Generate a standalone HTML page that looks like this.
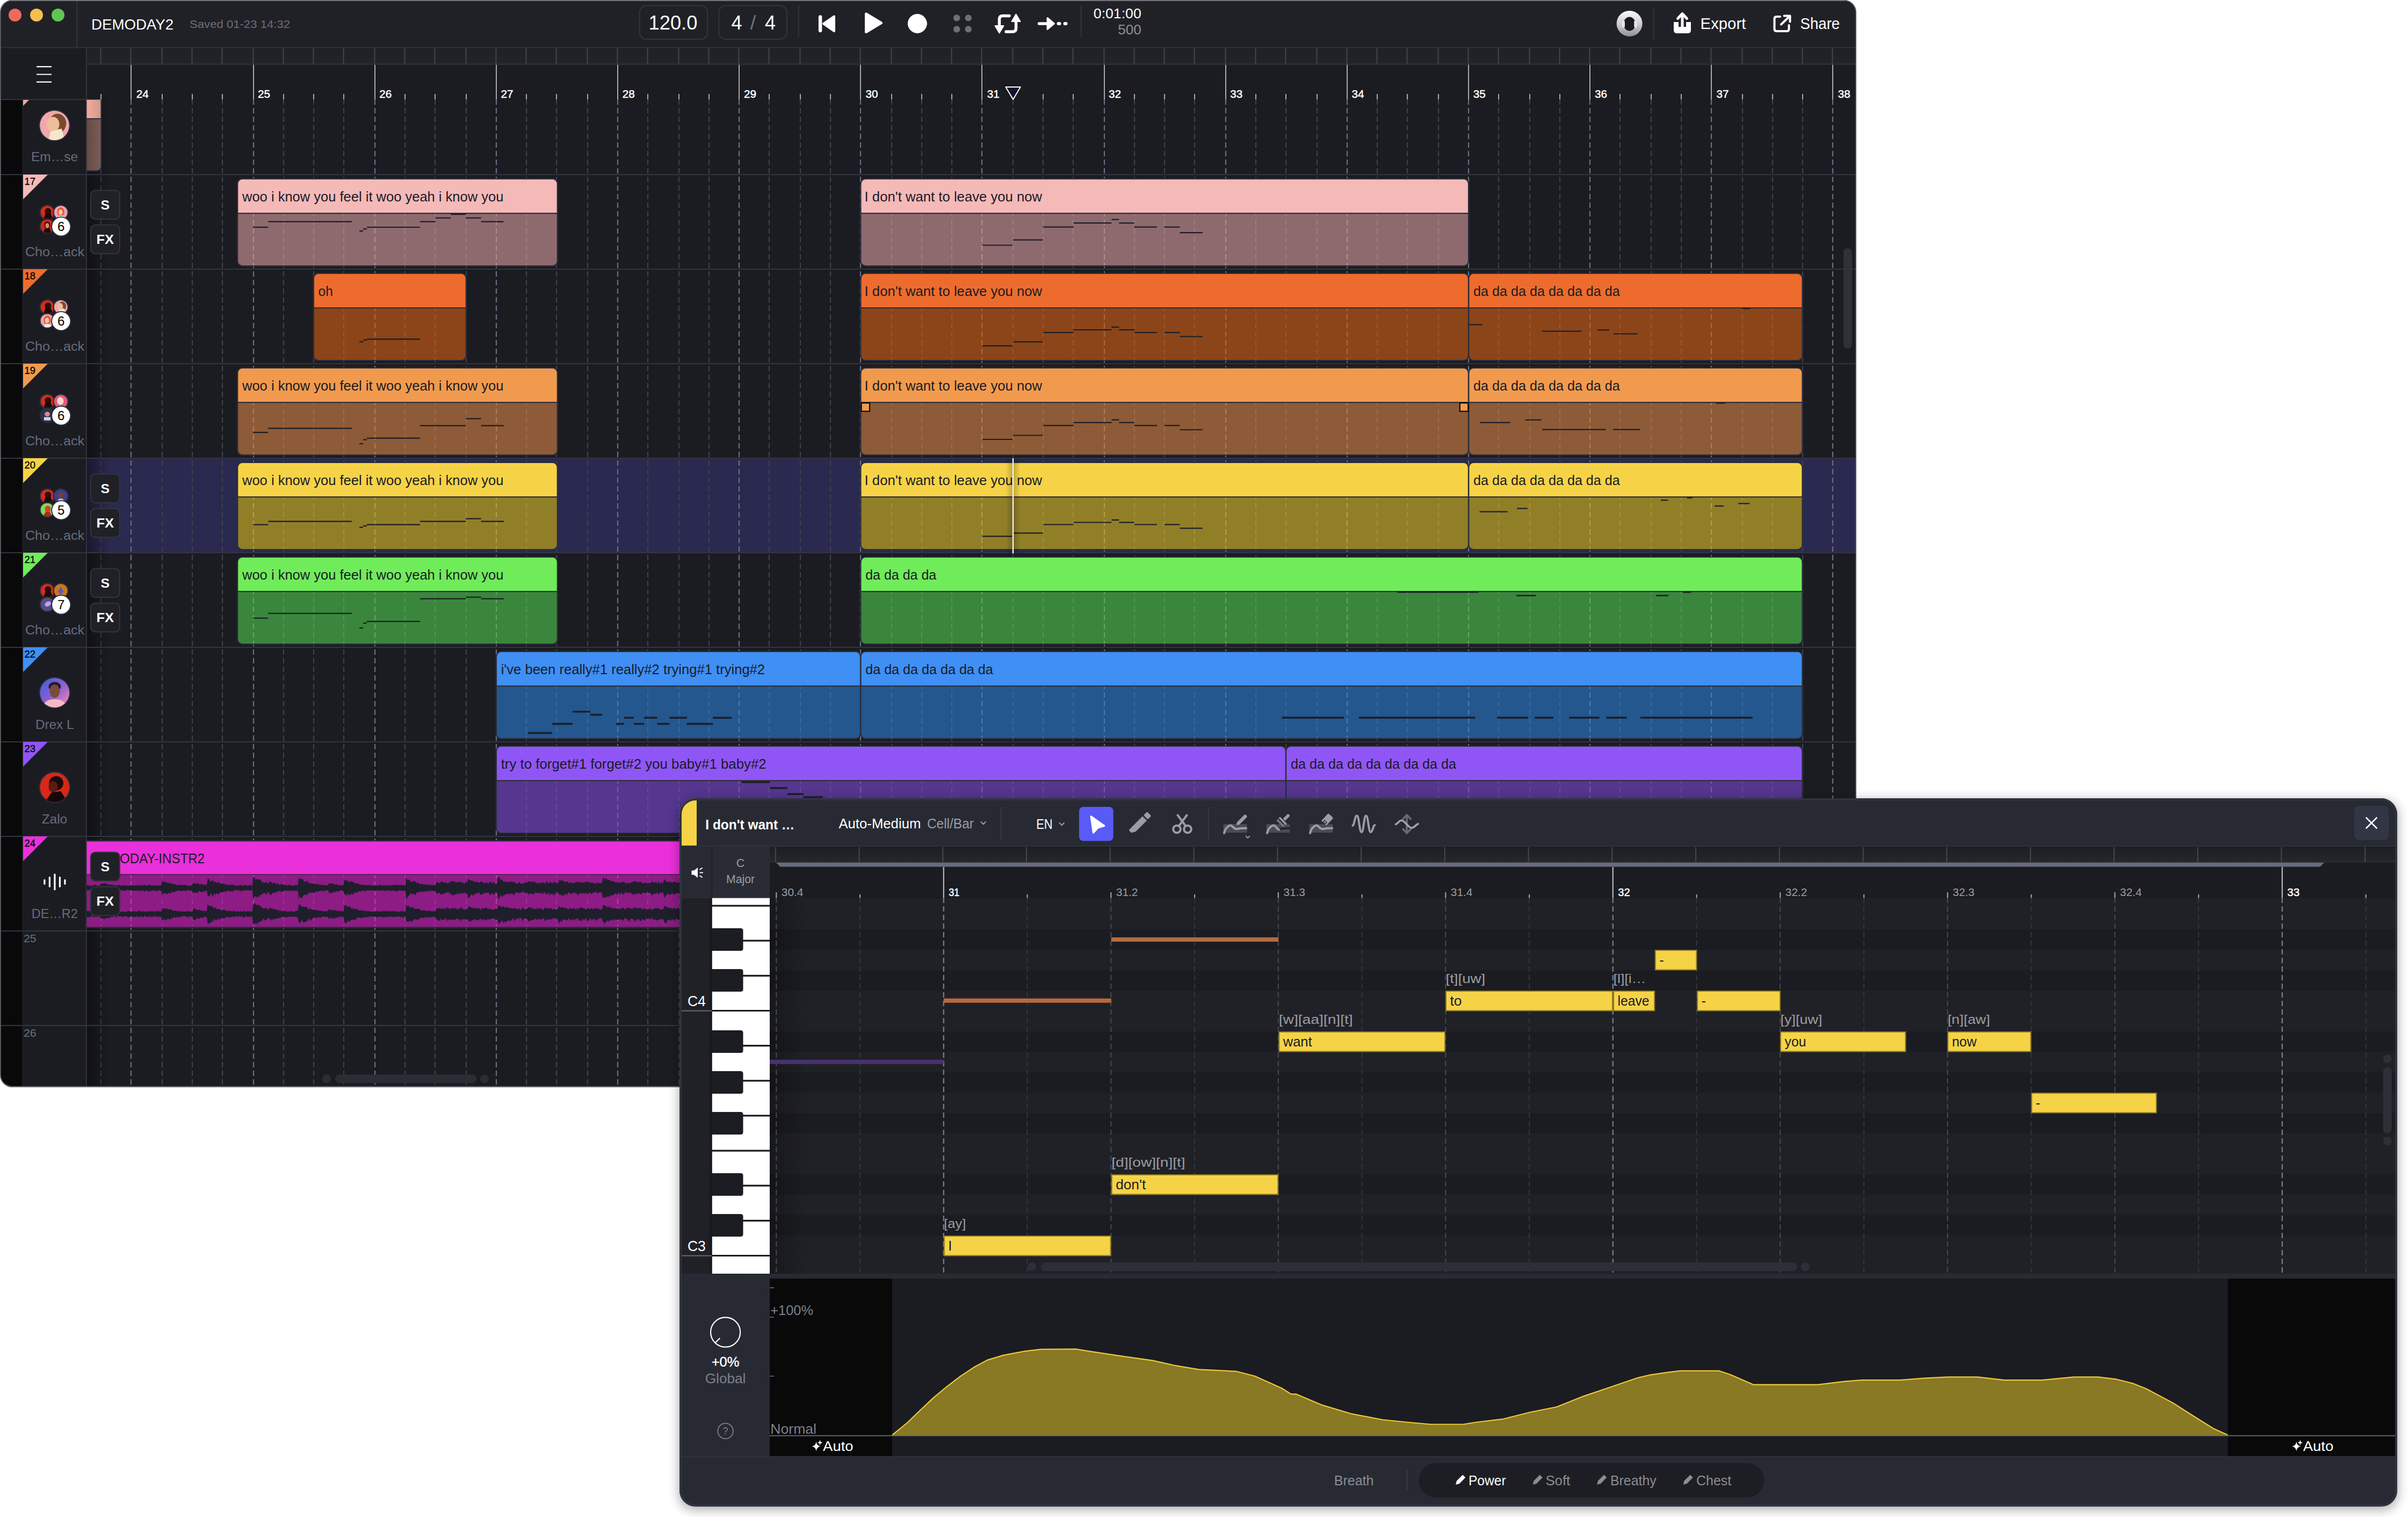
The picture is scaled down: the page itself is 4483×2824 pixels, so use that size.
<!DOCTYPE html>
<html lang="en"><head><meta charset="utf-8"><title>DEMODAY2</title>
<style>
html,body{margin:0;padding:0;background:#fff;}
body{width:4483px;height:2824px;overflow:hidden;font-family:'Liberation Sans', sans-serif;}
svg{display:block;font-family:"Liberation Sans",sans-serif;}
text{white-space:pre;}
</style></head><body>
<svg width="4483" height="2824" viewBox="0 0 4483 2824">
<defs>
<clipPath id="mwclip"><rect x="1" y="0.5" width="3454" height="2021.5" rx="22"/></clipPath>
<linearGradient id="lshade" x1="0" x2="1" y1="0" y2="0"><stop offset="0" stop-color="#000" stop-opacity="0.42"/><stop offset="1" stop-color="#000" stop-opacity="0"/></linearGradient>
<linearGradient id="c0a" x1="0" x2="1" y1="0" y2="0"><stop offset="0" stop-color="#f2ab9b"/><stop offset="1" stop-color="#cf998b"/></linearGradient>
<linearGradient id="c0b" x1="0" x2="1" y1="0" y2="0"><stop offset="0" stop-color="#664a46"/><stop offset="1" stop-color="#7b5d59"/></linearGradient>
<linearGradient id="phsh" x1="0" x2="1" y1="0" y2="0"><stop offset="0" stop-color="#000" stop-opacity="0"/><stop offset="0.5" stop-color="#000" stop-opacity="0.22"/><stop offset="1" stop-color="#000" stop-opacity="0"/></linearGradient>
<linearGradient id="strip" x1="0" x2="0" y1="0" y2="1"><stop offset="0" stop-color="#1f2026"/><stop offset="1" stop-color="#23242a"/></linearGradient>
<filter id="pshadow" x="-5%" y="-5%" width="110%" height="115%"><feGaussianBlur stdDeviation="10"/></filter>
<radialGradient id="avPink" cx="0.45" cy="0.4" r="0.7"><stop offset="0" stop-color="#f4c9b0"/><stop offset="0.45" stop-color="#e8a79a"/><stop offset="1" stop-color="#f0a9b4"/></radialGradient>
<radialGradient id="avRed" cx="0.5" cy="0.45" r="0.7"><stop offset="0" stop-color="#e23a22"/><stop offset="1" stop-color="#c11f14"/></radialGradient>
<linearGradient id="avBlue" x1="0" x2="1" y1="0" y2="1"><stop offset="0" stop-color="#3b5fe0"/><stop offset="0.5" stop-color="#8a5fd0"/><stop offset="1" stop-color="#ff8fb0"/></linearGradient>
</defs>
<g clip-path="url(#mwclip)">
<rect x="0.0" y="0.0" width="3457.0" height="2024.0" fill="#1b1c21" />
<rect x="0.0" y="0.0" width="3457.0" height="88.0" fill="#202127" />
<line x1="0.0" y1="88.7" x2="3455.0" y2="88.7" stroke="#32353f" stroke-width="2" />
<line x1="143.5" y1="0.0" x2="143.5" y2="88.0" stroke="#32353f" stroke-width="2" />
<circle cx="28" cy="28" r="12" fill="#ed6a5e"/>
<circle cx="68" cy="28" r="12" fill="#f5bf4f"/>
<circle cx="108" cy="28" r="12" fill="#61c554"/>
<text x="170.0" y="55.2" font-size="28.5" fill="#fff" textLength="153.0" lengthAdjust="spacingAndGlyphs" >DEMODAY2</text>
<text x="353.0" y="52.2" font-size="20.5" fill="#6c6e77" textLength="187.0" lengthAdjust="spacingAndGlyphs" >Saved 01-23 14:32</text>
<rect x="1190.7" y="10.5" width="126.6" height="62.5" rx="13" fill="#202127" stroke="#32353f" stroke-width="2"/>
<rect x="1338.2" y="10.5" width="126.6" height="62.5" rx="13" fill="#202127" stroke="#32353f" stroke-width="2"/>
<text x="1207.6" y="54.6" font-size="36" fill="#fff" textLength="90.7" lengthAdjust="spacingAndGlyphs" >120.0</text>
<text x="1361.6" y="54.6" font-size="36" fill="#fff" textLength="20.0" lengthAdjust="spacingAndGlyphs" >4</text>
<text x="1396.5" y="54.6" font-size="36" fill="#6c6e77" textLength="11.0" lengthAdjust="spacingAndGlyphs" >/</text>
<text x="1423.9" y="54.6" font-size="36" fill="#fff" textLength="20.0" lengthAdjust="spacingAndGlyphs" >4</text>
<line x1="1486.7" y1="10.0" x2="1486.7" y2="69.0" stroke="#32353f" stroke-width="2" />
<line x1="2012.8" y1="10.0" x2="2012.8" y2="69.0" stroke="#32353f" stroke-width="2" />
<line x1="3078.9" y1="14.0" x2="3078.9" y2="74.0" stroke="#32353f" stroke-width="2" />
<g fill="#fff" stroke="#fff" stroke-linejoin="round" stroke-linecap="round">
<rect x="1524.6" y="29" width="5" height="30.5" rx="2.5" stroke-width="1.5"/>
<path d="M1533 44.2 L1553 30.5 L1553 58 Z" stroke-width="4"/>
<path d="M1612.5 26 L1612.5 59.5 L1640.5 42.7 Z" stroke-width="5"/>
<circle cx="1707.9" cy="43.9" r="17.5" stroke-width="1"/>
</g>
<circle cx="1781.2" cy="33.4" r="6.2" fill="#6e6e73"/>
<circle cx="1781.2" cy="54.4" r="6.2" fill="#6e6e73"/>
<circle cx="1802.7" cy="33.4" r="6.2" fill="#6e6e73"/>
<circle cx="1802.7" cy="54.4" r="6.2" fill="#6e6e73"/>
<g fill="none" stroke="#fff" stroke-width="5.5" stroke-linecap="round" stroke-linejoin="round">
<path d="M1860.5 52 L1860.5 36 Q1860.5 29.5 1867 29.5 L1879 29.5"/>
<path d="M1891.5 36 L1891.5 52.5 Q1891.5 59 1885 59 L1873 59"/>
</g>
<path d="M1852.5 48 L1868.5 48 L1860.5 61.5 Z" fill="#fff" stroke="#fff" stroke-width="2" stroke-linejoin="round"/>
<path d="M1883.5 40 L1899.5 40 L1891.5 26.5 Z" fill="#fff" stroke="#fff" stroke-width="2" stroke-linejoin="round"/>
<g fill="#fff" stroke="#fff" stroke-linecap="round" stroke-linejoin="round">
<line x1="1934.5" y1="43.9" x2="1952" y2="43.9" stroke-width="5.5"/>
<path d="M1950 33.5 L1962.5 43.9 L1950 54.3 Z" stroke-width="3"/>
<rect x="1967.5" y="41" width="8" height="6" rx="3" stroke-width="0"/>
<rect x="1979.5" y="41" width="8" height="6" rx="3" stroke-width="0"/>
</g>
<text x="2035.8" y="34.4" font-size="25" fill="#fff" textLength="89.0" lengthAdjust="spacingAndGlyphs" >0:01:00</text>
<text x="2081.2" y="63.6" font-size="25" fill="#8e8e93" textLength="43.6" lengthAdjust="spacingAndGlyphs" >500</text>
<linearGradient id="ringg" x1="0" x2="0" y1="0" y2="1"><stop offset="0" stop-color="#fbfbfc"/><stop offset="0.55" stop-color="#c9cace"/><stop offset="1" stop-color="#8f9096"/></linearGradient>
<circle cx="3033.6" cy="43.9" r="24" fill="url(#ringg)"/>
<ellipse cx="3033.6" cy="44.5" rx="11" ry="13" fill="#1b1b1f"/>
<rect x="3019.5" y="38.5" width="5.5" height="13" rx="2.7" fill="#e4e4e7"/><rect x="3042.2" y="38.5" width="5.5" height="13" rx="2.7" fill="#e4e4e7"/>
<path d="M3116 41 L3116 56 Q3116 62 3122 62 L3142 62 Q3148 62 3148 56 L3148 41 L3139 41 L3139 50 L3125 50 L3125 41 Z" fill="#fff"/>
<path d="M3132 52 L3132 28 M3123.5 34.5 L3132 25.5 L3140.5 34.5" fill="none" stroke="#fff" stroke-width="5" stroke-linecap="round" stroke-linejoin="round"/>
<text x="3165.6" y="54.0" font-size="30" fill="#fff" textLength="84.7" lengthAdjust="spacingAndGlyphs" >Export</text>
<g fill="none" stroke="#fff" stroke-width="4" stroke-linecap="round" stroke-linejoin="round">
<path d="M3314 31 L3307.5 31 Q3303.5 31 3303.5 35 L3303.5 54 Q3303.5 58 3307.5 58 L3326.500 58 Q3330.500 58 3330.500 54 L3330.500 47"/>
<path d="M3316 45.500 L3332.500 29.500 M3321.500 29.500 L3332.500 29.500 L3332.500 40.500"/>
</g>
<text x="3351.5" y="54.0" font-size="30" fill="#fff" textLength="73.7" lengthAdjust="spacingAndGlyphs" >Share</text>
<rect x="0.0" y="89.7" width="160.0" height="96.0" fill="#1b1c21" />
<rect x="0.0" y="185.5" width="42.0" height="1837.0" fill="#090909" />
<rect x="42.0" y="185.5" width="118.0" height="1837.0" fill="#1b1c21" />
<line x1="68.0" y1="124.2" x2="96.0" y2="124.2" stroke="#fff" stroke-width="2.2" />
<line x1="68.0" y1="138.5" x2="96.0" y2="138.5" stroke="#fff" stroke-width="2.2" />
<line x1="68.0" y1="152.6" x2="96.0" y2="152.6" stroke="#fff" stroke-width="2.2" />
<rect x="161.0" y="89.7" width="3294.0" height="29.6" fill="url(#strip)" />
<line x1="161.0" y1="119.6" x2="3455.0" y2="119.6" stroke="#32353f" stroke-width="2" />
<line x1="187.5" y1="90.0" x2="187.5" y2="118.6" stroke="#42454e" stroke-width="2" />
<line x1="243.5" y1="90.0" x2="243.5" y2="118.6" stroke="#42454e" stroke-width="2" />
<line x1="301.5" y1="90.0" x2="301.5" y2="118.6" stroke="#42454e" stroke-width="2" />
<line x1="357.5" y1="90.0" x2="357.5" y2="118.6" stroke="#42454e" stroke-width="2" />
<line x1="413.5" y1="90.0" x2="413.5" y2="118.6" stroke="#42454e" stroke-width="2" />
<line x1="471.5" y1="90.0" x2="471.5" y2="118.6" stroke="#42454e" stroke-width="2" />
<line x1="527.5" y1="90.0" x2="527.5" y2="118.6" stroke="#42454e" stroke-width="2" />
<line x1="583.5" y1="90.0" x2="583.5" y2="118.6" stroke="#42454e" stroke-width="2" />
<line x1="639.5" y1="90.0" x2="639.5" y2="118.6" stroke="#42454e" stroke-width="2" />
<line x1="697.5" y1="90.0" x2="697.5" y2="118.6" stroke="#42454e" stroke-width="2" />
<line x1="753.5" y1="90.0" x2="753.5" y2="118.6" stroke="#42454e" stroke-width="2" />
<line x1="809.5" y1="90.0" x2="809.5" y2="118.6" stroke="#42454e" stroke-width="2" />
<line x1="867.5" y1="90.0" x2="867.5" y2="118.6" stroke="#42454e" stroke-width="2" />
<line x1="923.5" y1="90.0" x2="923.5" y2="118.6" stroke="#42454e" stroke-width="2" />
<line x1="979.5" y1="90.0" x2="979.5" y2="118.6" stroke="#42454e" stroke-width="2" />
<line x1="1035.5" y1="90.0" x2="1035.5" y2="118.6" stroke="#42454e" stroke-width="2" />
<line x1="1093.5" y1="90.0" x2="1093.5" y2="118.6" stroke="#42454e" stroke-width="2" />
<line x1="1149.5" y1="90.0" x2="1149.5" y2="118.6" stroke="#42454e" stroke-width="2" />
<line x1="1205.5" y1="90.0" x2="1205.5" y2="118.6" stroke="#42454e" stroke-width="2" />
<line x1="1263.5" y1="90.0" x2="1263.5" y2="118.6" stroke="#42454e" stroke-width="2" />
<line x1="1319.5" y1="90.0" x2="1319.5" y2="118.6" stroke="#42454e" stroke-width="2" />
<line x1="1375.5" y1="90.0" x2="1375.5" y2="118.6" stroke="#42454e" stroke-width="2" />
<line x1="1431.5" y1="90.0" x2="1431.5" y2="118.6" stroke="#42454e" stroke-width="2" />
<line x1="1489.5" y1="90.0" x2="1489.5" y2="118.6" stroke="#42454e" stroke-width="2" />
<line x1="1545.5" y1="90.0" x2="1545.5" y2="118.6" stroke="#42454e" stroke-width="2" />
<line x1="1601.5" y1="90.0" x2="1601.5" y2="118.6" stroke="#42454e" stroke-width="2" />
<line x1="1659.5" y1="90.0" x2="1659.5" y2="118.6" stroke="#42454e" stroke-width="2" />
<line x1="1715.5" y1="90.0" x2="1715.5" y2="118.6" stroke="#42454e" stroke-width="2" />
<line x1="1771.5" y1="90.0" x2="1771.5" y2="118.6" stroke="#42454e" stroke-width="2" />
<line x1="1827.5" y1="90.0" x2="1827.5" y2="118.6" stroke="#42454e" stroke-width="2" />
<line x1="1885.5" y1="90.0" x2="1885.5" y2="118.6" stroke="#42454e" stroke-width="2" />
<line x1="1941.5" y1="90.0" x2="1941.5" y2="118.6" stroke="#42454e" stroke-width="2" />
<line x1="1997.5" y1="90.0" x2="1997.5" y2="118.6" stroke="#42454e" stroke-width="2" />
<line x1="2055.5" y1="90.0" x2="2055.5" y2="118.6" stroke="#42454e" stroke-width="2" />
<line x1="2111.5" y1="90.0" x2="2111.5" y2="118.6" stroke="#42454e" stroke-width="2" />
<line x1="2167.5" y1="90.0" x2="2167.5" y2="118.6" stroke="#42454e" stroke-width="2" />
<line x1="2223.5" y1="90.0" x2="2223.5" y2="118.6" stroke="#42454e" stroke-width="2" />
<line x1="2281.5" y1="90.0" x2="2281.5" y2="118.6" stroke="#42454e" stroke-width="2" />
<line x1="2337.5" y1="90.0" x2="2337.5" y2="118.6" stroke="#42454e" stroke-width="2" />
<line x1="2393.5" y1="90.0" x2="2393.5" y2="118.6" stroke="#42454e" stroke-width="2" />
<line x1="2451.5" y1="90.0" x2="2451.5" y2="118.6" stroke="#42454e" stroke-width="2" />
<line x1="2507.5" y1="90.0" x2="2507.5" y2="118.6" stroke="#42454e" stroke-width="2" />
<line x1="2563.5" y1="90.0" x2="2563.5" y2="118.6" stroke="#42454e" stroke-width="2" />
<line x1="2619.5" y1="90.0" x2="2619.5" y2="118.6" stroke="#42454e" stroke-width="2" />
<line x1="2677.5" y1="90.0" x2="2677.5" y2="118.6" stroke="#42454e" stroke-width="2" />
<line x1="2733.5" y1="90.0" x2="2733.5" y2="118.6" stroke="#42454e" stroke-width="2" />
<line x1="2789.5" y1="90.0" x2="2789.5" y2="118.6" stroke="#42454e" stroke-width="2" />
<line x1="2847.5" y1="90.0" x2="2847.5" y2="118.6" stroke="#42454e" stroke-width="2" />
<line x1="2903.5" y1="90.0" x2="2903.5" y2="118.6" stroke="#42454e" stroke-width="2" />
<line x1="2959.5" y1="90.0" x2="2959.5" y2="118.6" stroke="#42454e" stroke-width="2" />
<line x1="3015.5" y1="90.0" x2="3015.5" y2="118.6" stroke="#42454e" stroke-width="2" />
<line x1="3073.5" y1="90.0" x2="3073.5" y2="118.6" stroke="#42454e" stroke-width="2" />
<line x1="3129.5" y1="90.0" x2="3129.5" y2="118.6" stroke="#42454e" stroke-width="2" />
<line x1="3185.5" y1="90.0" x2="3185.5" y2="118.6" stroke="#42454e" stroke-width="2" />
<line x1="3243.5" y1="90.0" x2="3243.5" y2="118.6" stroke="#42454e" stroke-width="2" />
<line x1="3299.5" y1="90.0" x2="3299.5" y2="118.6" stroke="#42454e" stroke-width="2" />
<line x1="3355.5" y1="90.0" x2="3355.5" y2="118.6" stroke="#42454e" stroke-width="2" />
<line x1="3411.5" y1="90.0" x2="3411.5" y2="118.6" stroke="#42454e" stroke-width="2" />
<line x1="188.0" y1="175.0" x2="188.0" y2="185.0" stroke="#aaaaac" stroke-width="2" />
<line x1="244.0" y1="120.5" x2="244.0" y2="185.0" stroke="#aaaaac" stroke-width="2" />
<text x="253.7" y="181.6" font-size="20.5" fill="#fff" textLength="23.0" lengthAdjust="spacingAndGlyphs" stroke="#fff" stroke-width="0.5">24</text>
<line x1="302.0" y1="175.0" x2="302.0" y2="185.0" stroke="#aaaaac" stroke-width="2" />
<line x1="358.0" y1="175.0" x2="358.0" y2="185.0" stroke="#aaaaac" stroke-width="2" />
<line x1="414.0" y1="175.0" x2="414.0" y2="185.0" stroke="#aaaaac" stroke-width="2" />
<line x1="472.0" y1="120.5" x2="472.0" y2="185.0" stroke="#aaaaac" stroke-width="2" />
<text x="480.0" y="181.6" font-size="20.5" fill="#fff" textLength="23.0" lengthAdjust="spacingAndGlyphs" stroke="#fff" stroke-width="0.5">25</text>
<line x1="528.0" y1="175.0" x2="528.0" y2="185.0" stroke="#aaaaac" stroke-width="2" />
<line x1="584.0" y1="175.0" x2="584.0" y2="185.0" stroke="#aaaaac" stroke-width="2" />
<line x1="640.0" y1="175.0" x2="640.0" y2="185.0" stroke="#aaaaac" stroke-width="2" />
<line x1="698.0" y1="120.5" x2="698.0" y2="185.0" stroke="#aaaaac" stroke-width="2" />
<text x="706.3" y="181.6" font-size="20.5" fill="#fff" textLength="23.0" lengthAdjust="spacingAndGlyphs" stroke="#fff" stroke-width="0.5">26</text>
<line x1="754.0" y1="175.0" x2="754.0" y2="185.0" stroke="#aaaaac" stroke-width="2" />
<line x1="810.0" y1="175.0" x2="810.0" y2="185.0" stroke="#aaaaac" stroke-width="2" />
<line x1="868.0" y1="175.0" x2="868.0" y2="185.0" stroke="#aaaaac" stroke-width="2" />
<line x1="924.0" y1="120.5" x2="924.0" y2="185.0" stroke="#aaaaac" stroke-width="2" />
<text x="932.6" y="181.6" font-size="20.5" fill="#fff" textLength="23.0" lengthAdjust="spacingAndGlyphs" stroke="#fff" stroke-width="0.5">27</text>
<line x1="980.0" y1="175.0" x2="980.0" y2="185.0" stroke="#aaaaac" stroke-width="2" />
<line x1="1036.0" y1="175.0" x2="1036.0" y2="185.0" stroke="#aaaaac" stroke-width="2" />
<line x1="1094.0" y1="175.0" x2="1094.0" y2="185.0" stroke="#aaaaac" stroke-width="2" />
<line x1="1150.0" y1="120.5" x2="1150.0" y2="185.0" stroke="#aaaaac" stroke-width="2" />
<text x="1158.8" y="181.6" font-size="20.5" fill="#fff" textLength="23.0" lengthAdjust="spacingAndGlyphs" stroke="#fff" stroke-width="0.5">28</text>
<line x1="1206.0" y1="175.0" x2="1206.0" y2="185.0" stroke="#aaaaac" stroke-width="2" />
<line x1="1264.0" y1="175.0" x2="1264.0" y2="185.0" stroke="#aaaaac" stroke-width="2" />
<line x1="1320.0" y1="175.0" x2="1320.0" y2="185.0" stroke="#aaaaac" stroke-width="2" />
<line x1="1376.0" y1="120.5" x2="1376.0" y2="185.0" stroke="#aaaaac" stroke-width="2" />
<text x="1385.1" y="181.6" font-size="20.5" fill="#fff" textLength="23.0" lengthAdjust="spacingAndGlyphs" stroke="#fff" stroke-width="0.5">29</text>
<line x1="1432.0" y1="175.0" x2="1432.0" y2="185.0" stroke="#aaaaac" stroke-width="2" />
<line x1="1490.0" y1="175.0" x2="1490.0" y2="185.0" stroke="#aaaaac" stroke-width="2" />
<line x1="1546.0" y1="175.0" x2="1546.0" y2="185.0" stroke="#aaaaac" stroke-width="2" />
<line x1="1602.0" y1="120.5" x2="1602.0" y2="185.0" stroke="#aaaaac" stroke-width="2" />
<text x="1611.4" y="181.6" font-size="20.5" fill="#fff" textLength="23.0" lengthAdjust="spacingAndGlyphs" stroke="#fff" stroke-width="0.5">30</text>
<line x1="1660.0" y1="175.0" x2="1660.0" y2="185.0" stroke="#aaaaac" stroke-width="2" />
<line x1="1716.0" y1="175.0" x2="1716.0" y2="185.0" stroke="#aaaaac" stroke-width="2" />
<line x1="1772.0" y1="175.0" x2="1772.0" y2="185.0" stroke="#aaaaac" stroke-width="2" />
<line x1="1828.0" y1="120.5" x2="1828.0" y2="185.0" stroke="#aaaaac" stroke-width="2" />
<text x="1837.7" y="181.6" font-size="20.5" fill="#fff" textLength="23.0" lengthAdjust="spacingAndGlyphs" stroke="#fff" stroke-width="0.5">31</text>
<line x1="1886.0" y1="175.0" x2="1886.0" y2="185.0" stroke="#aaaaac" stroke-width="2" />
<line x1="1942.0" y1="175.0" x2="1942.0" y2="185.0" stroke="#aaaaac" stroke-width="2" />
<line x1="1998.0" y1="175.0" x2="1998.0" y2="185.0" stroke="#aaaaac" stroke-width="2" />
<line x1="2056.0" y1="120.5" x2="2056.0" y2="185.0" stroke="#aaaaac" stroke-width="2" />
<text x="2064.0" y="181.6" font-size="20.5" fill="#fff" textLength="23.0" lengthAdjust="spacingAndGlyphs" stroke="#fff" stroke-width="0.5">32</text>
<line x1="2112.0" y1="175.0" x2="2112.0" y2="185.0" stroke="#aaaaac" stroke-width="2" />
<line x1="2168.0" y1="175.0" x2="2168.0" y2="185.0" stroke="#aaaaac" stroke-width="2" />
<line x1="2224.0" y1="175.0" x2="2224.0" y2="185.0" stroke="#aaaaac" stroke-width="2" />
<line x1="2282.0" y1="120.5" x2="2282.0" y2="185.0" stroke="#aaaaac" stroke-width="2" />
<text x="2290.3" y="181.6" font-size="20.5" fill="#fff" textLength="23.0" lengthAdjust="spacingAndGlyphs" stroke="#fff" stroke-width="0.5">33</text>
<line x1="2338.0" y1="175.0" x2="2338.0" y2="185.0" stroke="#aaaaac" stroke-width="2" />
<line x1="2394.0" y1="175.0" x2="2394.0" y2="185.0" stroke="#aaaaac" stroke-width="2" />
<line x1="2452.0" y1="175.0" x2="2452.0" y2="185.0" stroke="#aaaaac" stroke-width="2" />
<line x1="2508.0" y1="120.5" x2="2508.0" y2="185.0" stroke="#aaaaac" stroke-width="2" />
<text x="2516.6" y="181.6" font-size="20.5" fill="#fff" textLength="23.0" lengthAdjust="spacingAndGlyphs" stroke="#fff" stroke-width="0.5">34</text>
<line x1="2564.0" y1="175.0" x2="2564.0" y2="185.0" stroke="#aaaaac" stroke-width="2" />
<line x1="2620.0" y1="175.0" x2="2620.0" y2="185.0" stroke="#aaaaac" stroke-width="2" />
<line x1="2678.0" y1="175.0" x2="2678.0" y2="185.0" stroke="#aaaaac" stroke-width="2" />
<line x1="2734.0" y1="120.5" x2="2734.0" y2="185.0" stroke="#aaaaac" stroke-width="2" />
<text x="2742.8" y="181.6" font-size="20.5" fill="#fff" textLength="23.0" lengthAdjust="spacingAndGlyphs" stroke="#fff" stroke-width="0.5">35</text>
<line x1="2790.0" y1="175.0" x2="2790.0" y2="185.0" stroke="#aaaaac" stroke-width="2" />
<line x1="2848.0" y1="175.0" x2="2848.0" y2="185.0" stroke="#aaaaac" stroke-width="2" />
<line x1="2904.0" y1="175.0" x2="2904.0" y2="185.0" stroke="#aaaaac" stroke-width="2" />
<line x1="2960.0" y1="120.5" x2="2960.0" y2="185.0" stroke="#aaaaac" stroke-width="2" />
<text x="2969.1" y="181.6" font-size="20.5" fill="#fff" textLength="23.0" lengthAdjust="spacingAndGlyphs" stroke="#fff" stroke-width="0.5">36</text>
<line x1="3016.0" y1="175.0" x2="3016.0" y2="185.0" stroke="#aaaaac" stroke-width="2" />
<line x1="3074.0" y1="175.0" x2="3074.0" y2="185.0" stroke="#aaaaac" stroke-width="2" />
<line x1="3130.0" y1="175.0" x2="3130.0" y2="185.0" stroke="#aaaaac" stroke-width="2" />
<line x1="3186.0" y1="120.5" x2="3186.0" y2="185.0" stroke="#aaaaac" stroke-width="2" />
<text x="3195.4" y="181.6" font-size="20.5" fill="#fff" textLength="23.0" lengthAdjust="spacingAndGlyphs" stroke="#fff" stroke-width="0.5">37</text>
<line x1="3244.0" y1="175.0" x2="3244.0" y2="185.0" stroke="#aaaaac" stroke-width="2" />
<line x1="3300.0" y1="175.0" x2="3300.0" y2="185.0" stroke="#aaaaac" stroke-width="2" />
<line x1="3356.0" y1="175.0" x2="3356.0" y2="185.0" stroke="#aaaaac" stroke-width="2" />
<line x1="3412.0" y1="120.5" x2="3412.0" y2="185.0" stroke="#aaaaac" stroke-width="2" />
<text x="3421.7" y="181.6" font-size="20.5" fill="#fff" textLength="23.0" lengthAdjust="spacingAndGlyphs" stroke="#fff" stroke-width="0.5">38</text>
<rect x="161.0" y="852.0" width="3294.0" height="176.0" fill="#2a2950" />
<line x1="188.0" y1="185.0" x2="188.0" y2="2022.0" stroke="#3d3f4a" stroke-width="2.2" stroke-dasharray="10 6"/>
<line x1="244.0" y1="185.0" x2="244.0" y2="2022.0" stroke="#696d80" stroke-width="2.2" stroke-dasharray="10 6"/>
<line x1="302.0" y1="185.0" x2="302.0" y2="2022.0" stroke="#3d3f4a" stroke-width="2.2" stroke-dasharray="10 6"/>
<line x1="358.0" y1="185.0" x2="358.0" y2="2022.0" stroke="#3d3f4a" stroke-width="2.2" stroke-dasharray="10 6"/>
<line x1="414.0" y1="185.0" x2="414.0" y2="2022.0" stroke="#3d3f4a" stroke-width="2.2" stroke-dasharray="10 6"/>
<line x1="472.0" y1="185.0" x2="472.0" y2="2022.0" stroke="#696d80" stroke-width="2.2" stroke-dasharray="10 6"/>
<line x1="528.0" y1="185.0" x2="528.0" y2="2022.0" stroke="#3d3f4a" stroke-width="2.2" stroke-dasharray="10 6"/>
<line x1="584.0" y1="185.0" x2="584.0" y2="2022.0" stroke="#3d3f4a" stroke-width="2.2" stroke-dasharray="10 6"/>
<line x1="640.0" y1="185.0" x2="640.0" y2="2022.0" stroke="#3d3f4a" stroke-width="2.2" stroke-dasharray="10 6"/>
<line x1="698.0" y1="185.0" x2="698.0" y2="2022.0" stroke="#696d80" stroke-width="2.2" stroke-dasharray="10 6"/>
<line x1="754.0" y1="185.0" x2="754.0" y2="2022.0" stroke="#3d3f4a" stroke-width="2.2" stroke-dasharray="10 6"/>
<line x1="810.0" y1="185.0" x2="810.0" y2="2022.0" stroke="#3d3f4a" stroke-width="2.2" stroke-dasharray="10 6"/>
<line x1="868.0" y1="185.0" x2="868.0" y2="2022.0" stroke="#3d3f4a" stroke-width="2.2" stroke-dasharray="10 6"/>
<line x1="924.0" y1="185.0" x2="924.0" y2="2022.0" stroke="#696d80" stroke-width="2.2" stroke-dasharray="10 6"/>
<line x1="980.0" y1="185.0" x2="980.0" y2="2022.0" stroke="#3d3f4a" stroke-width="2.2" stroke-dasharray="10 6"/>
<line x1="1036.0" y1="185.0" x2="1036.0" y2="2022.0" stroke="#3d3f4a" stroke-width="2.2" stroke-dasharray="10 6"/>
<line x1="1094.0" y1="185.0" x2="1094.0" y2="2022.0" stroke="#3d3f4a" stroke-width="2.2" stroke-dasharray="10 6"/>
<line x1="1150.0" y1="185.0" x2="1150.0" y2="2022.0" stroke="#696d80" stroke-width="2.2" stroke-dasharray="10 6"/>
<line x1="1206.0" y1="185.0" x2="1206.0" y2="2022.0" stroke="#3d3f4a" stroke-width="2.2" stroke-dasharray="10 6"/>
<line x1="1264.0" y1="185.0" x2="1264.0" y2="2022.0" stroke="#3d3f4a" stroke-width="2.2" stroke-dasharray="10 6"/>
<line x1="1320.0" y1="185.0" x2="1320.0" y2="2022.0" stroke="#3d3f4a" stroke-width="2.2" stroke-dasharray="10 6"/>
<line x1="1376.0" y1="185.0" x2="1376.0" y2="2022.0" stroke="#696d80" stroke-width="2.2" stroke-dasharray="10 6"/>
<line x1="1432.0" y1="185.0" x2="1432.0" y2="2022.0" stroke="#3d3f4a" stroke-width="2.2" stroke-dasharray="10 6"/>
<line x1="1490.0" y1="185.0" x2="1490.0" y2="2022.0" stroke="#3d3f4a" stroke-width="2.2" stroke-dasharray="10 6"/>
<line x1="1546.0" y1="185.0" x2="1546.0" y2="2022.0" stroke="#3d3f4a" stroke-width="2.2" stroke-dasharray="10 6"/>
<line x1="1602.0" y1="185.0" x2="1602.0" y2="2022.0" stroke="#696d80" stroke-width="2.2" stroke-dasharray="10 6"/>
<line x1="1660.0" y1="185.0" x2="1660.0" y2="2022.0" stroke="#3d3f4a" stroke-width="2.2" stroke-dasharray="10 6"/>
<line x1="1716.0" y1="185.0" x2="1716.0" y2="2022.0" stroke="#3d3f4a" stroke-width="2.2" stroke-dasharray="10 6"/>
<line x1="1772.0" y1="185.0" x2="1772.0" y2="2022.0" stroke="#3d3f4a" stroke-width="2.2" stroke-dasharray="10 6"/>
<line x1="1828.0" y1="185.0" x2="1828.0" y2="2022.0" stroke="#696d80" stroke-width="2.2" stroke-dasharray="10 6"/>
<line x1="1886.0" y1="185.0" x2="1886.0" y2="2022.0" stroke="#3d3f4a" stroke-width="2.2" stroke-dasharray="10 6"/>
<line x1="1942.0" y1="185.0" x2="1942.0" y2="2022.0" stroke="#3d3f4a" stroke-width="2.2" stroke-dasharray="10 6"/>
<line x1="1998.0" y1="185.0" x2="1998.0" y2="2022.0" stroke="#3d3f4a" stroke-width="2.2" stroke-dasharray="10 6"/>
<line x1="2056.0" y1="185.0" x2="2056.0" y2="2022.0" stroke="#696d80" stroke-width="2.2" stroke-dasharray="10 6"/>
<line x1="2112.0" y1="185.0" x2="2112.0" y2="2022.0" stroke="#3d3f4a" stroke-width="2.2" stroke-dasharray="10 6"/>
<line x1="2168.0" y1="185.0" x2="2168.0" y2="2022.0" stroke="#3d3f4a" stroke-width="2.2" stroke-dasharray="10 6"/>
<line x1="2224.0" y1="185.0" x2="2224.0" y2="2022.0" stroke="#3d3f4a" stroke-width="2.2" stroke-dasharray="10 6"/>
<line x1="2282.0" y1="185.0" x2="2282.0" y2="2022.0" stroke="#696d80" stroke-width="2.2" stroke-dasharray="10 6"/>
<line x1="2338.0" y1="185.0" x2="2338.0" y2="2022.0" stroke="#3d3f4a" stroke-width="2.2" stroke-dasharray="10 6"/>
<line x1="2394.0" y1="185.0" x2="2394.0" y2="2022.0" stroke="#3d3f4a" stroke-width="2.2" stroke-dasharray="10 6"/>
<line x1="2452.0" y1="185.0" x2="2452.0" y2="2022.0" stroke="#3d3f4a" stroke-width="2.2" stroke-dasharray="10 6"/>
<line x1="2508.0" y1="185.0" x2="2508.0" y2="2022.0" stroke="#696d80" stroke-width="2.2" stroke-dasharray="10 6"/>
<line x1="2564.0" y1="185.0" x2="2564.0" y2="2022.0" stroke="#3d3f4a" stroke-width="2.2" stroke-dasharray="10 6"/>
<line x1="2620.0" y1="185.0" x2="2620.0" y2="2022.0" stroke="#3d3f4a" stroke-width="2.2" stroke-dasharray="10 6"/>
<line x1="2678.0" y1="185.0" x2="2678.0" y2="2022.0" stroke="#3d3f4a" stroke-width="2.2" stroke-dasharray="10 6"/>
<line x1="2734.0" y1="185.0" x2="2734.0" y2="2022.0" stroke="#696d80" stroke-width="2.2" stroke-dasharray="10 6"/>
<line x1="2790.0" y1="185.0" x2="2790.0" y2="2022.0" stroke="#3d3f4a" stroke-width="2.2" stroke-dasharray="10 6"/>
<line x1="2848.0" y1="185.0" x2="2848.0" y2="2022.0" stroke="#3d3f4a" stroke-width="2.2" stroke-dasharray="10 6"/>
<line x1="2904.0" y1="185.0" x2="2904.0" y2="2022.0" stroke="#3d3f4a" stroke-width="2.2" stroke-dasharray="10 6"/>
<line x1="2960.0" y1="185.0" x2="2960.0" y2="2022.0" stroke="#696d80" stroke-width="2.2" stroke-dasharray="10 6"/>
<line x1="3016.0" y1="185.0" x2="3016.0" y2="2022.0" stroke="#3d3f4a" stroke-width="2.2" stroke-dasharray="10 6"/>
<line x1="3074.0" y1="185.0" x2="3074.0" y2="2022.0" stroke="#3d3f4a" stroke-width="2.2" stroke-dasharray="10 6"/>
<line x1="3130.0" y1="185.0" x2="3130.0" y2="2022.0" stroke="#3d3f4a" stroke-width="2.2" stroke-dasharray="10 6"/>
<line x1="3186.0" y1="185.0" x2="3186.0" y2="2022.0" stroke="#696d80" stroke-width="2.2" stroke-dasharray="10 6"/>
<line x1="3244.0" y1="185.0" x2="3244.0" y2="2022.0" stroke="#3d3f4a" stroke-width="2.2" stroke-dasharray="10 6"/>
<line x1="3300.0" y1="185.0" x2="3300.0" y2="2022.0" stroke="#3d3f4a" stroke-width="2.2" stroke-dasharray="10 6"/>
<line x1="3356.0" y1="185.0" x2="3356.0" y2="2022.0" stroke="#3d3f4a" stroke-width="2.2" stroke-dasharray="10 6"/>
<line x1="3412.0" y1="185.0" x2="3412.0" y2="2022.0" stroke="#696d80" stroke-width="2.2" stroke-dasharray="10 6"/>
<rect x="161.0" y="185.5" width="44.0" height="1837.0" fill="url(#lshade)" />
<line x1="0.0" y1="325.0" x2="3455.0" y2="325.0" stroke="#32353f" stroke-width="2.1" />
<line x1="0.0" y1="501.0" x2="3455.0" y2="501.0" stroke="#32353f" stroke-width="2.1" />
<line x1="0.0" y1="677.0" x2="3455.0" y2="677.0" stroke="#32353f" stroke-width="2.1" />
<line x1="0.0" y1="853.0" x2="3455.0" y2="853.0" stroke="#32353f" stroke-width="2.1" />
<line x1="0.0" y1="1029.0" x2="3455.0" y2="1029.0" stroke="#32353f" stroke-width="2.1" />
<line x1="0.0" y1="1205.0" x2="3455.0" y2="1205.0" stroke="#32353f" stroke-width="2.1" />
<line x1="0.0" y1="1381.0" x2="3455.0" y2="1381.0" stroke="#32353f" stroke-width="2.1" />
<line x1="0.0" y1="1557.0" x2="3455.0" y2="1557.0" stroke="#32353f" stroke-width="2.1" />
<line x1="0.0" y1="1733.0" x2="3455.0" y2="1733.0" stroke="#32353f" stroke-width="2.1" />
<line x1="0.0" y1="1909.0" x2="3455.0" y2="1909.0" stroke="#32353f" stroke-width="2.1" />
<line x1="0.0" y1="185.3" x2="161.0" y2="185.3" stroke="#32353f" stroke-width="2" />
<line x1="160.8" y1="89.0" x2="160.8" y2="2022.0" stroke="#32353f" stroke-width="2" />
<line x1="42.3" y1="185.0" x2="42.3" y2="2022.0" stroke="#23252c" stroke-width="1.5" />
<g>
<rect x="161.5" y="185.5" width="27.0" height="34.5" fill="url(#c0a)" />
<path d="M161.5 222 L188.5 222 L188.5 309 Q188.500 318 179.500 318 L161.500 318 Z" fill="url(#c0b)"/>
<path d="M188.5 185.5 L188.5 309 Q188.5 318 179.5 318 L161.5 318" fill="none" stroke="#2a2e3b" stroke-width="2.2"/>
<line x1="161.5" y1="221.0" x2="188.5" y2="221.0" stroke="#2a2e3b" stroke-width="2.2" />
</g>
<clipPath id="cc1"><rect x="442.2" y="333" width="595.6" height="162" rx="9"/></clipPath>
<g clip-path="url(#cc1)">
<rect x="442.2" y="397.0" width="595.6" height="98.0" fill="#8e6a6e" />
<line x1="472.0" y1="185.0" x2="472.0" y2="495.0" stroke="#fadcdc" stroke-width="2.2" stroke-dasharray="10 6" stroke-opacity="0.3"/>
<line x1="528.0" y1="185.0" x2="528.0" y2="495.0" stroke="#fadcdc" stroke-width="2.2" stroke-dasharray="10 6" stroke-opacity="0.15"/>
<line x1="584.0" y1="185.0" x2="584.0" y2="495.0" stroke="#fadcdc" stroke-width="2.2" stroke-dasharray="10 6" stroke-opacity="0.15"/>
<line x1="640.0" y1="185.0" x2="640.0" y2="495.0" stroke="#fadcdc" stroke-width="2.2" stroke-dasharray="10 6" stroke-opacity="0.15"/>
<line x1="698.0" y1="185.0" x2="698.0" y2="495.0" stroke="#fadcdc" stroke-width="2.2" stroke-dasharray="10 6" stroke-opacity="0.3"/>
<line x1="754.0" y1="185.0" x2="754.0" y2="495.0" stroke="#fadcdc" stroke-width="2.2" stroke-dasharray="10 6" stroke-opacity="0.15"/>
<line x1="810.0" y1="185.0" x2="810.0" y2="495.0" stroke="#fadcdc" stroke-width="2.2" stroke-dasharray="10 6" stroke-opacity="0.15"/>
<line x1="868.0" y1="185.0" x2="868.0" y2="495.0" stroke="#fadcdc" stroke-width="2.2" stroke-dasharray="10 6" stroke-opacity="0.15"/>
<line x1="924.0" y1="185.0" x2="924.0" y2="495.0" stroke="#fadcdc" stroke-width="2.2" stroke-dasharray="10 6" stroke-opacity="0.3"/>
<line x1="980.0" y1="185.0" x2="980.0" y2="495.0" stroke="#fadcdc" stroke-width="2.2" stroke-dasharray="10 6" stroke-opacity="0.15"/>
<rect x="442.2" y="333.0" width="595.6" height="64.0" fill="#f5b9b8" />
<line x1="442.2" y1="397.2" x2="1037.8" y2="397.2" stroke="#33303a" stroke-width="2.2" />
</g>
<rect x="442.2" y="333" width="595.6" height="162" rx="9" fill="none" stroke="#2a2e3b" stroke-width="2.2"/>
<text x="451.0" y="375.0" font-size="25" fill="#1a1b26" textLength="486.4" lengthAdjust="spacingAndGlyphs" >woo i know you feel it woo yeah i know you</text>
<line x1="471.2" y1="423.0" x2="499.3" y2="423.0" stroke="#1c1d27" stroke-width="2.2" />
<line x1="499.3" y1="412.7" x2="654.9" y2="412.7" stroke="#1c1d27" stroke-width="2.2" />
<line x1="669.1" y1="430.0" x2="676.0" y2="430.0" stroke="#1c1d27" stroke-width="2.2" />
<line x1="676.0" y1="426.3" x2="683.0" y2="426.3" stroke="#1c1d27" stroke-width="2.2" />
<line x1="683.0" y1="423.0" x2="782.0" y2="423.0" stroke="#1c1d27" stroke-width="2.2" />
<line x1="782.0" y1="412.7" x2="811.0" y2="412.7" stroke="#1c1d27" stroke-width="2.2" />
<line x1="811.0" y1="405.7" x2="839.2" y2="405.7" stroke="#1c1d27" stroke-width="2.2" />
<line x1="839.2" y1="399.0" x2="867.4" y2="399.0" stroke="#1c1d27" stroke-width="2.2" />
<line x1="867.4" y1="405.7" x2="895.7" y2="405.7" stroke="#1c1d27" stroke-width="2.2" />
<line x1="895.7" y1="412.7" x2="937.5" y2="412.7" stroke="#1c1d27" stroke-width="2.2" />
<clipPath id="cc2"><rect x="1602.4" y="333" width="1131.6" height="162" rx="9"/></clipPath>
<g clip-path="url(#cc2)">
<rect x="1602.4" y="397.0" width="1131.6" height="98.0" fill="#8e6a6e" />
<line x1="1660.0" y1="185.0" x2="1660.0" y2="495.0" stroke="#fadcdc" stroke-width="2.2" stroke-dasharray="10 6" stroke-opacity="0.15"/>
<line x1="1716.0" y1="185.0" x2="1716.0" y2="495.0" stroke="#fadcdc" stroke-width="2.2" stroke-dasharray="10 6" stroke-opacity="0.15"/>
<line x1="1772.0" y1="185.0" x2="1772.0" y2="495.0" stroke="#fadcdc" stroke-width="2.2" stroke-dasharray="10 6" stroke-opacity="0.15"/>
<line x1="1828.0" y1="185.0" x2="1828.0" y2="495.0" stroke="#fadcdc" stroke-width="2.2" stroke-dasharray="10 6" stroke-opacity="0.3"/>
<line x1="1886.0" y1="185.0" x2="1886.0" y2="495.0" stroke="#fadcdc" stroke-width="2.2" stroke-dasharray="10 6" stroke-opacity="0.15"/>
<line x1="1942.0" y1="185.0" x2="1942.0" y2="495.0" stroke="#fadcdc" stroke-width="2.2" stroke-dasharray="10 6" stroke-opacity="0.15"/>
<line x1="1998.0" y1="185.0" x2="1998.0" y2="495.0" stroke="#fadcdc" stroke-width="2.2" stroke-dasharray="10 6" stroke-opacity="0.15"/>
<line x1="2056.0" y1="185.0" x2="2056.0" y2="495.0" stroke="#fadcdc" stroke-width="2.2" stroke-dasharray="10 6" stroke-opacity="0.3"/>
<line x1="2112.0" y1="185.0" x2="2112.0" y2="495.0" stroke="#fadcdc" stroke-width="2.2" stroke-dasharray="10 6" stroke-opacity="0.15"/>
<line x1="2168.0" y1="185.0" x2="2168.0" y2="495.0" stroke="#fadcdc" stroke-width="2.2" stroke-dasharray="10 6" stroke-opacity="0.15"/>
<line x1="2224.0" y1="185.0" x2="2224.0" y2="495.0" stroke="#fadcdc" stroke-width="2.2" stroke-dasharray="10 6" stroke-opacity="0.15"/>
<line x1="2282.0" y1="185.0" x2="2282.0" y2="495.0" stroke="#fadcdc" stroke-width="2.2" stroke-dasharray="10 6" stroke-opacity="0.3"/>
<line x1="2338.0" y1="185.0" x2="2338.0" y2="495.0" stroke="#fadcdc" stroke-width="2.2" stroke-dasharray="10 6" stroke-opacity="0.15"/>
<line x1="2394.0" y1="185.0" x2="2394.0" y2="495.0" stroke="#fadcdc" stroke-width="2.2" stroke-dasharray="10 6" stroke-opacity="0.15"/>
<line x1="2452.0" y1="185.0" x2="2452.0" y2="495.0" stroke="#fadcdc" stroke-width="2.2" stroke-dasharray="10 6" stroke-opacity="0.15"/>
<line x1="2508.0" y1="185.0" x2="2508.0" y2="495.0" stroke="#fadcdc" stroke-width="2.2" stroke-dasharray="10 6" stroke-opacity="0.3"/>
<line x1="2564.0" y1="185.0" x2="2564.0" y2="495.0" stroke="#fadcdc" stroke-width="2.2" stroke-dasharray="10 6" stroke-opacity="0.15"/>
<line x1="2620.0" y1="185.0" x2="2620.0" y2="495.0" stroke="#fadcdc" stroke-width="2.2" stroke-dasharray="10 6" stroke-opacity="0.15"/>
<line x1="2678.0" y1="185.0" x2="2678.0" y2="495.0" stroke="#fadcdc" stroke-width="2.2" stroke-dasharray="10 6" stroke-opacity="0.15"/>
<rect x="1602.4" y="333.0" width="1131.6" height="64.0" fill="#f5b9b8" />
<line x1="1602.4" y1="397.2" x2="2734.0" y2="397.2" stroke="#33303a" stroke-width="2.2" />
</g>
<rect x="1602.4" y="333" width="1131.6" height="162" rx="9" fill="none" stroke="#2a2e3b" stroke-width="2.2"/>
<text x="1609.6" y="375.0" font-size="25" fill="#1a1b26" textLength="330.6" lengthAdjust="spacingAndGlyphs" >I don't want to leave you now</text>
<line x1="1829.2" y1="456.5" x2="1885.0" y2="456.5" stroke="#1c1d27" stroke-width="2.2" />
<line x1="1886.0" y1="446.6" x2="1941.8" y2="446.6" stroke="#1c1d27" stroke-width="2.2" />
<line x1="1942.3" y1="422.7" x2="1998.6" y2="422.7" stroke="#1c1d27" stroke-width="2.2" />
<line x1="1998.6" y1="415.2" x2="2069.4" y2="415.2" stroke="#1c1d27" stroke-width="2.2" />
<line x1="2069.4" y1="408.7" x2="2083.3" y2="408.7" stroke="#1c1d27" stroke-width="2.2" />
<line x1="2083.3" y1="415.2" x2="2111.7" y2="415.2" stroke="#1c1d27" stroke-width="2.2" />
<line x1="2111.7" y1="422.7" x2="2154.0" y2="422.7" stroke="#1c1d27" stroke-width="2.2" />
<line x1="2168.0" y1="422.7" x2="2196.4" y2="422.7" stroke="#1c1d27" stroke-width="2.2" />
<line x1="2196.4" y1="433.1" x2="2238.8" y2="433.1" stroke="#1c1d27" stroke-width="2.2" />
<clipPath id="cc3"><rect x="583.8" y="509" width="284.0" height="162" rx="9"/></clipPath>
<g clip-path="url(#cc3)">
<rect x="583.8" y="573.0" width="284.0" height="98.0" fill="#8b4518" />
<line x1="640.0" y1="185.0" x2="640.0" y2="671.0" stroke="#f6b696" stroke-width="2.2" stroke-dasharray="10 6" stroke-opacity="0.15"/>
<line x1="698.0" y1="185.0" x2="698.0" y2="671.0" stroke="#f6b696" stroke-width="2.2" stroke-dasharray="10 6" stroke-opacity="0.3"/>
<line x1="754.0" y1="185.0" x2="754.0" y2="671.0" stroke="#f6b696" stroke-width="2.2" stroke-dasharray="10 6" stroke-opacity="0.15"/>
<line x1="810.0" y1="185.0" x2="810.0" y2="671.0" stroke="#f6b696" stroke-width="2.2" stroke-dasharray="10 6" stroke-opacity="0.15"/>
<rect x="583.8" y="509.0" width="284.0" height="64.0" fill="#ed6c2d" />
<line x1="583.8" y1="573.2" x2="867.8" y2="573.2" stroke="#33303a" stroke-width="2.2" />
</g>
<rect x="583.8" y="509" width="284.0" height="162" rx="9" fill="none" stroke="#2a2e3b" stroke-width="2.2"/>
<text x="592.6" y="551.0" font-size="25" fill="#1a1b26" textLength="27.2" lengthAdjust="spacingAndGlyphs" >oh</text>
<line x1="669.1" y1="636.3" x2="676.0" y2="636.3" stroke="#1c1d27" stroke-width="2.2" />
<line x1="676.0" y1="633.0" x2="683.0" y2="633.0" stroke="#1c1d27" stroke-width="2.2" />
<line x1="683.0" y1="631.3" x2="782.0" y2="631.3" stroke="#1c1d27" stroke-width="2.2" />
<clipPath id="cc4"><rect x="1602.4" y="509" width="1131.5" height="162" rx="9"/></clipPath>
<g clip-path="url(#cc4)">
<rect x="1602.4" y="573.0" width="1131.5" height="98.0" fill="#8b4518" />
<line x1="1660.0" y1="185.0" x2="1660.0" y2="671.0" stroke="#f6b696" stroke-width="2.2" stroke-dasharray="10 6" stroke-opacity="0.15"/>
<line x1="1716.0" y1="185.0" x2="1716.0" y2="671.0" stroke="#f6b696" stroke-width="2.2" stroke-dasharray="10 6" stroke-opacity="0.15"/>
<line x1="1772.0" y1="185.0" x2="1772.0" y2="671.0" stroke="#f6b696" stroke-width="2.2" stroke-dasharray="10 6" stroke-opacity="0.15"/>
<line x1="1828.0" y1="185.0" x2="1828.0" y2="671.0" stroke="#f6b696" stroke-width="2.2" stroke-dasharray="10 6" stroke-opacity="0.3"/>
<line x1="1886.0" y1="185.0" x2="1886.0" y2="671.0" stroke="#f6b696" stroke-width="2.2" stroke-dasharray="10 6" stroke-opacity="0.15"/>
<line x1="1942.0" y1="185.0" x2="1942.0" y2="671.0" stroke="#f6b696" stroke-width="2.2" stroke-dasharray="10 6" stroke-opacity="0.15"/>
<line x1="1998.0" y1="185.0" x2="1998.0" y2="671.0" stroke="#f6b696" stroke-width="2.2" stroke-dasharray="10 6" stroke-opacity="0.15"/>
<line x1="2056.0" y1="185.0" x2="2056.0" y2="671.0" stroke="#f6b696" stroke-width="2.2" stroke-dasharray="10 6" stroke-opacity="0.3"/>
<line x1="2112.0" y1="185.0" x2="2112.0" y2="671.0" stroke="#f6b696" stroke-width="2.2" stroke-dasharray="10 6" stroke-opacity="0.15"/>
<line x1="2168.0" y1="185.0" x2="2168.0" y2="671.0" stroke="#f6b696" stroke-width="2.2" stroke-dasharray="10 6" stroke-opacity="0.15"/>
<line x1="2224.0" y1="185.0" x2="2224.0" y2="671.0" stroke="#f6b696" stroke-width="2.2" stroke-dasharray="10 6" stroke-opacity="0.15"/>
<line x1="2282.0" y1="185.0" x2="2282.0" y2="671.0" stroke="#f6b696" stroke-width="2.2" stroke-dasharray="10 6" stroke-opacity="0.3"/>
<line x1="2338.0" y1="185.0" x2="2338.0" y2="671.0" stroke="#f6b696" stroke-width="2.2" stroke-dasharray="10 6" stroke-opacity="0.15"/>
<line x1="2394.0" y1="185.0" x2="2394.0" y2="671.0" stroke="#f6b696" stroke-width="2.2" stroke-dasharray="10 6" stroke-opacity="0.15"/>
<line x1="2452.0" y1="185.0" x2="2452.0" y2="671.0" stroke="#f6b696" stroke-width="2.2" stroke-dasharray="10 6" stroke-opacity="0.15"/>
<line x1="2508.0" y1="185.0" x2="2508.0" y2="671.0" stroke="#f6b696" stroke-width="2.2" stroke-dasharray="10 6" stroke-opacity="0.3"/>
<line x1="2564.0" y1="185.0" x2="2564.0" y2="671.0" stroke="#f6b696" stroke-width="2.2" stroke-dasharray="10 6" stroke-opacity="0.15"/>
<line x1="2620.0" y1="185.0" x2="2620.0" y2="671.0" stroke="#f6b696" stroke-width="2.2" stroke-dasharray="10 6" stroke-opacity="0.15"/>
<line x1="2678.0" y1="185.0" x2="2678.0" y2="671.0" stroke="#f6b696" stroke-width="2.2" stroke-dasharray="10 6" stroke-opacity="0.15"/>
<rect x="1602.4" y="509.0" width="1131.5" height="64.0" fill="#ed6c2d" />
<line x1="1602.4" y1="573.2" x2="2733.9" y2="573.2" stroke="#33303a" stroke-width="2.2" />
</g>
<rect x="1602.4" y="509" width="1131.5" height="162" rx="9" fill="none" stroke="#2a2e3b" stroke-width="2.2"/>
<text x="1609.6" y="551.0" font-size="25" fill="#1a1b26" textLength="330.6" lengthAdjust="spacingAndGlyphs" >I don't want to leave you now</text>
<line x1="1829.2" y1="643.9" x2="1885.0" y2="643.9" stroke="#1c1d27" stroke-width="2.2" />
<line x1="1886.0" y1="636.4" x2="1941.8" y2="636.4" stroke="#1c1d27" stroke-width="2.2" />
<line x1="1942.3" y1="619.0" x2="1998.6" y2="619.0" stroke="#1c1d27" stroke-width="2.2" />
<line x1="1998.6" y1="614.0" x2="2069.4" y2="614.0" stroke="#1c1d27" stroke-width="2.2" />
<line x1="2069.4" y1="609.0" x2="2083.3" y2="609.0" stroke="#1c1d27" stroke-width="2.2" />
<line x1="2083.3" y1="614.0" x2="2111.7" y2="614.0" stroke="#1c1d27" stroke-width="2.2" />
<line x1="2111.7" y1="619.0" x2="2154.0" y2="619.0" stroke="#1c1d27" stroke-width="2.2" />
<line x1="2168.0" y1="619.0" x2="2196.4" y2="619.0" stroke="#1c1d27" stroke-width="2.2" />
<line x1="2196.4" y1="626.5" x2="2238.8" y2="626.5" stroke="#1c1d27" stroke-width="2.2" />
<clipPath id="cc5"><rect x="2734.3" y="509" width="621.2" height="162" rx="9"/></clipPath>
<g clip-path="url(#cc5)">
<rect x="2734.3" y="573.0" width="621.2" height="98.0" fill="#8b4518" />
<line x1="2790.0" y1="185.0" x2="2790.0" y2="671.0" stroke="#f6b696" stroke-width="2.2" stroke-dasharray="10 6" stroke-opacity="0.15"/>
<line x1="2848.0" y1="185.0" x2="2848.0" y2="671.0" stroke="#f6b696" stroke-width="2.2" stroke-dasharray="10 6" stroke-opacity="0.15"/>
<line x1="2904.0" y1="185.0" x2="2904.0" y2="671.0" stroke="#f6b696" stroke-width="2.2" stroke-dasharray="10 6" stroke-opacity="0.15"/>
<line x1="2960.0" y1="185.0" x2="2960.0" y2="671.0" stroke="#f6b696" stroke-width="2.2" stroke-dasharray="10 6" stroke-opacity="0.3"/>
<line x1="3016.0" y1="185.0" x2="3016.0" y2="671.0" stroke="#f6b696" stroke-width="2.2" stroke-dasharray="10 6" stroke-opacity="0.15"/>
<line x1="3074.0" y1="185.0" x2="3074.0" y2="671.0" stroke="#f6b696" stroke-width="2.2" stroke-dasharray="10 6" stroke-opacity="0.15"/>
<line x1="3130.0" y1="185.0" x2="3130.0" y2="671.0" stroke="#f6b696" stroke-width="2.2" stroke-dasharray="10 6" stroke-opacity="0.15"/>
<line x1="3186.0" y1="185.0" x2="3186.0" y2="671.0" stroke="#f6b696" stroke-width="2.2" stroke-dasharray="10 6" stroke-opacity="0.3"/>
<line x1="3244.0" y1="185.0" x2="3244.0" y2="671.0" stroke="#f6b696" stroke-width="2.2" stroke-dasharray="10 6" stroke-opacity="0.15"/>
<line x1="3300.0" y1="185.0" x2="3300.0" y2="671.0" stroke="#f6b696" stroke-width="2.2" stroke-dasharray="10 6" stroke-opacity="0.15"/>
<rect x="2734.3" y="509.0" width="621.2" height="64.0" fill="#ed6c2d" />
<line x1="2734.3" y1="573.2" x2="3355.5" y2="573.2" stroke="#33303a" stroke-width="2.2" />
</g>
<rect x="2734.3" y="509" width="621.2" height="162" rx="9" fill="none" stroke="#2a2e3b" stroke-width="2.2"/>
<text x="2743.1" y="551.0" font-size="25" fill="#1a1b26" textLength="272.7" lengthAdjust="spacingAndGlyphs" >da da da da da da da da</text>
<line x1="2735.0" y1="604.3" x2="2759.5" y2="604.3" stroke="#1c1d27" stroke-width="2.2" />
<line x1="2871.0" y1="616.5" x2="2944.6" y2="616.5" stroke="#1c1d27" stroke-width="2.2" />
<line x1="2974.0" y1="614.2" x2="2995.9" y2="614.2" stroke="#1c1d27" stroke-width="2.2" />
<line x1="3004.3" y1="621.5" x2="3048.6" y2="621.5" stroke="#1c1d27" stroke-width="2.2" />
<line x1="3243.3" y1="574.3" x2="3258.6" y2="574.3" stroke="#1c1d27" stroke-width="2.2" />
<clipPath id="cc6"><rect x="442.2" y="685" width="595.6" height="162" rx="9"/></clipPath>
<g clip-path="url(#cc6)">
<rect x="442.2" y="749.0" width="595.6" height="98.0" fill="#8d5b37" />
<line x1="472.0" y1="185.0" x2="472.0" y2="847.0" stroke="#f8cca6" stroke-width="2.2" stroke-dasharray="10 6" stroke-opacity="0.3"/>
<line x1="528.0" y1="185.0" x2="528.0" y2="847.0" stroke="#f8cca6" stroke-width="2.2" stroke-dasharray="10 6" stroke-opacity="0.15"/>
<line x1="584.0" y1="185.0" x2="584.0" y2="847.0" stroke="#f8cca6" stroke-width="2.2" stroke-dasharray="10 6" stroke-opacity="0.15"/>
<line x1="640.0" y1="185.0" x2="640.0" y2="847.0" stroke="#f8cca6" stroke-width="2.2" stroke-dasharray="10 6" stroke-opacity="0.15"/>
<line x1="698.0" y1="185.0" x2="698.0" y2="847.0" stroke="#f8cca6" stroke-width="2.2" stroke-dasharray="10 6" stroke-opacity="0.3"/>
<line x1="754.0" y1="185.0" x2="754.0" y2="847.0" stroke="#f8cca6" stroke-width="2.2" stroke-dasharray="10 6" stroke-opacity="0.15"/>
<line x1="810.0" y1="185.0" x2="810.0" y2="847.0" stroke="#f8cca6" stroke-width="2.2" stroke-dasharray="10 6" stroke-opacity="0.15"/>
<line x1="868.0" y1="185.0" x2="868.0" y2="847.0" stroke="#f8cca6" stroke-width="2.2" stroke-dasharray="10 6" stroke-opacity="0.15"/>
<line x1="924.0" y1="185.0" x2="924.0" y2="847.0" stroke="#f8cca6" stroke-width="2.2" stroke-dasharray="10 6" stroke-opacity="0.3"/>
<line x1="980.0" y1="185.0" x2="980.0" y2="847.0" stroke="#f8cca6" stroke-width="2.2" stroke-dasharray="10 6" stroke-opacity="0.15"/>
<rect x="442.2" y="685.0" width="595.6" height="64.0" fill="#f19a4e" />
<line x1="442.2" y1="749.2" x2="1037.8" y2="749.2" stroke="#33303a" stroke-width="2.2" />
</g>
<rect x="442.2" y="685" width="595.6" height="162" rx="9" fill="none" stroke="#2a2e3b" stroke-width="2.2"/>
<text x="451.0" y="727.0" font-size="25" fill="#1a1b26" textLength="486.4" lengthAdjust="spacingAndGlyphs" >woo i know you feel it woo yeah i know you</text>
<line x1="471.2" y1="805.0" x2="499.3" y2="805.0" stroke="#1c1d27" stroke-width="2.2" />
<line x1="499.3" y1="797.3" x2="654.9" y2="797.3" stroke="#1c1d27" stroke-width="2.2" />
<line x1="669.1" y1="826.0" x2="676.0" y2="826.0" stroke="#1c1d27" stroke-width="2.2" />
<line x1="676.0" y1="818.4" x2="683.0" y2="818.4" stroke="#1c1d27" stroke-width="2.2" />
<line x1="683.0" y1="815.7" x2="782.0" y2="815.7" stroke="#1c1d27" stroke-width="2.2" />
<line x1="782.0" y1="792.4" x2="867.3" y2="792.4" stroke="#1c1d27" stroke-width="2.2" />
<line x1="867.3" y1="779.4" x2="895.6" y2="779.4" stroke="#1c1d27" stroke-width="2.2" />
<line x1="895.6" y1="792.4" x2="938.0" y2="792.4" stroke="#1c1d27" stroke-width="2.2" />
<clipPath id="cc7"><rect x="1602.4" y="685" width="1131.5" height="162" rx="9"/></clipPath>
<g clip-path="url(#cc7)">
<rect x="1602.4" y="749.0" width="1131.5" height="98.0" fill="#8d5b37" />
<line x1="1660.0" y1="185.0" x2="1660.0" y2="847.0" stroke="#f8cca6" stroke-width="2.2" stroke-dasharray="10 6" stroke-opacity="0.15"/>
<line x1="1716.0" y1="185.0" x2="1716.0" y2="847.0" stroke="#f8cca6" stroke-width="2.2" stroke-dasharray="10 6" stroke-opacity="0.15"/>
<line x1="1772.0" y1="185.0" x2="1772.0" y2="847.0" stroke="#f8cca6" stroke-width="2.2" stroke-dasharray="10 6" stroke-opacity="0.15"/>
<line x1="1828.0" y1="185.0" x2="1828.0" y2="847.0" stroke="#f8cca6" stroke-width="2.2" stroke-dasharray="10 6" stroke-opacity="0.3"/>
<line x1="1886.0" y1="185.0" x2="1886.0" y2="847.0" stroke="#f8cca6" stroke-width="2.2" stroke-dasharray="10 6" stroke-opacity="0.15"/>
<line x1="1942.0" y1="185.0" x2="1942.0" y2="847.0" stroke="#f8cca6" stroke-width="2.2" stroke-dasharray="10 6" stroke-opacity="0.15"/>
<line x1="1998.0" y1="185.0" x2="1998.0" y2="847.0" stroke="#f8cca6" stroke-width="2.2" stroke-dasharray="10 6" stroke-opacity="0.15"/>
<line x1="2056.0" y1="185.0" x2="2056.0" y2="847.0" stroke="#f8cca6" stroke-width="2.2" stroke-dasharray="10 6" stroke-opacity="0.3"/>
<line x1="2112.0" y1="185.0" x2="2112.0" y2="847.0" stroke="#f8cca6" stroke-width="2.2" stroke-dasharray="10 6" stroke-opacity="0.15"/>
<line x1="2168.0" y1="185.0" x2="2168.0" y2="847.0" stroke="#f8cca6" stroke-width="2.2" stroke-dasharray="10 6" stroke-opacity="0.15"/>
<line x1="2224.0" y1="185.0" x2="2224.0" y2="847.0" stroke="#f8cca6" stroke-width="2.2" stroke-dasharray="10 6" stroke-opacity="0.15"/>
<line x1="2282.0" y1="185.0" x2="2282.0" y2="847.0" stroke="#f8cca6" stroke-width="2.2" stroke-dasharray="10 6" stroke-opacity="0.3"/>
<line x1="2338.0" y1="185.0" x2="2338.0" y2="847.0" stroke="#f8cca6" stroke-width="2.2" stroke-dasharray="10 6" stroke-opacity="0.15"/>
<line x1="2394.0" y1="185.0" x2="2394.0" y2="847.0" stroke="#f8cca6" stroke-width="2.2" stroke-dasharray="10 6" stroke-opacity="0.15"/>
<line x1="2452.0" y1="185.0" x2="2452.0" y2="847.0" stroke="#f8cca6" stroke-width="2.2" stroke-dasharray="10 6" stroke-opacity="0.15"/>
<line x1="2508.0" y1="185.0" x2="2508.0" y2="847.0" stroke="#f8cca6" stroke-width="2.2" stroke-dasharray="10 6" stroke-opacity="0.3"/>
<line x1="2564.0" y1="185.0" x2="2564.0" y2="847.0" stroke="#f8cca6" stroke-width="2.2" stroke-dasharray="10 6" stroke-opacity="0.15"/>
<line x1="2620.0" y1="185.0" x2="2620.0" y2="847.0" stroke="#f8cca6" stroke-width="2.2" stroke-dasharray="10 6" stroke-opacity="0.15"/>
<line x1="2678.0" y1="185.0" x2="2678.0" y2="847.0" stroke="#f8cca6" stroke-width="2.2" stroke-dasharray="10 6" stroke-opacity="0.15"/>
<rect x="1602.4" y="685.0" width="1131.5" height="64.0" fill="#f19a4e" />
<line x1="1602.4" y1="749.2" x2="2733.9" y2="749.2" stroke="#33303a" stroke-width="2.2" />
</g>
<rect x="1602.4" y="685" width="1131.5" height="162" rx="9" fill="none" stroke="#2a2e3b" stroke-width="2.2"/>
<text x="1609.6" y="727.0" font-size="25" fill="#1a1b26" textLength="330.6" lengthAdjust="spacingAndGlyphs" >I don't want to leave you now</text>
<line x1="1829.2" y1="818.0" x2="1885.0" y2="818.0" stroke="#1c1d27" stroke-width="2.2" />
<line x1="1886.0" y1="810.5" x2="1941.8" y2="810.5" stroke="#1c1d27" stroke-width="2.2" />
<line x1="1942.3" y1="792.1" x2="1998.6" y2="792.1" stroke="#1c1d27" stroke-width="2.2" />
<line x1="1998.6" y1="786.6" x2="2069.4" y2="786.6" stroke="#1c1d27" stroke-width="2.2" />
<line x1="2069.4" y1="781.6" x2="2083.3" y2="781.6" stroke="#1c1d27" stroke-width="2.2" />
<line x1="2083.3" y1="786.6" x2="2111.7" y2="786.6" stroke="#1c1d27" stroke-width="2.2" />
<line x1="2111.7" y1="792.1" x2="2154.0" y2="792.1" stroke="#1c1d27" stroke-width="2.2" />
<line x1="2168.0" y1="792.1" x2="2196.4" y2="792.1" stroke="#1c1d27" stroke-width="2.2" />
<line x1="2196.4" y1="800.0" x2="2238.8" y2="800.0" stroke="#1c1d27" stroke-width="2.2" />
<clipPath id="cc8"><rect x="2734.3" y="685" width="621.2" height="162" rx="9"/></clipPath>
<g clip-path="url(#cc8)">
<rect x="2734.3" y="749.0" width="621.2" height="98.0" fill="#8d5b37" />
<line x1="2790.0" y1="185.0" x2="2790.0" y2="847.0" stroke="#f8cca6" stroke-width="2.2" stroke-dasharray="10 6" stroke-opacity="0.15"/>
<line x1="2848.0" y1="185.0" x2="2848.0" y2="847.0" stroke="#f8cca6" stroke-width="2.2" stroke-dasharray="10 6" stroke-opacity="0.15"/>
<line x1="2904.0" y1="185.0" x2="2904.0" y2="847.0" stroke="#f8cca6" stroke-width="2.2" stroke-dasharray="10 6" stroke-opacity="0.15"/>
<line x1="2960.0" y1="185.0" x2="2960.0" y2="847.0" stroke="#f8cca6" stroke-width="2.2" stroke-dasharray="10 6" stroke-opacity="0.3"/>
<line x1="3016.0" y1="185.0" x2="3016.0" y2="847.0" stroke="#f8cca6" stroke-width="2.2" stroke-dasharray="10 6" stroke-opacity="0.15"/>
<line x1="3074.0" y1="185.0" x2="3074.0" y2="847.0" stroke="#f8cca6" stroke-width="2.2" stroke-dasharray="10 6" stroke-opacity="0.15"/>
<line x1="3130.0" y1="185.0" x2="3130.0" y2="847.0" stroke="#f8cca6" stroke-width="2.2" stroke-dasharray="10 6" stroke-opacity="0.15"/>
<line x1="3186.0" y1="185.0" x2="3186.0" y2="847.0" stroke="#f8cca6" stroke-width="2.2" stroke-dasharray="10 6" stroke-opacity="0.3"/>
<line x1="3244.0" y1="185.0" x2="3244.0" y2="847.0" stroke="#f8cca6" stroke-width="2.2" stroke-dasharray="10 6" stroke-opacity="0.15"/>
<line x1="3300.0" y1="185.0" x2="3300.0" y2="847.0" stroke="#f8cca6" stroke-width="2.2" stroke-dasharray="10 6" stroke-opacity="0.15"/>
<rect x="2734.3" y="685.0" width="621.2" height="64.0" fill="#f19a4e" />
<line x1="2734.3" y1="749.2" x2="3355.5" y2="749.2" stroke="#33303a" stroke-width="2.2" />
</g>
<rect x="2734.3" y="685" width="621.2" height="162" rx="9" fill="none" stroke="#2a2e3b" stroke-width="2.2"/>
<text x="2743.1" y="727.0" font-size="25" fill="#1a1b26" textLength="272.7" lengthAdjust="spacingAndGlyphs" >da da da da da da da da</text>
<line x1="2755.7" y1="786.7" x2="2811.9" y2="786.7" stroke="#1c1d27" stroke-width="2.2" />
<line x1="2839.8" y1="781.7" x2="2869.7" y2="781.7" stroke="#1c1d27" stroke-width="2.2" />
<line x1="2871.2" y1="799.7" x2="2989.4" y2="799.7" stroke="#1c1d27" stroke-width="2.2" />
<line x1="3003.1" y1="799.7" x2="3053.6" y2="799.7" stroke="#1c1d27" stroke-width="2.2" />
<line x1="3195.1" y1="750.5" x2="3211.5" y2="750.5" stroke="#1c1d27" stroke-width="2.2" />
<rect x="1603.5" y="750.2" width="15.5" height="15.5" fill="#f19a4e" stroke="#0c0c0e" stroke-width="2.2"/>
<rect x="2717.8" y="750.2" width="15.5" height="15.5" fill="#f19a4e" stroke="#0c0c0e" stroke-width="2.2"/>
<clipPath id="cc9"><rect x="442.2" y="861" width="595.6" height="162" rx="9"/></clipPath>
<g clip-path="url(#cc9)">
<rect x="442.2" y="925.0" width="595.6" height="98.0" fill="#917f28" />
<line x1="472.0" y1="185.0" x2="472.0" y2="1023.0" stroke="#fae9a2" stroke-width="2.2" stroke-dasharray="10 6" stroke-opacity="0.3"/>
<line x1="528.0" y1="185.0" x2="528.0" y2="1023.0" stroke="#fae9a2" stroke-width="2.2" stroke-dasharray="10 6" stroke-opacity="0.15"/>
<line x1="584.0" y1="185.0" x2="584.0" y2="1023.0" stroke="#fae9a2" stroke-width="2.2" stroke-dasharray="10 6" stroke-opacity="0.15"/>
<line x1="640.0" y1="185.0" x2="640.0" y2="1023.0" stroke="#fae9a2" stroke-width="2.2" stroke-dasharray="10 6" stroke-opacity="0.15"/>
<line x1="698.0" y1="185.0" x2="698.0" y2="1023.0" stroke="#fae9a2" stroke-width="2.2" stroke-dasharray="10 6" stroke-opacity="0.3"/>
<line x1="754.0" y1="185.0" x2="754.0" y2="1023.0" stroke="#fae9a2" stroke-width="2.2" stroke-dasharray="10 6" stroke-opacity="0.15"/>
<line x1="810.0" y1="185.0" x2="810.0" y2="1023.0" stroke="#fae9a2" stroke-width="2.2" stroke-dasharray="10 6" stroke-opacity="0.15"/>
<line x1="868.0" y1="185.0" x2="868.0" y2="1023.0" stroke="#fae9a2" stroke-width="2.2" stroke-dasharray="10 6" stroke-opacity="0.15"/>
<line x1="924.0" y1="185.0" x2="924.0" y2="1023.0" stroke="#fae9a2" stroke-width="2.2" stroke-dasharray="10 6" stroke-opacity="0.3"/>
<line x1="980.0" y1="185.0" x2="980.0" y2="1023.0" stroke="#fae9a2" stroke-width="2.2" stroke-dasharray="10 6" stroke-opacity="0.15"/>
<rect x="442.2" y="861.0" width="595.6" height="64.0" fill="#f6d346" />
<line x1="442.2" y1="925.2" x2="1037.8" y2="925.2" stroke="#33303a" stroke-width="2.2" />
</g>
<rect x="442.2" y="861" width="595.6" height="162" rx="9" fill="none" stroke="#2a2e3b" stroke-width="2.2"/>
<text x="451.0" y="903.0" font-size="25" fill="#1a1b26" textLength="486.4" lengthAdjust="spacingAndGlyphs" >woo i know you feel it woo yeah i know you</text>
<line x1="471.2" y1="976.7" x2="499.3" y2="976.7" stroke="#1c1d27" stroke-width="2.2" />
<line x1="499.3" y1="970.6" x2="654.9" y2="970.6" stroke="#1c1d27" stroke-width="2.2" />
<line x1="669.1" y1="981.7" x2="676.0" y2="981.7" stroke="#1c1d27" stroke-width="2.2" />
<line x1="676.0" y1="979.0" x2="683.0" y2="979.0" stroke="#1c1d27" stroke-width="2.2" />
<line x1="683.0" y1="976.7" x2="782.0" y2="976.7" stroke="#1c1d27" stroke-width="2.2" />
<line x1="782.0" y1="970.6" x2="867.3" y2="970.6" stroke="#1c1d27" stroke-width="2.2" />
<line x1="867.3" y1="965.6" x2="895.6" y2="965.6" stroke="#1c1d27" stroke-width="2.2" />
<line x1="895.6" y1="970.6" x2="938.0" y2="970.6" stroke="#1c1d27" stroke-width="2.2" />
<clipPath id="cc10"><rect x="1602.4" y="861" width="1131.5" height="162" rx="9"/></clipPath>
<g clip-path="url(#cc10)">
<rect x="1602.4" y="925.0" width="1131.5" height="98.0" fill="#917f28" />
<line x1="1660.0" y1="185.0" x2="1660.0" y2="1023.0" stroke="#fae9a2" stroke-width="2.2" stroke-dasharray="10 6" stroke-opacity="0.15"/>
<line x1="1716.0" y1="185.0" x2="1716.0" y2="1023.0" stroke="#fae9a2" stroke-width="2.2" stroke-dasharray="10 6" stroke-opacity="0.15"/>
<line x1="1772.0" y1="185.0" x2="1772.0" y2="1023.0" stroke="#fae9a2" stroke-width="2.2" stroke-dasharray="10 6" stroke-opacity="0.15"/>
<line x1="1828.0" y1="185.0" x2="1828.0" y2="1023.0" stroke="#fae9a2" stroke-width="2.2" stroke-dasharray="10 6" stroke-opacity="0.3"/>
<line x1="1886.0" y1="185.0" x2="1886.0" y2="1023.0" stroke="#fae9a2" stroke-width="2.2" stroke-dasharray="10 6" stroke-opacity="0.15"/>
<line x1="1942.0" y1="185.0" x2="1942.0" y2="1023.0" stroke="#fae9a2" stroke-width="2.2" stroke-dasharray="10 6" stroke-opacity="0.15"/>
<line x1="1998.0" y1="185.0" x2="1998.0" y2="1023.0" stroke="#fae9a2" stroke-width="2.2" stroke-dasharray="10 6" stroke-opacity="0.15"/>
<line x1="2056.0" y1="185.0" x2="2056.0" y2="1023.0" stroke="#fae9a2" stroke-width="2.2" stroke-dasharray="10 6" stroke-opacity="0.3"/>
<line x1="2112.0" y1="185.0" x2="2112.0" y2="1023.0" stroke="#fae9a2" stroke-width="2.2" stroke-dasharray="10 6" stroke-opacity="0.15"/>
<line x1="2168.0" y1="185.0" x2="2168.0" y2="1023.0" stroke="#fae9a2" stroke-width="2.2" stroke-dasharray="10 6" stroke-opacity="0.15"/>
<line x1="2224.0" y1="185.0" x2="2224.0" y2="1023.0" stroke="#fae9a2" stroke-width="2.2" stroke-dasharray="10 6" stroke-opacity="0.15"/>
<line x1="2282.0" y1="185.0" x2="2282.0" y2="1023.0" stroke="#fae9a2" stroke-width="2.2" stroke-dasharray="10 6" stroke-opacity="0.3"/>
<line x1="2338.0" y1="185.0" x2="2338.0" y2="1023.0" stroke="#fae9a2" stroke-width="2.2" stroke-dasharray="10 6" stroke-opacity="0.15"/>
<line x1="2394.0" y1="185.0" x2="2394.0" y2="1023.0" stroke="#fae9a2" stroke-width="2.2" stroke-dasharray="10 6" stroke-opacity="0.15"/>
<line x1="2452.0" y1="185.0" x2="2452.0" y2="1023.0" stroke="#fae9a2" stroke-width="2.2" stroke-dasharray="10 6" stroke-opacity="0.15"/>
<line x1="2508.0" y1="185.0" x2="2508.0" y2="1023.0" stroke="#fae9a2" stroke-width="2.2" stroke-dasharray="10 6" stroke-opacity="0.3"/>
<line x1="2564.0" y1="185.0" x2="2564.0" y2="1023.0" stroke="#fae9a2" stroke-width="2.2" stroke-dasharray="10 6" stroke-opacity="0.15"/>
<line x1="2620.0" y1="185.0" x2="2620.0" y2="1023.0" stroke="#fae9a2" stroke-width="2.2" stroke-dasharray="10 6" stroke-opacity="0.15"/>
<line x1="2678.0" y1="185.0" x2="2678.0" y2="1023.0" stroke="#fae9a2" stroke-width="2.2" stroke-dasharray="10 6" stroke-opacity="0.15"/>
<rect x="1602.4" y="861.0" width="1131.5" height="64.0" fill="#f6d346" />
<line x1="1602.4" y1="925.2" x2="2733.9" y2="925.2" stroke="#33303a" stroke-width="2.2" />
</g>
<rect x="1602.4" y="861" width="1131.5" height="162" rx="9" fill="none" stroke="#2a2e3b" stroke-width="2.2"/>
<text x="1609.6" y="903.0" font-size="25" fill="#1a1b26" textLength="330.6" lengthAdjust="spacingAndGlyphs" >I don't want to leave you now</text>
<line x1="1829.2" y1="998.4" x2="1885.0" y2="998.4" stroke="#1c1d27" stroke-width="2.2" />
<line x1="1886.0" y1="992.4" x2="1941.8" y2="992.4" stroke="#1c1d27" stroke-width="2.2" />
<line x1="1942.3" y1="976.5" x2="1998.6" y2="976.5" stroke="#1c1d27" stroke-width="2.2" />
<line x1="1998.6" y1="972.5" x2="2069.4" y2="972.5" stroke="#1c1d27" stroke-width="2.2" />
<line x1="2069.4" y1="968.0" x2="2083.3" y2="968.0" stroke="#1c1d27" stroke-width="2.2" />
<line x1="2083.3" y1="972.5" x2="2111.7" y2="972.5" stroke="#1c1d27" stroke-width="2.2" />
<line x1="2111.7" y1="976.5" x2="2154.0" y2="976.5" stroke="#1c1d27" stroke-width="2.2" />
<line x1="2168.0" y1="976.5" x2="2196.4" y2="976.5" stroke="#1c1d27" stroke-width="2.2" />
<line x1="2196.4" y1="983.4" x2="2238.8" y2="983.4" stroke="#1c1d27" stroke-width="2.2" />
<clipPath id="cc11"><rect x="2734.3" y="861" width="621.2" height="162" rx="9"/></clipPath>
<g clip-path="url(#cc11)">
<rect x="2734.3" y="925.0" width="621.2" height="98.0" fill="#917f28" />
<line x1="2790.0" y1="185.0" x2="2790.0" y2="1023.0" stroke="#fae9a2" stroke-width="2.2" stroke-dasharray="10 6" stroke-opacity="0.15"/>
<line x1="2848.0" y1="185.0" x2="2848.0" y2="1023.0" stroke="#fae9a2" stroke-width="2.2" stroke-dasharray="10 6" stroke-opacity="0.15"/>
<line x1="2904.0" y1="185.0" x2="2904.0" y2="1023.0" stroke="#fae9a2" stroke-width="2.2" stroke-dasharray="10 6" stroke-opacity="0.15"/>
<line x1="2960.0" y1="185.0" x2="2960.0" y2="1023.0" stroke="#fae9a2" stroke-width="2.2" stroke-dasharray="10 6" stroke-opacity="0.3"/>
<line x1="3016.0" y1="185.0" x2="3016.0" y2="1023.0" stroke="#fae9a2" stroke-width="2.2" stroke-dasharray="10 6" stroke-opacity="0.15"/>
<line x1="3074.0" y1="185.0" x2="3074.0" y2="1023.0" stroke="#fae9a2" stroke-width="2.2" stroke-dasharray="10 6" stroke-opacity="0.15"/>
<line x1="3130.0" y1="185.0" x2="3130.0" y2="1023.0" stroke="#fae9a2" stroke-width="2.2" stroke-dasharray="10 6" stroke-opacity="0.15"/>
<line x1="3186.0" y1="185.0" x2="3186.0" y2="1023.0" stroke="#fae9a2" stroke-width="2.2" stroke-dasharray="10 6" stroke-opacity="0.3"/>
<line x1="3244.0" y1="185.0" x2="3244.0" y2="1023.0" stroke="#fae9a2" stroke-width="2.2" stroke-dasharray="10 6" stroke-opacity="0.15"/>
<line x1="3300.0" y1="185.0" x2="3300.0" y2="1023.0" stroke="#fae9a2" stroke-width="2.2" stroke-dasharray="10 6" stroke-opacity="0.15"/>
<rect x="2734.3" y="861.0" width="621.2" height="64.0" fill="#f6d346" />
<line x1="2734.3" y1="925.2" x2="3355.5" y2="925.2" stroke="#33303a" stroke-width="2.2" />
</g>
<rect x="2734.3" y="861" width="621.2" height="162" rx="9" fill="none" stroke="#2a2e3b" stroke-width="2.2"/>
<text x="2743.1" y="903.0" font-size="25" fill="#1a1b26" textLength="272.7" lengthAdjust="spacingAndGlyphs" >da da da da da da da da</text>
<line x1="2754.6" y1="952.7" x2="2806.6" y2="952.7" stroke="#1c1d27" stroke-width="2.2" />
<line x1="2824.2" y1="946.5" x2="2843.7" y2="946.5" stroke="#1c1d27" stroke-width="2.2" />
<line x1="3092.2" y1="931.2" x2="3105.2" y2="931.2" stroke="#1c1d27" stroke-width="2.2" />
<line x1="3140.8" y1="926.7" x2="3151.1" y2="926.7" stroke="#1c1d27" stroke-width="2.2" />
<line x1="3192.0" y1="942.0" x2="3208.9" y2="942.0" stroke="#1c1d27" stroke-width="2.2" />
<line x1="3236.4" y1="937.4" x2="3257.4" y2="937.4" stroke="#1c1d27" stroke-width="2.2" />
<clipPath id="cc12"><rect x="442.2" y="1037" width="595.6" height="162" rx="9"/></clipPath>
<g clip-path="url(#cc12)">
<rect x="442.2" y="1101.0" width="595.6" height="98.0" fill="#3a863c" />
<line x1="472.0" y1="185.0" x2="472.0" y2="1199.0" stroke="#b8f6ac" stroke-width="2.2" stroke-dasharray="10 6" stroke-opacity="0.3"/>
<line x1="528.0" y1="185.0" x2="528.0" y2="1199.0" stroke="#b8f6ac" stroke-width="2.2" stroke-dasharray="10 6" stroke-opacity="0.15"/>
<line x1="584.0" y1="185.0" x2="584.0" y2="1199.0" stroke="#b8f6ac" stroke-width="2.2" stroke-dasharray="10 6" stroke-opacity="0.15"/>
<line x1="640.0" y1="185.0" x2="640.0" y2="1199.0" stroke="#b8f6ac" stroke-width="2.2" stroke-dasharray="10 6" stroke-opacity="0.15"/>
<line x1="698.0" y1="185.0" x2="698.0" y2="1199.0" stroke="#b8f6ac" stroke-width="2.2" stroke-dasharray="10 6" stroke-opacity="0.3"/>
<line x1="754.0" y1="185.0" x2="754.0" y2="1199.0" stroke="#b8f6ac" stroke-width="2.2" stroke-dasharray="10 6" stroke-opacity="0.15"/>
<line x1="810.0" y1="185.0" x2="810.0" y2="1199.0" stroke="#b8f6ac" stroke-width="2.2" stroke-dasharray="10 6" stroke-opacity="0.15"/>
<line x1="868.0" y1="185.0" x2="868.0" y2="1199.0" stroke="#b8f6ac" stroke-width="2.2" stroke-dasharray="10 6" stroke-opacity="0.15"/>
<line x1="924.0" y1="185.0" x2="924.0" y2="1199.0" stroke="#b8f6ac" stroke-width="2.2" stroke-dasharray="10 6" stroke-opacity="0.3"/>
<line x1="980.0" y1="185.0" x2="980.0" y2="1199.0" stroke="#b8f6ac" stroke-width="2.2" stroke-dasharray="10 6" stroke-opacity="0.15"/>
<rect x="442.2" y="1037.0" width="595.6" height="64.0" fill="#70ec5a" />
<line x1="442.2" y1="1101.2" x2="1037.8" y2="1101.2" stroke="#33303a" stroke-width="2.2" />
</g>
<rect x="442.2" y="1037" width="595.6" height="162" rx="9" fill="none" stroke="#2a2e3b" stroke-width="2.2"/>
<text x="451.0" y="1079.0" font-size="25" fill="#1a1b26" textLength="486.4" lengthAdjust="spacingAndGlyphs" >woo i know you feel it woo yeah i know you</text>
<line x1="471.2" y1="1150.7" x2="499.3" y2="1150.7" stroke="#1c1d27" stroke-width="2.2" />
<line x1="499.3" y1="1141.9" x2="654.9" y2="1141.9" stroke="#1c1d27" stroke-width="2.2" />
<line x1="669.1" y1="1169.0" x2="676.0" y2="1169.0" stroke="#1c1d27" stroke-width="2.2" />
<line x1="676.0" y1="1159.9" x2="683.0" y2="1159.9" stroke="#1c1d27" stroke-width="2.2" />
<line x1="683.0" y1="1156.8" x2="782.0" y2="1156.8" stroke="#1c1d27" stroke-width="2.2" />
<line x1="782.0" y1="1114.7" x2="867.3" y2="1114.7" stroke="#1c1d27" stroke-width="2.2" />
<line x1="867.3" y1="1111.7" x2="895.6" y2="1111.7" stroke="#1c1d27" stroke-width="2.2" />
<line x1="895.6" y1="1114.7" x2="938.0" y2="1114.7" stroke="#1c1d27" stroke-width="2.2" />
<clipPath id="cc13"><rect x="1602.4" y="1037" width="1753.1" height="162" rx="9"/></clipPath>
<g clip-path="url(#cc13)">
<rect x="1602.4" y="1101.0" width="1753.1" height="98.0" fill="#3a863c" />
<line x1="1660.0" y1="185.0" x2="1660.0" y2="1199.0" stroke="#b8f6ac" stroke-width="2.2" stroke-dasharray="10 6" stroke-opacity="0.15"/>
<line x1="1716.0" y1="185.0" x2="1716.0" y2="1199.0" stroke="#b8f6ac" stroke-width="2.2" stroke-dasharray="10 6" stroke-opacity="0.15"/>
<line x1="1772.0" y1="185.0" x2="1772.0" y2="1199.0" stroke="#b8f6ac" stroke-width="2.2" stroke-dasharray="10 6" stroke-opacity="0.15"/>
<line x1="1828.0" y1="185.0" x2="1828.0" y2="1199.0" stroke="#b8f6ac" stroke-width="2.2" stroke-dasharray="10 6" stroke-opacity="0.3"/>
<line x1="1886.0" y1="185.0" x2="1886.0" y2="1199.0" stroke="#b8f6ac" stroke-width="2.2" stroke-dasharray="10 6" stroke-opacity="0.15"/>
<line x1="1942.0" y1="185.0" x2="1942.0" y2="1199.0" stroke="#b8f6ac" stroke-width="2.2" stroke-dasharray="10 6" stroke-opacity="0.15"/>
<line x1="1998.0" y1="185.0" x2="1998.0" y2="1199.0" stroke="#b8f6ac" stroke-width="2.2" stroke-dasharray="10 6" stroke-opacity="0.15"/>
<line x1="2056.0" y1="185.0" x2="2056.0" y2="1199.0" stroke="#b8f6ac" stroke-width="2.2" stroke-dasharray="10 6" stroke-opacity="0.3"/>
<line x1="2112.0" y1="185.0" x2="2112.0" y2="1199.0" stroke="#b8f6ac" stroke-width="2.2" stroke-dasharray="10 6" stroke-opacity="0.15"/>
<line x1="2168.0" y1="185.0" x2="2168.0" y2="1199.0" stroke="#b8f6ac" stroke-width="2.2" stroke-dasharray="10 6" stroke-opacity="0.15"/>
<line x1="2224.0" y1="185.0" x2="2224.0" y2="1199.0" stroke="#b8f6ac" stroke-width="2.2" stroke-dasharray="10 6" stroke-opacity="0.15"/>
<line x1="2282.0" y1="185.0" x2="2282.0" y2="1199.0" stroke="#b8f6ac" stroke-width="2.2" stroke-dasharray="10 6" stroke-opacity="0.3"/>
<line x1="2338.0" y1="185.0" x2="2338.0" y2="1199.0" stroke="#b8f6ac" stroke-width="2.2" stroke-dasharray="10 6" stroke-opacity="0.15"/>
<line x1="2394.0" y1="185.0" x2="2394.0" y2="1199.0" stroke="#b8f6ac" stroke-width="2.2" stroke-dasharray="10 6" stroke-opacity="0.15"/>
<line x1="2452.0" y1="185.0" x2="2452.0" y2="1199.0" stroke="#b8f6ac" stroke-width="2.2" stroke-dasharray="10 6" stroke-opacity="0.15"/>
<line x1="2508.0" y1="185.0" x2="2508.0" y2="1199.0" stroke="#b8f6ac" stroke-width="2.2" stroke-dasharray="10 6" stroke-opacity="0.3"/>
<line x1="2564.0" y1="185.0" x2="2564.0" y2="1199.0" stroke="#b8f6ac" stroke-width="2.2" stroke-dasharray="10 6" stroke-opacity="0.15"/>
<line x1="2620.0" y1="185.0" x2="2620.0" y2="1199.0" stroke="#b8f6ac" stroke-width="2.2" stroke-dasharray="10 6" stroke-opacity="0.15"/>
<line x1="2678.0" y1="185.0" x2="2678.0" y2="1199.0" stroke="#b8f6ac" stroke-width="2.2" stroke-dasharray="10 6" stroke-opacity="0.15"/>
<line x1="2734.0" y1="185.0" x2="2734.0" y2="1199.0" stroke="#b8f6ac" stroke-width="2.2" stroke-dasharray="10 6" stroke-opacity="0.3"/>
<line x1="2790.0" y1="185.0" x2="2790.0" y2="1199.0" stroke="#b8f6ac" stroke-width="2.2" stroke-dasharray="10 6" stroke-opacity="0.15"/>
<line x1="2848.0" y1="185.0" x2="2848.0" y2="1199.0" stroke="#b8f6ac" stroke-width="2.2" stroke-dasharray="10 6" stroke-opacity="0.15"/>
<line x1="2904.0" y1="185.0" x2="2904.0" y2="1199.0" stroke="#b8f6ac" stroke-width="2.2" stroke-dasharray="10 6" stroke-opacity="0.15"/>
<line x1="2960.0" y1="185.0" x2="2960.0" y2="1199.0" stroke="#b8f6ac" stroke-width="2.2" stroke-dasharray="10 6" stroke-opacity="0.3"/>
<line x1="3016.0" y1="185.0" x2="3016.0" y2="1199.0" stroke="#b8f6ac" stroke-width="2.2" stroke-dasharray="10 6" stroke-opacity="0.15"/>
<line x1="3074.0" y1="185.0" x2="3074.0" y2="1199.0" stroke="#b8f6ac" stroke-width="2.2" stroke-dasharray="10 6" stroke-opacity="0.15"/>
<line x1="3130.0" y1="185.0" x2="3130.0" y2="1199.0" stroke="#b8f6ac" stroke-width="2.2" stroke-dasharray="10 6" stroke-opacity="0.15"/>
<line x1="3186.0" y1="185.0" x2="3186.0" y2="1199.0" stroke="#b8f6ac" stroke-width="2.2" stroke-dasharray="10 6" stroke-opacity="0.3"/>
<line x1="3244.0" y1="185.0" x2="3244.0" y2="1199.0" stroke="#b8f6ac" stroke-width="2.2" stroke-dasharray="10 6" stroke-opacity="0.15"/>
<line x1="3300.0" y1="185.0" x2="3300.0" y2="1199.0" stroke="#b8f6ac" stroke-width="2.2" stroke-dasharray="10 6" stroke-opacity="0.15"/>
<rect x="1602.4" y="1037.0" width="1753.1" height="64.0" fill="#70ec5a" />
<line x1="1602.4" y1="1101.2" x2="3355.5" y2="1101.2" stroke="#33303a" stroke-width="2.2" />
</g>
<rect x="1602.4" y="1037" width="1753.1" height="162" rx="9" fill="none" stroke="#2a2e3b" stroke-width="2.2"/>
<text x="1611.2" y="1079.0" font-size="25" fill="#1a1b26" textLength="132.0" lengthAdjust="spacingAndGlyphs" >da da da da</text>
<line x1="2601.3" y1="1102.3" x2="2752.3" y2="1102.3" stroke="#1c1d27" stroke-width="2.6" />
<line x1="2823.2" y1="1108.7" x2="2859.6" y2="1108.7" stroke="#1c1d27" stroke-width="2.6" />
<line x1="3083.4" y1="1108.7" x2="3105.8" y2="1108.7" stroke="#1c1d27" stroke-width="2.6" />
<line x1="3133.2" y1="1102.3" x2="3148.2" y2="1102.3" stroke="#1c1d27" stroke-width="2.6" />
<clipPath id="cc14"><rect x="923.9" y="1213" width="678.1" height="162" rx="9"/></clipPath>
<g clip-path="url(#cc14)">
<rect x="923.9" y="1277.0" width="678.1" height="98.0" fill="#23578e" />
<line x1="980.0" y1="185.0" x2="980.0" y2="1375.0" stroke="#9fc7fa" stroke-width="2.2" stroke-dasharray="10 6" stroke-opacity="0.15"/>
<line x1="1036.0" y1="185.0" x2="1036.0" y2="1375.0" stroke="#9fc7fa" stroke-width="2.2" stroke-dasharray="10 6" stroke-opacity="0.15"/>
<line x1="1094.0" y1="185.0" x2="1094.0" y2="1375.0" stroke="#9fc7fa" stroke-width="2.2" stroke-dasharray="10 6" stroke-opacity="0.15"/>
<line x1="1150.0" y1="185.0" x2="1150.0" y2="1375.0" stroke="#9fc7fa" stroke-width="2.2" stroke-dasharray="10 6" stroke-opacity="0.3"/>
<line x1="1206.0" y1="185.0" x2="1206.0" y2="1375.0" stroke="#9fc7fa" stroke-width="2.2" stroke-dasharray="10 6" stroke-opacity="0.15"/>
<line x1="1264.0" y1="185.0" x2="1264.0" y2="1375.0" stroke="#9fc7fa" stroke-width="2.2" stroke-dasharray="10 6" stroke-opacity="0.15"/>
<line x1="1320.0" y1="185.0" x2="1320.0" y2="1375.0" stroke="#9fc7fa" stroke-width="2.2" stroke-dasharray="10 6" stroke-opacity="0.15"/>
<line x1="1376.0" y1="185.0" x2="1376.0" y2="1375.0" stroke="#9fc7fa" stroke-width="2.2" stroke-dasharray="10 6" stroke-opacity="0.3"/>
<line x1="1432.0" y1="185.0" x2="1432.0" y2="1375.0" stroke="#9fc7fa" stroke-width="2.2" stroke-dasharray="10 6" stroke-opacity="0.15"/>
<line x1="1490.0" y1="185.0" x2="1490.0" y2="1375.0" stroke="#9fc7fa" stroke-width="2.2" stroke-dasharray="10 6" stroke-opacity="0.15"/>
<line x1="1546.0" y1="185.0" x2="1546.0" y2="1375.0" stroke="#9fc7fa" stroke-width="2.2" stroke-dasharray="10 6" stroke-opacity="0.15"/>
<rect x="923.9" y="1213.0" width="678.1" height="64.0" fill="#3f8ff5" />
<line x1="923.9" y1="1277.2" x2="1602.0" y2="1277.2" stroke="#33303a" stroke-width="2.2" />
</g>
<rect x="923.9" y="1213" width="678.1" height="162" rx="9" fill="none" stroke="#2a2e3b" stroke-width="2.2"/>
<text x="932.7" y="1255.0" font-size="25" fill="#1a1b26" textLength="491.4" lengthAdjust="spacingAndGlyphs" >i've been really#1 really#2 trying#1 trying#2</text>
<line x1="983.0" y1="1364.5" x2="1027.9" y2="1364.5" stroke="#1c1d27" stroke-width="3.4" />
<line x1="1027.9" y1="1347.5" x2="1066.1" y2="1347.5" stroke="#1c1d27" stroke-width="3.4" />
<line x1="1066.1" y1="1324.9" x2="1098.7" y2="1324.9" stroke="#1c1d27" stroke-width="3.4" />
<line x1="1098.7" y1="1330.6" x2="1120.9" y2="1330.6" stroke="#1c1d27" stroke-width="3.4" />
<line x1="1146.8" y1="1347.5" x2="1161.8" y2="1347.5" stroke="#1c1d27" stroke-width="3.4" />
<line x1="1161.8" y1="1336.2" x2="1180.0" y2="1336.2" stroke="#1c1d27" stroke-width="3.4" />
<line x1="1180.0" y1="1347.5" x2="1199.0" y2="1347.5" stroke="#1c1d27" stroke-width="3.4" />
<line x1="1199.0" y1="1336.2" x2="1223.6" y2="1336.2" stroke="#1c1d27" stroke-width="3.4" />
<line x1="1223.6" y1="1347.5" x2="1246.2" y2="1347.5" stroke="#1c1d27" stroke-width="3.4" />
<line x1="1246.2" y1="1336.2" x2="1278.7" y2="1336.2" stroke="#1c1d27" stroke-width="3.4" />
<line x1="1278.7" y1="1347.5" x2="1327.2" y2="1347.5" stroke="#1c1d27" stroke-width="3.4" />
<line x1="1327.2" y1="1336.2" x2="1362.1" y2="1336.2" stroke="#1c1d27" stroke-width="3.4" />
<clipPath id="cc15"><rect x="1602.4" y="1213" width="1753.1" height="162" rx="9"/></clipPath>
<g clip-path="url(#cc15)">
<rect x="1602.4" y="1277.0" width="1753.1" height="98.0" fill="#23578e" />
<line x1="1660.0" y1="185.0" x2="1660.0" y2="1375.0" stroke="#9fc7fa" stroke-width="2.2" stroke-dasharray="10 6" stroke-opacity="0.15"/>
<line x1="1716.0" y1="185.0" x2="1716.0" y2="1375.0" stroke="#9fc7fa" stroke-width="2.2" stroke-dasharray="10 6" stroke-opacity="0.15"/>
<line x1="1772.0" y1="185.0" x2="1772.0" y2="1375.0" stroke="#9fc7fa" stroke-width="2.2" stroke-dasharray="10 6" stroke-opacity="0.15"/>
<line x1="1828.0" y1="185.0" x2="1828.0" y2="1375.0" stroke="#9fc7fa" stroke-width="2.2" stroke-dasharray="10 6" stroke-opacity="0.3"/>
<line x1="1886.0" y1="185.0" x2="1886.0" y2="1375.0" stroke="#9fc7fa" stroke-width="2.2" stroke-dasharray="10 6" stroke-opacity="0.15"/>
<line x1="1942.0" y1="185.0" x2="1942.0" y2="1375.0" stroke="#9fc7fa" stroke-width="2.2" stroke-dasharray="10 6" stroke-opacity="0.15"/>
<line x1="1998.0" y1="185.0" x2="1998.0" y2="1375.0" stroke="#9fc7fa" stroke-width="2.2" stroke-dasharray="10 6" stroke-opacity="0.15"/>
<line x1="2056.0" y1="185.0" x2="2056.0" y2="1375.0" stroke="#9fc7fa" stroke-width="2.2" stroke-dasharray="10 6" stroke-opacity="0.3"/>
<line x1="2112.0" y1="185.0" x2="2112.0" y2="1375.0" stroke="#9fc7fa" stroke-width="2.2" stroke-dasharray="10 6" stroke-opacity="0.15"/>
<line x1="2168.0" y1="185.0" x2="2168.0" y2="1375.0" stroke="#9fc7fa" stroke-width="2.2" stroke-dasharray="10 6" stroke-opacity="0.15"/>
<line x1="2224.0" y1="185.0" x2="2224.0" y2="1375.0" stroke="#9fc7fa" stroke-width="2.2" stroke-dasharray="10 6" stroke-opacity="0.15"/>
<line x1="2282.0" y1="185.0" x2="2282.0" y2="1375.0" stroke="#9fc7fa" stroke-width="2.2" stroke-dasharray="10 6" stroke-opacity="0.3"/>
<line x1="2338.0" y1="185.0" x2="2338.0" y2="1375.0" stroke="#9fc7fa" stroke-width="2.2" stroke-dasharray="10 6" stroke-opacity="0.15"/>
<line x1="2394.0" y1="185.0" x2="2394.0" y2="1375.0" stroke="#9fc7fa" stroke-width="2.2" stroke-dasharray="10 6" stroke-opacity="0.15"/>
<line x1="2452.0" y1="185.0" x2="2452.0" y2="1375.0" stroke="#9fc7fa" stroke-width="2.2" stroke-dasharray="10 6" stroke-opacity="0.15"/>
<line x1="2508.0" y1="185.0" x2="2508.0" y2="1375.0" stroke="#9fc7fa" stroke-width="2.2" stroke-dasharray="10 6" stroke-opacity="0.3"/>
<line x1="2564.0" y1="185.0" x2="2564.0" y2="1375.0" stroke="#9fc7fa" stroke-width="2.2" stroke-dasharray="10 6" stroke-opacity="0.15"/>
<line x1="2620.0" y1="185.0" x2="2620.0" y2="1375.0" stroke="#9fc7fa" stroke-width="2.2" stroke-dasharray="10 6" stroke-opacity="0.15"/>
<line x1="2678.0" y1="185.0" x2="2678.0" y2="1375.0" stroke="#9fc7fa" stroke-width="2.2" stroke-dasharray="10 6" stroke-opacity="0.15"/>
<line x1="2734.0" y1="185.0" x2="2734.0" y2="1375.0" stroke="#9fc7fa" stroke-width="2.2" stroke-dasharray="10 6" stroke-opacity="0.3"/>
<line x1="2790.0" y1="185.0" x2="2790.0" y2="1375.0" stroke="#9fc7fa" stroke-width="2.2" stroke-dasharray="10 6" stroke-opacity="0.15"/>
<line x1="2848.0" y1="185.0" x2="2848.0" y2="1375.0" stroke="#9fc7fa" stroke-width="2.2" stroke-dasharray="10 6" stroke-opacity="0.15"/>
<line x1="2904.0" y1="185.0" x2="2904.0" y2="1375.0" stroke="#9fc7fa" stroke-width="2.2" stroke-dasharray="10 6" stroke-opacity="0.15"/>
<line x1="2960.0" y1="185.0" x2="2960.0" y2="1375.0" stroke="#9fc7fa" stroke-width="2.2" stroke-dasharray="10 6" stroke-opacity="0.3"/>
<line x1="3016.0" y1="185.0" x2="3016.0" y2="1375.0" stroke="#9fc7fa" stroke-width="2.2" stroke-dasharray="10 6" stroke-opacity="0.15"/>
<line x1="3074.0" y1="185.0" x2="3074.0" y2="1375.0" stroke="#9fc7fa" stroke-width="2.2" stroke-dasharray="10 6" stroke-opacity="0.15"/>
<line x1="3130.0" y1="185.0" x2="3130.0" y2="1375.0" stroke="#9fc7fa" stroke-width="2.2" stroke-dasharray="10 6" stroke-opacity="0.15"/>
<line x1="3186.0" y1="185.0" x2="3186.0" y2="1375.0" stroke="#9fc7fa" stroke-width="2.2" stroke-dasharray="10 6" stroke-opacity="0.3"/>
<line x1="3244.0" y1="185.0" x2="3244.0" y2="1375.0" stroke="#9fc7fa" stroke-width="2.2" stroke-dasharray="10 6" stroke-opacity="0.15"/>
<line x1="3300.0" y1="185.0" x2="3300.0" y2="1375.0" stroke="#9fc7fa" stroke-width="2.2" stroke-dasharray="10 6" stroke-opacity="0.15"/>
<rect x="1602.4" y="1213.0" width="1753.1" height="64.0" fill="#3f8ff5" />
<line x1="1602.4" y1="1277.2" x2="3355.5" y2="1277.2" stroke="#33303a" stroke-width="2.2" />
</g>
<rect x="1602.4" y="1213" width="1753.1" height="162" rx="9" fill="none" stroke="#2a2e3b" stroke-width="2.2"/>
<text x="1611.2" y="1255.0" font-size="25" fill="#1a1b26" textLength="237.6" lengthAdjust="spacingAndGlyphs" >da da da da da da da</text>
<line x1="2386.7" y1="1336.0" x2="2501.8" y2="1336.0" stroke="#1c1d27" stroke-width="3.4" />
<line x1="2529.7" y1="1336.0" x2="2746.5" y2="1336.0" stroke="#1c1d27" stroke-width="3.4" />
<line x1="2787.4" y1="1336.0" x2="2844.7" y2="1336.0" stroke="#1c1d27" stroke-width="3.4" />
<line x1="2857.1" y1="1336.0" x2="2892.0" y2="1336.0" stroke="#1c1d27" stroke-width="3.4" />
<line x1="2921.4" y1="1336.0" x2="2977.7" y2="1336.0" stroke="#1c1d27" stroke-width="3.4" />
<line x1="2990.2" y1="1336.0" x2="3028.6" y2="1336.0" stroke="#1c1d27" stroke-width="3.4" />
<line x1="3054.0" y1="1336.0" x2="3262.8" y2="1336.0" stroke="#1c1d27" stroke-width="3.4" />
<clipPath id="cc16"><rect x="923.9" y="1389" width="1469.9" height="162" rx="9"/></clipPath>
<g clip-path="url(#cc16)">
<rect x="923.9" y="1453.0" width="1469.9" height="98.0" fill="#56368f" />
<line x1="980.0" y1="185.0" x2="980.0" y2="1551.0" stroke="#c8aafa" stroke-width="2.2" stroke-dasharray="10 6" stroke-opacity="0.15"/>
<line x1="1036.0" y1="185.0" x2="1036.0" y2="1551.0" stroke="#c8aafa" stroke-width="2.2" stroke-dasharray="10 6" stroke-opacity="0.15"/>
<line x1="1094.0" y1="185.0" x2="1094.0" y2="1551.0" stroke="#c8aafa" stroke-width="2.2" stroke-dasharray="10 6" stroke-opacity="0.15"/>
<line x1="1150.0" y1="185.0" x2="1150.0" y2="1551.0" stroke="#c8aafa" stroke-width="2.2" stroke-dasharray="10 6" stroke-opacity="0.3"/>
<line x1="1206.0" y1="185.0" x2="1206.0" y2="1551.0" stroke="#c8aafa" stroke-width="2.2" stroke-dasharray="10 6" stroke-opacity="0.15"/>
<line x1="1264.0" y1="185.0" x2="1264.0" y2="1551.0" stroke="#c8aafa" stroke-width="2.2" stroke-dasharray="10 6" stroke-opacity="0.15"/>
<line x1="1320.0" y1="185.0" x2="1320.0" y2="1551.0" stroke="#c8aafa" stroke-width="2.2" stroke-dasharray="10 6" stroke-opacity="0.15"/>
<line x1="1376.0" y1="185.0" x2="1376.0" y2="1551.0" stroke="#c8aafa" stroke-width="2.2" stroke-dasharray="10 6" stroke-opacity="0.3"/>
<line x1="1432.0" y1="185.0" x2="1432.0" y2="1551.0" stroke="#c8aafa" stroke-width="2.2" stroke-dasharray="10 6" stroke-opacity="0.15"/>
<line x1="1490.0" y1="185.0" x2="1490.0" y2="1551.0" stroke="#c8aafa" stroke-width="2.2" stroke-dasharray="10 6" stroke-opacity="0.15"/>
<line x1="1546.0" y1="185.0" x2="1546.0" y2="1551.0" stroke="#c8aafa" stroke-width="2.2" stroke-dasharray="10 6" stroke-opacity="0.15"/>
<line x1="1602.0" y1="185.0" x2="1602.0" y2="1551.0" stroke="#c8aafa" stroke-width="2.2" stroke-dasharray="10 6" stroke-opacity="0.3"/>
<line x1="1660.0" y1="185.0" x2="1660.0" y2="1551.0" stroke="#c8aafa" stroke-width="2.2" stroke-dasharray="10 6" stroke-opacity="0.15"/>
<line x1="1716.0" y1="185.0" x2="1716.0" y2="1551.0" stroke="#c8aafa" stroke-width="2.2" stroke-dasharray="10 6" stroke-opacity="0.15"/>
<line x1="1772.0" y1="185.0" x2="1772.0" y2="1551.0" stroke="#c8aafa" stroke-width="2.2" stroke-dasharray="10 6" stroke-opacity="0.15"/>
<line x1="1828.0" y1="185.0" x2="1828.0" y2="1551.0" stroke="#c8aafa" stroke-width="2.2" stroke-dasharray="10 6" stroke-opacity="0.3"/>
<line x1="1886.0" y1="185.0" x2="1886.0" y2="1551.0" stroke="#c8aafa" stroke-width="2.2" stroke-dasharray="10 6" stroke-opacity="0.15"/>
<line x1="1942.0" y1="185.0" x2="1942.0" y2="1551.0" stroke="#c8aafa" stroke-width="2.2" stroke-dasharray="10 6" stroke-opacity="0.15"/>
<line x1="1998.0" y1="185.0" x2="1998.0" y2="1551.0" stroke="#c8aafa" stroke-width="2.2" stroke-dasharray="10 6" stroke-opacity="0.15"/>
<line x1="2056.0" y1="185.0" x2="2056.0" y2="1551.0" stroke="#c8aafa" stroke-width="2.2" stroke-dasharray="10 6" stroke-opacity="0.3"/>
<line x1="2112.0" y1="185.0" x2="2112.0" y2="1551.0" stroke="#c8aafa" stroke-width="2.2" stroke-dasharray="10 6" stroke-opacity="0.15"/>
<line x1="2168.0" y1="185.0" x2="2168.0" y2="1551.0" stroke="#c8aafa" stroke-width="2.2" stroke-dasharray="10 6" stroke-opacity="0.15"/>
<line x1="2224.0" y1="185.0" x2="2224.0" y2="1551.0" stroke="#c8aafa" stroke-width="2.2" stroke-dasharray="10 6" stroke-opacity="0.15"/>
<line x1="2282.0" y1="185.0" x2="2282.0" y2="1551.0" stroke="#c8aafa" stroke-width="2.2" stroke-dasharray="10 6" stroke-opacity="0.3"/>
<line x1="2338.0" y1="185.0" x2="2338.0" y2="1551.0" stroke="#c8aafa" stroke-width="2.2" stroke-dasharray="10 6" stroke-opacity="0.15"/>
<rect x="923.9" y="1389.0" width="1469.9" height="64.0" fill="#9056f5" />
<line x1="923.9" y1="1453.2" x2="2393.8" y2="1453.2" stroke="#33303a" stroke-width="2.2" />
</g>
<rect x="923.9" y="1389" width="1469.9" height="162" rx="9" fill="none" stroke="#2a2e3b" stroke-width="2.2"/>
<text x="932.7" y="1431.0" font-size="25" fill="#1a1b26" textLength="494.0" lengthAdjust="spacingAndGlyphs" >try to forget#1 forget#2 you baby#1 baby#2</text>
<line x1="1380.7" y1="1456.0" x2="1432.9" y2="1456.0" stroke="#1c1d27" stroke-width="3.4" />
<line x1="1432.9" y1="1467.0" x2="1465.8" y2="1467.0" stroke="#1c1d27" stroke-width="3.4" />
<line x1="1465.8" y1="1478.3" x2="1495.7" y2="1478.3" stroke="#1c1d27" stroke-width="3.4" />
<line x1="1495.7" y1="1483.9" x2="1531.9" y2="1483.9" stroke="#1c1d27" stroke-width="3.4" />
<clipPath id="cc17"><rect x="2394.2" y="1389" width="961.3" height="162" rx="9"/></clipPath>
<g clip-path="url(#cc17)">
<rect x="2394.2" y="1453.0" width="961.3" height="98.0" fill="#56368f" />
<line x1="2452.0" y1="185.0" x2="2452.0" y2="1551.0" stroke="#c8aafa" stroke-width="2.2" stroke-dasharray="10 6" stroke-opacity="0.15"/>
<line x1="2508.0" y1="185.0" x2="2508.0" y2="1551.0" stroke="#c8aafa" stroke-width="2.2" stroke-dasharray="10 6" stroke-opacity="0.3"/>
<line x1="2564.0" y1="185.0" x2="2564.0" y2="1551.0" stroke="#c8aafa" stroke-width="2.2" stroke-dasharray="10 6" stroke-opacity="0.15"/>
<line x1="2620.0" y1="185.0" x2="2620.0" y2="1551.0" stroke="#c8aafa" stroke-width="2.2" stroke-dasharray="10 6" stroke-opacity="0.15"/>
<line x1="2678.0" y1="185.0" x2="2678.0" y2="1551.0" stroke="#c8aafa" stroke-width="2.2" stroke-dasharray="10 6" stroke-opacity="0.15"/>
<line x1="2734.0" y1="185.0" x2="2734.0" y2="1551.0" stroke="#c8aafa" stroke-width="2.2" stroke-dasharray="10 6" stroke-opacity="0.3"/>
<line x1="2790.0" y1="185.0" x2="2790.0" y2="1551.0" stroke="#c8aafa" stroke-width="2.2" stroke-dasharray="10 6" stroke-opacity="0.15"/>
<line x1="2848.0" y1="185.0" x2="2848.0" y2="1551.0" stroke="#c8aafa" stroke-width="2.2" stroke-dasharray="10 6" stroke-opacity="0.15"/>
<line x1="2904.0" y1="185.0" x2="2904.0" y2="1551.0" stroke="#c8aafa" stroke-width="2.2" stroke-dasharray="10 6" stroke-opacity="0.15"/>
<line x1="2960.0" y1="185.0" x2="2960.0" y2="1551.0" stroke="#c8aafa" stroke-width="2.2" stroke-dasharray="10 6" stroke-opacity="0.3"/>
<line x1="3016.0" y1="185.0" x2="3016.0" y2="1551.0" stroke="#c8aafa" stroke-width="2.2" stroke-dasharray="10 6" stroke-opacity="0.15"/>
<line x1="3074.0" y1="185.0" x2="3074.0" y2="1551.0" stroke="#c8aafa" stroke-width="2.2" stroke-dasharray="10 6" stroke-opacity="0.15"/>
<line x1="3130.0" y1="185.0" x2="3130.0" y2="1551.0" stroke="#c8aafa" stroke-width="2.2" stroke-dasharray="10 6" stroke-opacity="0.15"/>
<line x1="3186.0" y1="185.0" x2="3186.0" y2="1551.0" stroke="#c8aafa" stroke-width="2.2" stroke-dasharray="10 6" stroke-opacity="0.3"/>
<line x1="3244.0" y1="185.0" x2="3244.0" y2="1551.0" stroke="#c8aafa" stroke-width="2.2" stroke-dasharray="10 6" stroke-opacity="0.15"/>
<line x1="3300.0" y1="185.0" x2="3300.0" y2="1551.0" stroke="#c8aafa" stroke-width="2.2" stroke-dasharray="10 6" stroke-opacity="0.15"/>
<rect x="2394.2" y="1389.0" width="961.3" height="64.0" fill="#9056f5" />
<line x1="2394.2" y1="1453.2" x2="3355.5" y2="1453.2" stroke="#33303a" stroke-width="2.2" />
</g>
<rect x="2394.2" y="1389" width="961.3" height="162" rx="9" fill="none" stroke="#2a2e3b" stroke-width="2.2"/>
<text x="2403.0" y="1431.0" font-size="25" fill="#1a1b26" textLength="308.0" lengthAdjust="spacingAndGlyphs" >da da da da da da da da da</text>
<clipPath id="ccm"><rect x="150" y="1565.4" width="3205" height="161" rx="9"/></clipPath>
<g clip-path="url(#ccm)">
<rect x="161.5" y="1628.0" width="3200.0" height="98.5" fill="#8d1c85" />
<line x1="188.0" y1="185.0" x2="188.0" y2="1727.0" stroke="#f498ec" stroke-width="2.2" stroke-dasharray="10 6" stroke-opacity="0.15"/>
<line x1="244.0" y1="185.0" x2="244.0" y2="1727.0" stroke="#f498ec" stroke-width="2.2" stroke-dasharray="10 6" stroke-opacity="0.3"/>
<line x1="302.0" y1="185.0" x2="302.0" y2="1727.0" stroke="#f498ec" stroke-width="2.2" stroke-dasharray="10 6" stroke-opacity="0.15"/>
<line x1="358.0" y1="185.0" x2="358.0" y2="1727.0" stroke="#f498ec" stroke-width="2.2" stroke-dasharray="10 6" stroke-opacity="0.15"/>
<line x1="414.0" y1="185.0" x2="414.0" y2="1727.0" stroke="#f498ec" stroke-width="2.2" stroke-dasharray="10 6" stroke-opacity="0.15"/>
<line x1="472.0" y1="185.0" x2="472.0" y2="1727.0" stroke="#f498ec" stroke-width="2.2" stroke-dasharray="10 6" stroke-opacity="0.3"/>
<line x1="528.0" y1="185.0" x2="528.0" y2="1727.0" stroke="#f498ec" stroke-width="2.2" stroke-dasharray="10 6" stroke-opacity="0.15"/>
<line x1="584.0" y1="185.0" x2="584.0" y2="1727.0" stroke="#f498ec" stroke-width="2.2" stroke-dasharray="10 6" stroke-opacity="0.15"/>
<line x1="640.0" y1="185.0" x2="640.0" y2="1727.0" stroke="#f498ec" stroke-width="2.2" stroke-dasharray="10 6" stroke-opacity="0.15"/>
<line x1="698.0" y1="185.0" x2="698.0" y2="1727.0" stroke="#f498ec" stroke-width="2.2" stroke-dasharray="10 6" stroke-opacity="0.3"/>
<line x1="754.0" y1="185.0" x2="754.0" y2="1727.0" stroke="#f498ec" stroke-width="2.2" stroke-dasharray="10 6" stroke-opacity="0.15"/>
<line x1="810.0" y1="185.0" x2="810.0" y2="1727.0" stroke="#f498ec" stroke-width="2.2" stroke-dasharray="10 6" stroke-opacity="0.15"/>
<line x1="868.0" y1="185.0" x2="868.0" y2="1727.0" stroke="#f498ec" stroke-width="2.2" stroke-dasharray="10 6" stroke-opacity="0.15"/>
<line x1="924.0" y1="185.0" x2="924.0" y2="1727.0" stroke="#f498ec" stroke-width="2.2" stroke-dasharray="10 6" stroke-opacity="0.3"/>
<line x1="980.0" y1="185.0" x2="980.0" y2="1727.0" stroke="#f498ec" stroke-width="2.2" stroke-dasharray="10 6" stroke-opacity="0.15"/>
<line x1="1036.0" y1="185.0" x2="1036.0" y2="1727.0" stroke="#f498ec" stroke-width="2.2" stroke-dasharray="10 6" stroke-opacity="0.15"/>
<line x1="1094.0" y1="185.0" x2="1094.0" y2="1727.0" stroke="#f498ec" stroke-width="2.2" stroke-dasharray="10 6" stroke-opacity="0.15"/>
<line x1="1150.0" y1="185.0" x2="1150.0" y2="1727.0" stroke="#f498ec" stroke-width="2.2" stroke-dasharray="10 6" stroke-opacity="0.3"/>
<line x1="1206.0" y1="185.0" x2="1206.0" y2="1727.0" stroke="#f498ec" stroke-width="2.2" stroke-dasharray="10 6" stroke-opacity="0.15"/>
<line x1="1264.0" y1="185.0" x2="1264.0" y2="1727.0" stroke="#f498ec" stroke-width="2.2" stroke-dasharray="10 6" stroke-opacity="0.15"/>
<line x1="1320.0" y1="185.0" x2="1320.0" y2="1727.0" stroke="#f498ec" stroke-width="2.2" stroke-dasharray="10 6" stroke-opacity="0.15"/>
<line x1="1376.0" y1="185.0" x2="1376.0" y2="1727.0" stroke="#f498ec" stroke-width="2.2" stroke-dasharray="10 6" stroke-opacity="0.3"/>
<line x1="1432.0" y1="185.0" x2="1432.0" y2="1727.0" stroke="#f498ec" stroke-width="2.2" stroke-dasharray="10 6" stroke-opacity="0.15"/>
<line x1="1490.0" y1="185.0" x2="1490.0" y2="1727.0" stroke="#f498ec" stroke-width="2.2" stroke-dasharray="10 6" stroke-opacity="0.15"/>
<line x1="1546.0" y1="185.0" x2="1546.0" y2="1727.0" stroke="#f498ec" stroke-width="2.2" stroke-dasharray="10 6" stroke-opacity="0.15"/>
<line x1="1602.0" y1="185.0" x2="1602.0" y2="1727.0" stroke="#f498ec" stroke-width="2.2" stroke-dasharray="10 6" stroke-opacity="0.3"/>
<line x1="1660.0" y1="185.0" x2="1660.0" y2="1727.0" stroke="#f498ec" stroke-width="2.2" stroke-dasharray="10 6" stroke-opacity="0.15"/>
<line x1="1716.0" y1="185.0" x2="1716.0" y2="1727.0" stroke="#f498ec" stroke-width="2.2" stroke-dasharray="10 6" stroke-opacity="0.15"/>
<line x1="1772.0" y1="185.0" x2="1772.0" y2="1727.0" stroke="#f498ec" stroke-width="2.2" stroke-dasharray="10 6" stroke-opacity="0.15"/>
<line x1="1828.0" y1="185.0" x2="1828.0" y2="1727.0" stroke="#f498ec" stroke-width="2.2" stroke-dasharray="10 6" stroke-opacity="0.3"/>
<line x1="1886.0" y1="185.0" x2="1886.0" y2="1727.0" stroke="#f498ec" stroke-width="2.2" stroke-dasharray="10 6" stroke-opacity="0.15"/>
<line x1="1942.0" y1="185.0" x2="1942.0" y2="1727.0" stroke="#f498ec" stroke-width="2.2" stroke-dasharray="10 6" stroke-opacity="0.15"/>
<line x1="1998.0" y1="185.0" x2="1998.0" y2="1727.0" stroke="#f498ec" stroke-width="2.2" stroke-dasharray="10 6" stroke-opacity="0.15"/>
<line x1="2056.0" y1="185.0" x2="2056.0" y2="1727.0" stroke="#f498ec" stroke-width="2.2" stroke-dasharray="10 6" stroke-opacity="0.3"/>
<line x1="2112.0" y1="185.0" x2="2112.0" y2="1727.0" stroke="#f498ec" stroke-width="2.2" stroke-dasharray="10 6" stroke-opacity="0.15"/>
<line x1="2168.0" y1="185.0" x2="2168.0" y2="1727.0" stroke="#f498ec" stroke-width="2.2" stroke-dasharray="10 6" stroke-opacity="0.15"/>
<line x1="2224.0" y1="185.0" x2="2224.0" y2="1727.0" stroke="#f498ec" stroke-width="2.2" stroke-dasharray="10 6" stroke-opacity="0.15"/>
<line x1="2282.0" y1="185.0" x2="2282.0" y2="1727.0" stroke="#f498ec" stroke-width="2.2" stroke-dasharray="10 6" stroke-opacity="0.3"/>
<line x1="2338.0" y1="185.0" x2="2338.0" y2="1727.0" stroke="#f498ec" stroke-width="2.2" stroke-dasharray="10 6" stroke-opacity="0.15"/>
<line x1="2394.0" y1="185.0" x2="2394.0" y2="1727.0" stroke="#f498ec" stroke-width="2.2" stroke-dasharray="10 6" stroke-opacity="0.15"/>
<line x1="2452.0" y1="185.0" x2="2452.0" y2="1727.0" stroke="#f498ec" stroke-width="2.2" stroke-dasharray="10 6" stroke-opacity="0.15"/>
<line x1="2508.0" y1="185.0" x2="2508.0" y2="1727.0" stroke="#f498ec" stroke-width="2.2" stroke-dasharray="10 6" stroke-opacity="0.3"/>
<line x1="2564.0" y1="185.0" x2="2564.0" y2="1727.0" stroke="#f498ec" stroke-width="2.2" stroke-dasharray="10 6" stroke-opacity="0.15"/>
<line x1="2620.0" y1="185.0" x2="2620.0" y2="1727.0" stroke="#f498ec" stroke-width="2.2" stroke-dasharray="10 6" stroke-opacity="0.15"/>
<line x1="2678.0" y1="185.0" x2="2678.0" y2="1727.0" stroke="#f498ec" stroke-width="2.2" stroke-dasharray="10 6" stroke-opacity="0.15"/>
<line x1="2734.0" y1="185.0" x2="2734.0" y2="1727.0" stroke="#f498ec" stroke-width="2.2" stroke-dasharray="10 6" stroke-opacity="0.3"/>
<line x1="2790.0" y1="185.0" x2="2790.0" y2="1727.0" stroke="#f498ec" stroke-width="2.2" stroke-dasharray="10 6" stroke-opacity="0.15"/>
<line x1="2848.0" y1="185.0" x2="2848.0" y2="1727.0" stroke="#f498ec" stroke-width="2.2" stroke-dasharray="10 6" stroke-opacity="0.15"/>
<line x1="2904.0" y1="185.0" x2="2904.0" y2="1727.0" stroke="#f498ec" stroke-width="2.2" stroke-dasharray="10 6" stroke-opacity="0.15"/>
<line x1="2960.0" y1="185.0" x2="2960.0" y2="1727.0" stroke="#f498ec" stroke-width="2.2" stroke-dasharray="10 6" stroke-opacity="0.3"/>
<line x1="3016.0" y1="185.0" x2="3016.0" y2="1727.0" stroke="#f498ec" stroke-width="2.2" stroke-dasharray="10 6" stroke-opacity="0.15"/>
<line x1="3074.0" y1="185.0" x2="3074.0" y2="1727.0" stroke="#f498ec" stroke-width="2.2" stroke-dasharray="10 6" stroke-opacity="0.15"/>
<line x1="3130.0" y1="185.0" x2="3130.0" y2="1727.0" stroke="#f498ec" stroke-width="2.2" stroke-dasharray="10 6" stroke-opacity="0.15"/>
<line x1="3186.0" y1="185.0" x2="3186.0" y2="1727.0" stroke="#f498ec" stroke-width="2.2" stroke-dasharray="10 6" stroke-opacity="0.3"/>
<line x1="3244.0" y1="185.0" x2="3244.0" y2="1727.0" stroke="#f498ec" stroke-width="2.2" stroke-dasharray="10 6" stroke-opacity="0.15"/>
<line x1="3300.0" y1="185.0" x2="3300.0" y2="1727.0" stroke="#f498ec" stroke-width="2.2" stroke-dasharray="10 6" stroke-opacity="0.15"/>
<line x1="3356.0" y1="185.0" x2="3356.0" y2="1727.0" stroke="#f498ec" stroke-width="2.2" stroke-dasharray="10 6" stroke-opacity="0.15"/>
<rect x="161.5" y="1565.4" width="3200.0" height="62.6" fill="#ea30da" />
<line x1="161.5" y1="1628.0" x2="3360.0" y2="1628.0" stroke="#5b2058" stroke-width="2.2" />
<path fill="#1e1f2b" d="M161.0 1648.4 L162.6 1647.6 L164.2 1647.9 L165.8 1649.1 L167.4 1649.2 L169.0 1649.1 L170.6 1648.2 L172.2 1648.9 L173.8 1647.7 L175.4 1647.8 L177.0 1646.8 L178.6 1647.1 L180.2 1648.9 L181.8 1648.5 L183.4 1648.8 L185.0 1647.7 L186.6 1647.9 L188.2 1644.3 L189.8 1644.3 L191.4 1644.8 L193.0 1645.3 L194.6 1643.8 L196.2 1643.9 L197.8 1644.9 L199.4 1647.1 L201.0 1646.0 L202.6 1646.0 L204.2 1646.9 L205.8 1646.9 L207.4 1646.9 L209.0 1646.8 L210.6 1647.5 L212.2 1648.1 L213.8 1647.8 L215.4 1648.6 L217.0 1648.7 L218.6 1647.0 L220.2 1648.6 L221.8 1647.0 L223.4 1648.8 L225.0 1648.0 L226.6 1649.2 L228.2 1647.8 L229.8 1648.0 L231.4 1649.1 L233.0 1647.1 L234.6 1648.3 L236.2 1649.1 L237.8 1648.8 L239.4 1649.2 L241.0 1648.3 L242.6 1647.7 L244.2 1648.4 L245.8 1647.1 L247.4 1648.0 L249.0 1648.4 L250.6 1648.8 L252.2 1647.9 L253.8 1649.2 L255.4 1647.1 L257.0 1648.3 L258.6 1647.9 L260.2 1648.7 L261.8 1647.1 L263.4 1647.4 L265.0 1648.4 L266.6 1648.6 L268.2 1646.9 L269.8 1646.8 L271.4 1648.7 L273.0 1648.7 L274.6 1647.1 L276.2 1647.3 L277.8 1647.0 L279.4 1648.1 L281.0 1648.4 L282.6 1648.3 L284.2 1647.4 L285.8 1648.9 L287.4 1648.9 L289.0 1647.6 L290.6 1648.9 L292.2 1647.6 L293.8 1648.2 L295.4 1648.7 L297.0 1648.6 L298.6 1648.2 L300.2 1648.4 L301.8 1638.5 L303.4 1643.1 L305.0 1640.3 L306.6 1641.8 L308.2 1641.4 L309.8 1643.7 L311.4 1642.5 L313.0 1643.8 L314.6 1644.1 L316.2 1643.4 L317.8 1643.7 L319.4 1645.5 L321.0 1645.2 L322.6 1645.4 L324.2 1645.1 L325.8 1646.6 L327.4 1647.0 L329.0 1647.5 L330.6 1647.5 L332.2 1647.6 L333.8 1646.8 L335.4 1647.6 L337.0 1647.6 L338.6 1647.8 L340.2 1647.5 L341.8 1648.2 L343.4 1647.2 L345.0 1647.1 L346.6 1646.9 L348.2 1648.7 L349.8 1648.7 L351.4 1648.5 L353.0 1649.2 L354.6 1647.9 L356.2 1649.0 L357.8 1647.2 L359.4 1641.9 L361.0 1644.4 L362.6 1645.0 L364.2 1644.8 L365.8 1645.1 L367.4 1643.4 L369.0 1645.2 L370.6 1646.1 L372.2 1646.3 L373.8 1645.7 L375.4 1645.2 L377.0 1645.9 L378.6 1647.7 L380.2 1646.5 L381.8 1647.0 L383.4 1647.1 L385.0 1647.7 L386.6 1635.5 L388.2 1635.9 L389.8 1638.0 L391.4 1640.4 L393.0 1641.3 L394.6 1639.7 L396.2 1638.2 L397.8 1641.1 L399.4 1642.9 L401.0 1640.4 L402.6 1644.3 L404.2 1643.5 L405.8 1641.8 L407.4 1642.1 L409.0 1645.4 L410.6 1644.5 L412.2 1644.5 L413.8 1644.6 L415.4 1644.4 L417.0 1644.7 L418.6 1647.0 L420.2 1645.6 L421.8 1647.1 L423.4 1646.5 L425.0 1648.2 L426.6 1646.8 L428.2 1646.9 L429.8 1647.1 L431.4 1647.7 L433.0 1646.8 L434.6 1646.9 L436.2 1648.6 L437.8 1648.9 L439.4 1647.9 L441.0 1648.5 L442.6 1648.7 L444.2 1648.0 L445.8 1648.7 L447.4 1647.3 L449.0 1647.2 L450.6 1648.0 L452.2 1648.9 L453.8 1649.1 L455.4 1646.9 L457.0 1647.6 L458.6 1648.6 L460.2 1648.4 L461.8 1648.3 L463.4 1648.2 L465.0 1646.9 L466.6 1646.9 L468.2 1649.2 L469.8 1648.7 L471.4 1632.1 L473.0 1632.7 L474.6 1635.1 L476.2 1638.6 L477.8 1635.9 L479.4 1637.2 L481.0 1636.2 L482.6 1637.4 L484.2 1637.5 L485.8 1638.1 L487.4 1642.4 L489.0 1642.2 L490.6 1643.0 L492.2 1642.6 L493.8 1643.5 L495.4 1641.8 L497.0 1642.2 L498.6 1645.5 L500.2 1644.3 L501.8 1639.6 L503.4 1642.5 L505.0 1641.2 L506.6 1643.9 L508.2 1644.7 L509.8 1643.3 L511.4 1643.4 L513.0 1644.8 L514.6 1646.3 L516.2 1644.5 L517.8 1644.5 L519.4 1646.9 L521.0 1647.0 L522.6 1646.5 L524.2 1645.8 L525.8 1646.6 L527.4 1646.4 L529.0 1647.6 L530.6 1647.0 L532.2 1648.1 L533.8 1646.9 L535.4 1648.6 L537.0 1647.4 L538.6 1647.3 L540.2 1647.6 L541.8 1647.5 L543.4 1649.0 L545.0 1648.6 L546.6 1648.7 L548.2 1648.4 L549.8 1646.8 L551.4 1648.5 L553.0 1646.9 L554.6 1647.4 L556.2 1632.8 L557.8 1637.7 L559.4 1633.9 L561.0 1636.2 L562.6 1636.6 L564.2 1636.9 L565.8 1641.3 L567.4 1641.8 L569.0 1641.6 L570.6 1639.5 L572.2 1639.9 L573.8 1642.7 L575.4 1644.0 L577.0 1644.0 L578.6 1644.6 L580.2 1644.7 L581.8 1644.8 L583.4 1644.7 L585.0 1645.0 L586.6 1645.1 L588.2 1646.4 L589.8 1646.2 L591.4 1645.2 L593.0 1646.2 L594.6 1646.9 L596.2 1647.6 L597.8 1647.5 L599.4 1647.1 L601.0 1647.2 L602.6 1647.4 L604.2 1647.3 L605.8 1648.2 L607.4 1648.7 L609.0 1647.6 L610.6 1647.7 L612.2 1644.5 L613.8 1644.0 L615.4 1645.8 L617.0 1644.3 L618.6 1644.6 L620.2 1644.6 L621.8 1646.9 L623.4 1645.9 L625.0 1646.8 L626.6 1646.1 L628.2 1647.0 L629.8 1647.6 L631.4 1648.2 L633.0 1647.6 L634.6 1647.8 L636.2 1648.2 L637.8 1648.2 L639.4 1647.1 L641.0 1637.3 L642.6 1639.5 L644.2 1639.1 L645.8 1637.3 L647.4 1641.9 L649.0 1639.8 L650.6 1642.3 L652.2 1640.2 L653.8 1640.8 L655.4 1641.5 L657.0 1641.2 L658.6 1642.5 L660.2 1643.7 L661.8 1644.9 L663.4 1645.1 L665.0 1643.6 L666.6 1645.2 L668.2 1644.9 L669.8 1646.5 L671.4 1647.1 L673.0 1646.5 L674.6 1647.8 L676.2 1646.6 L677.8 1648.0 L679.4 1646.7 L681.0 1648.4 L682.6 1646.9 L684.2 1648.0 L685.8 1647.6 L687.4 1647.6 L689.0 1648.5 L690.6 1647.5 L692.2 1648.8 L693.8 1648.7 L695.4 1648.9 L697.0 1648.1 L698.6 1647.8 L700.2 1647.9 L701.8 1647.8 L703.4 1649.1 L705.0 1648.4 L706.6 1647.1 L708.2 1646.8 L709.8 1648.5 L711.4 1648.2 L713.0 1647.9 L714.6 1649.0 L716.2 1648.4 L717.8 1647.8 L719.4 1648.5 L721.0 1648.0 L722.6 1648.3 L724.2 1647.6 L725.8 1648.9 L727.4 1647.5 L729.0 1647.9 L730.6 1648.4 L732.2 1647.5 L733.8 1647.6 L735.4 1647.0 L737.0 1647.7 L738.6 1647.3 L740.2 1647.4 L741.8 1647.5 L743.4 1647.3 L745.0 1648.4 L746.6 1646.9 L748.2 1647.6 L749.8 1648.8 L751.4 1647.4 L753.0 1647.0 L754.6 1648.5 L756.2 1633.8 L757.8 1636.9 L759.4 1638.5 L761.0 1637.6 L762.6 1637.0 L764.2 1641.6 L765.8 1641.6 L767.4 1641.6 L769.0 1639.8 L770.6 1640.3 L772.2 1640.5 L773.8 1641.5 L775.4 1644.0 L777.0 1643.8 L778.6 1642.8 L780.2 1645.5 L781.8 1646.0 L783.4 1645.6 L785.0 1645.6 L786.6 1645.5 L788.2 1647.2 L789.8 1645.2 L791.4 1646.9 L793.0 1646.6 L794.6 1647.6 L796.2 1647.1 L797.8 1646.6 L799.4 1647.7 L801.0 1647.6 L802.6 1647.4 L804.2 1647.4 L805.8 1647.4 L807.4 1648.4 L809.0 1646.9 L810.6 1648.7 L812.2 1642.9 L813.8 1640.5 L815.4 1643.5 L817.0 1644.2 L818.6 1643.0 L820.2 1643.1 L821.8 1641.1 L823.4 1640.9 L825.0 1642.3 L826.6 1643.6 L828.2 1643.1 L829.8 1641.4 L831.4 1645.0 L833.0 1644.8 L834.6 1641.9 L836.2 1645.3 L837.8 1640.6 L839.4 1642.5 L841.0 1639.5 L842.6 1641.8 L844.2 1640.1 L845.8 1640.4 L847.4 1642.6 L849.0 1641.8 L850.6 1642.1 L852.2 1643.5 L853.8 1640.9 L855.4 1641.9 L857.0 1640.9 L858.6 1642.5 L860.2 1642.7 L861.8 1642.2 L863.4 1644.9 L865.0 1645.4 L866.6 1641.0 L868.2 1641.4 L869.8 1643.8 L871.4 1636.2 L873.0 1636.7 L874.6 1638.8 L876.2 1638.7 L877.8 1639.3 L879.4 1639.2 L881.0 1640.6 L882.6 1642.0 L884.2 1641.0 L885.8 1642.7 L887.4 1640.6 L889.0 1642.2 L890.6 1643.1 L892.2 1643.6 L893.8 1641.4 L895.4 1640.7 L897.0 1642.2 L898.6 1641.3 L900.2 1644.1 L901.8 1643.9 L903.4 1643.8 L905.0 1641.9 L906.6 1643.2 L908.2 1644.2 L909.8 1644.2 L911.4 1641.6 L913.0 1641.9 L914.6 1641.6 L916.2 1645.0 L917.8 1641.9 L919.4 1642.3 L921.0 1644.2 L922.6 1645.5 L924.2 1645.4 L925.8 1641.3 L927.4 1632.7 L929.0 1632.8 L930.6 1634.6 L932.2 1638.8 L933.8 1636.7 L935.4 1638.4 L937.0 1641.3 L938.6 1641.4 L940.2 1640.6 L941.8 1642.5 L943.4 1641.3 L945.0 1642.8 L946.6 1642.0 L948.2 1641.4 L949.8 1641.2 L951.4 1642.1 L953.0 1640.7 L954.6 1642.7 L956.2 1641.2 L957.8 1641.5 L959.4 1644.2 L961.0 1644.5 L962.6 1644.4 L964.2 1645.4 L965.8 1642.5 L967.4 1641.9 L969.0 1645.0 L970.6 1644.4 L972.2 1645.0 L973.8 1643.9 L975.4 1645.3 L977.0 1643.6 L978.6 1642.3 L980.2 1640.7 L981.8 1644.3 L983.4 1640.7 L985.0 1641.2 L986.6 1640.0 L988.2 1642.0 L989.8 1641.6 L991.4 1641.5 L993.0 1641.1 L994.6 1641.6 L996.2 1642.8 L997.8 1643.0 L999.4 1643.9 L1001.0 1644.1 L1002.6 1644.5 L1004.2 1643.1 L1005.8 1644.9 L1007.4 1642.5 L1009.0 1642.8 L1010.6 1644.7 L1012.2 1640.9 L1013.8 1644.9 L1015.4 1644.7 L1017.0 1640.9 L1018.6 1640.7 L1020.2 1644.7 L1021.8 1645.0 L1023.4 1640.8 L1025.0 1642.8 L1026.6 1643.8 L1028.2 1642.4 L1029.8 1644.7 L1031.4 1640.6 L1033.0 1642.3 L1034.6 1642.2 L1036.2 1645.4 L1037.8 1641.8 L1039.4 1644.7 L1041.0 1638.7 L1042.6 1637.6 L1044.2 1639.5 L1045.8 1639.5 L1047.4 1639.0 L1049.0 1639.9 L1050.6 1640.4 L1052.2 1642.4 L1053.8 1642.0 L1055.4 1640.6 L1057.0 1641.1 L1058.6 1644.1 L1060.2 1643.5 L1061.8 1642.6 L1063.4 1642.6 L1065.0 1644.6 L1066.6 1644.5 L1068.2 1643.9 L1069.8 1641.8 L1071.4 1643.9 L1073.0 1643.3 L1074.6 1641.3 L1076.2 1641.1 L1077.8 1643.2 L1079.4 1641.1 L1081.0 1644.1 L1082.6 1641.6 L1084.2 1643.1 L1085.8 1642.3 L1087.4 1644.2 L1089.0 1640.8 L1090.6 1642.6 L1092.2 1642.3 L1093.8 1640.8 L1095.4 1641.3 L1097.0 1642.7 L1098.6 1644.7 L1100.2 1641.2 L1101.8 1644.4 L1103.4 1642.3 L1105.0 1644.5 L1106.6 1644.3 L1108.2 1644.4 L1109.8 1645.5 L1111.4 1641.9 L1113.0 1643.9 L1114.6 1644.3 L1116.2 1643.1 L1117.8 1645.4 L1119.4 1643.5 L1121.0 1642.6 L1122.6 1634.8 L1124.2 1633.0 L1125.8 1638.1 L1127.4 1635.0 L1129.0 1635.9 L1130.6 1636.7 L1132.2 1639.1 L1133.8 1637.3 L1135.4 1638.3 L1137.0 1639.8 L1138.6 1641.2 L1140.2 1639.6 L1141.8 1641.0 L1143.4 1641.2 L1145.0 1641.7 L1146.6 1644.2 L1148.2 1642.5 L1149.8 1640.8 L1151.4 1644.1 L1153.0 1643.1 L1154.6 1641.9 L1156.2 1643.8 L1157.8 1641.7 L1159.4 1642.0 L1161.0 1642.2 L1162.6 1641.5 L1164.2 1645.3 L1165.8 1644.4 L1167.4 1642.7 L1169.0 1643.9 L1170.6 1644.8 L1172.2 1642.6 L1173.8 1644.6 L1175.4 1641.7 L1177.0 1642.9 L1178.6 1641.5 L1180.2 1639.9 L1181.8 1641.0 L1183.4 1641.3 L1185.0 1640.3 L1186.6 1642.9 L1188.2 1641.8 L1189.8 1642.1 L1191.4 1642.4 L1193.0 1640.7 L1194.6 1643.1 L1196.2 1644.4 L1197.8 1643.7 L1199.4 1644.0 L1201.0 1643.7 L1202.6 1643.8 L1204.2 1641.2 L1205.8 1645.5 L1207.4 1643.5 L1209.0 1643.4 L1210.6 1643.8 L1212.2 1643.7 L1213.8 1640.5 L1215.4 1641.4 L1217.0 1643.4 L1218.6 1642.9 L1220.2 1642.4 L1221.8 1641.0 L1223.4 1645.5 L1225.0 1642.7 L1226.6 1641.3 L1228.2 1644.7 L1229.8 1643.8 L1231.4 1642.0 L1233.0 1645.1 L1234.6 1643.7 L1236.2 1636.8 L1237.8 1637.2 L1239.4 1640.1 L1241.0 1640.4 L1242.6 1642.3 L1244.2 1643.2 L1245.8 1640.3 L1247.4 1641.6 L1249.0 1641.8 L1250.6 1643.0 L1252.2 1643.1 L1253.8 1641.0 L1255.4 1642.4 L1257.0 1641.0 L1258.6 1641.2 L1260.2 1645.3 L1261.8 1642.1 L1263.4 1643.0 L1265.0 1642.3 L1266.6 1641.4 L1268.2 1643.3 L1269.8 1643.3 L1271.4 1643.4 L1273.0 1642.6 L1274.6 1644.9 L1276.2 1642.6 L1277.8 1645.1 L1279.4 1644.5 L1281.0 1643.5 L1282.6 1643.8 L1284.2 1642.1 L1285.8 1644.6 L1287.4 1640.7 L1289.0 1642.3 L1290.6 1642.4 L1292.2 1644.9 L1293.8 1642.6 L1295.4 1641.8 L1297.0 1644.1 L1298.6 1641.8 L1298.6 1663.1 L1297.0 1662.2 L1295.4 1665.0 L1293.8 1663.3 L1292.2 1662.0 L1290.6 1661.5 L1289.0 1662.8 L1287.4 1665.4 L1285.8 1659.8 L1284.2 1665.5 L1282.6 1663.1 L1281.0 1664.2 L1279.4 1660.5 L1277.8 1661.1 L1276.2 1661.4 L1274.6 1662.3 L1273.0 1662.2 L1271.4 1663.3 L1269.8 1663.3 L1268.2 1663.7 L1266.6 1665.2 L1265.0 1663.9 L1263.4 1664.1 L1261.8 1662.1 L1260.2 1661.9 L1258.6 1664.1 L1257.0 1664.9 L1255.4 1663.7 L1253.8 1666.8 L1252.2 1661.4 L1250.6 1664.8 L1249.0 1663.5 L1247.4 1665.9 L1245.8 1665.9 L1244.2 1664.7 L1242.6 1662.0 L1241.0 1667.7 L1239.4 1665.6 L1237.8 1671.7 L1236.2 1669.0 L1234.6 1661.5 L1233.0 1659.9 L1231.4 1664.0 L1229.8 1661.2 L1228.2 1661.4 L1226.6 1664.8 L1225.0 1664.6 L1223.4 1660.5 L1221.8 1663.6 L1220.2 1663.5 L1218.6 1664.0 L1217.0 1663.3 L1215.4 1666.8 L1213.8 1667.5 L1212.2 1662.1 L1210.6 1663.9 L1209.0 1661.5 L1207.4 1662.9 L1205.8 1659.5 L1204.2 1663.3 L1202.6 1661.1 L1201.0 1663.0 L1199.4 1662.2 L1197.8 1661.7 L1196.2 1662.0 L1194.6 1664.7 L1193.0 1665.0 L1191.4 1663.7 L1189.8 1662.4 L1188.2 1664.5 L1186.6 1663.1 L1185.0 1664.8 L1183.4 1664.2 L1181.8 1662.8 L1180.2 1665.3 L1178.6 1666.7 L1177.0 1662.5 L1175.4 1664.1 L1173.8 1661.0 L1172.2 1663.6 L1170.6 1660.7 L1169.0 1662.0 L1167.4 1663.2 L1165.8 1661.3 L1164.2 1659.5 L1162.6 1664.1 L1161.0 1663.9 L1159.4 1665.8 L1157.8 1662.4 L1156.2 1661.9 L1154.6 1666.1 L1153.0 1661.7 L1151.4 1661.3 L1149.8 1667.1 L1148.2 1665.1 L1146.6 1662.0 L1145.0 1663.5 L1143.4 1665.8 L1141.8 1664.3 L1140.2 1668.1 L1138.6 1667.1 L1137.0 1665.5 L1135.4 1669.6 L1133.8 1669.7 L1132.2 1667.3 L1130.6 1670.7 L1129.0 1667.8 L1127.4 1671.5 L1125.8 1670.6 L1124.2 1670.3 L1122.6 1672.0 L1121.0 1663.9 L1119.4 1661.6 L1117.8 1660.5 L1116.2 1662.3 L1114.6 1660.1 L1113.0 1663.3 L1111.4 1664.4 L1109.8 1659.1 L1108.2 1661.1 L1106.6 1661.9 L1105.0 1662.6 L1103.4 1661.8 L1101.8 1663.4 L1100.2 1664.8 L1098.6 1661.6 L1097.0 1661.3 L1095.4 1663.4 L1093.8 1665.9 L1092.2 1661.9 L1090.6 1662.1 L1089.0 1665.0 L1087.4 1661.4 L1085.8 1663.7 L1084.2 1663.2 L1082.6 1663.0 L1081.0 1663.2 L1079.4 1663.0 L1077.8 1663.7 L1076.2 1666.2 L1074.6 1666.5 L1073.0 1662.5 L1071.4 1661.6 L1069.8 1664.2 L1068.2 1661.7 L1066.6 1661.6 L1065.0 1663.0 L1063.4 1664.7 L1061.8 1662.3 L1060.2 1662.8 L1058.6 1660.2 L1057.0 1663.4 L1055.4 1666.9 L1053.8 1663.4 L1052.2 1664.7 L1050.6 1667.8 L1049.0 1664.3 L1047.4 1668.6 L1045.8 1666.4 L1044.2 1664.9 L1042.6 1666.3 L1041.0 1664.9 L1039.4 1662.4 L1037.8 1662.6 L1036.2 1659.4 L1034.6 1665.3 L1033.0 1665.1 L1031.4 1667.6 L1029.8 1662.8 L1028.2 1665.4 L1026.6 1663.7 L1025.0 1664.1 L1023.4 1667.6 L1021.8 1662.4 L1020.2 1662.2 L1018.6 1665.8 L1017.0 1664.6 L1015.4 1662.4 L1013.8 1660.0 L1012.2 1665.8 L1010.6 1659.9 L1009.0 1664.5 L1007.4 1662.8 L1005.8 1662.0 L1004.2 1663.1 L1002.6 1663.0 L1001.0 1661.0 L999.4 1662.8 L997.8 1662.9 L996.2 1661.3 L994.6 1663.0 L993.0 1666.4 L991.4 1664.1 L989.8 1664.0 L988.2 1663.2 L986.6 1664.1 L985.0 1663.5 L983.4 1666.9 L981.8 1660.6 L980.2 1663.5 L978.6 1661.9 L977.0 1662.3 L975.4 1659.4 L973.8 1660.6 L972.2 1660.1 L970.6 1661.9 L969.0 1661.6 L967.4 1662.6 L965.8 1662.5 L964.2 1661.6 L962.6 1661.5 L961.0 1660.2 L959.4 1662.3 L957.8 1665.4 L956.2 1666.4 L954.6 1664.0 L953.0 1663.5 L951.4 1662.7 L949.8 1664.4 L948.2 1666.2 L946.6 1662.6 L945.0 1664.6 L943.4 1664.0 L941.8 1664.2 L940.2 1665.5 L938.6 1666.8 L937.0 1666.2 L935.4 1670.4 L933.8 1667.4 L932.2 1666.0 L930.6 1670.1 L929.0 1675.3 L927.4 1670.7 L925.8 1664.8 L924.2 1661.7 L922.6 1661.2 L921.0 1663.3 L919.4 1665.5 L917.8 1665.5 L916.2 1661.6 L914.6 1663.9 L913.0 1665.5 L911.4 1666.2 L909.8 1660.6 L908.2 1662.3 L906.6 1661.6 L905.0 1662.5 L903.4 1662.6 L901.8 1661.5 L900.2 1663.1 L898.6 1665.2 L897.0 1665.1 L895.4 1665.4 L893.8 1665.3 L892.2 1660.7 L890.6 1662.1 L889.0 1662.5 L887.4 1663.6 L885.8 1662.9 L884.2 1664.2 L882.6 1664.8 L881.0 1667.2 L879.4 1666.8 L877.8 1664.6 L876.2 1666.8 L874.6 1669.8 L873.0 1671.1 L871.4 1672.5 L869.8 1662.7 L868.2 1663.0 L866.6 1665.9 L865.0 1659.9 L863.4 1662.4 L861.8 1664.0 L860.2 1662.8 L858.6 1661.7 L857.0 1662.9 L855.4 1664.1 L853.8 1664.9 L852.2 1661.2 L850.6 1664.6 L849.0 1664.2 L847.4 1665.2 L845.8 1665.9 L844.2 1667.5 L842.6 1664.3 L841.0 1666.8 L839.4 1664.5 L837.8 1663.0 L836.2 1659.8 L834.6 1663.5 L833.0 1660.2 L831.4 1661.8 L829.8 1663.5 L828.2 1661.6 L826.6 1663.9 L825.0 1664.8 L823.4 1664.3 L821.8 1665.4 L820.2 1664.8 L818.6 1662.1 L817.0 1662.6 L815.4 1662.2 L813.8 1663.4 L812.2 1664.5 L810.6 1658.0 L809.0 1660.3 L807.4 1658.3 L805.8 1658.5 L804.2 1657.9 L802.6 1658.0 L801.0 1659.5 L799.4 1658.5 L797.8 1658.2 L796.2 1658.7 L794.6 1658.4 L793.0 1660.4 L791.4 1659.0 L789.8 1660.3 L788.2 1659.7 L786.6 1660.2 L785.0 1659.7 L783.4 1660.6 L781.8 1660.2 L780.2 1660.0 L778.6 1661.3 L777.0 1660.9 L775.4 1661.8 L773.8 1666.5 L772.2 1665.8 L770.6 1663.4 L769.0 1664.1 L767.4 1664.7 L765.8 1662.9 L764.2 1663.0 L762.6 1666.2 L761.0 1667.5 L759.4 1668.5 L757.8 1672.2 L756.2 1673.8 L754.6 1656.9 L753.0 1659.9 L751.4 1657.5 L749.8 1658.1 L748.2 1657.9 L746.6 1658.3 L745.0 1657.5 L743.4 1657.7 L741.8 1657.7 L740.2 1659.6 L738.6 1659.6 L737.0 1659.1 L735.4 1658.6 L733.8 1657.6 L732.2 1658.9 L730.6 1656.9 L729.0 1658.8 L727.4 1658.5 L725.8 1656.5 L724.2 1659.1 L722.6 1656.8 L721.0 1658.0 L719.4 1658.2 L717.8 1658.9 L716.2 1658.4 L714.6 1657.3 L713.0 1657.3 L711.4 1657.8 L709.8 1656.7 L708.2 1658.3 L706.6 1658.5 L705.0 1657.8 L703.4 1656.7 L701.8 1657.2 L700.2 1658.3 L698.6 1658.0 L697.0 1658.9 L695.4 1657.6 L693.8 1657.7 L692.2 1656.6 L690.6 1658.7 L689.0 1656.9 L687.4 1657.6 L685.8 1658.0 L684.2 1657.6 L682.6 1658.0 L681.0 1657.6 L679.4 1660.0 L677.8 1658.1 L676.2 1658.3 L674.6 1657.4 L673.0 1659.6 L671.4 1659.4 L669.8 1658.7 L668.2 1659.6 L666.6 1660.1 L665.0 1661.3 L663.4 1662.4 L661.8 1660.2 L660.2 1661.6 L658.6 1663.7 L657.0 1666.4 L655.4 1663.1 L653.8 1663.3 L652.2 1666.9 L650.6 1665.7 L649.0 1665.6 L647.4 1662.8 L645.8 1668.7 L644.2 1664.7 L642.6 1664.8 L641.0 1666.1 L639.4 1659.5 L637.8 1657.4 L636.2 1657.4 L634.6 1657.8 L633.0 1658.0 L631.4 1658.4 L629.8 1658.9 L628.2 1660.0 L626.6 1659.0 L625.0 1659.7 L623.4 1661.4 L621.8 1659.2 L620.2 1662.4 L618.6 1661.2 L617.0 1662.7 L615.4 1660.8 L613.8 1663.8 L612.2 1661.2 L610.6 1657.3 L609.0 1657.4 L607.4 1657.4 L605.8 1657.8 L604.2 1659.3 L602.6 1658.9 L601.0 1658.0 L599.4 1658.1 L597.8 1658.8 L596.2 1658.2 L594.6 1658.6 L593.0 1659.7 L591.4 1660.9 L589.8 1658.5 L588.2 1660.1 L586.6 1661.0 L585.0 1662.5 L583.4 1661.7 L581.8 1661.6 L580.2 1662.0 L578.6 1661.7 L577.0 1661.6 L575.4 1661.6 L573.8 1663.4 L572.2 1664.7 L570.6 1667.4 L569.0 1664.2 L567.4 1665.9 L565.8 1666.0 L564.2 1667.5 L562.6 1672.5 L561.0 1670.1 L559.4 1672.2 L557.8 1667.2 L556.2 1675.7 L554.6 1657.6 L553.0 1659.6 L551.4 1656.8 L549.8 1659.4 L548.2 1657.9 L546.6 1657.7 L545.0 1658.2 L543.4 1657.4 L541.8 1657.9 L540.2 1659.0 L538.6 1658.7 L537.0 1657.6 L535.4 1658.2 L533.8 1658.9 L532.2 1657.2 L530.6 1658.0 L529.0 1658.4 L527.4 1659.8 L525.8 1659.3 L524.2 1660.6 L522.6 1659.8 L521.0 1658.2 L519.4 1659.1 L517.8 1660.0 L516.2 1660.5 L514.6 1659.7 L513.0 1661.2 L511.4 1662.5 L509.8 1662.5 L508.2 1661.6 L506.6 1662.9 L505.0 1666.3 L503.4 1665.2 L501.8 1664.7 L500.2 1660.4 L498.6 1660.6 L497.0 1663.5 L495.4 1666.4 L493.8 1661.8 L492.2 1663.6 L490.6 1662.3 L489.0 1664.2 L487.4 1664.0 L485.8 1667.1 L484.2 1665.6 L482.6 1669.6 L481.0 1670.3 L479.4 1668.0 L477.8 1671.8 L476.2 1667.4 L474.6 1669.7 L473.0 1669.8 L471.4 1676.6 L469.8 1656.9 L468.2 1656.0 L466.6 1658.6 L465.0 1658.5 L463.4 1656.9 L461.8 1656.8 L460.2 1657.6 L458.6 1656.9 L457.0 1657.3 L455.4 1657.9 L453.8 1657.7 L452.2 1656.4 L450.6 1658.9 L449.0 1659.8 L447.4 1658.3 L445.8 1656.8 L444.2 1658.8 L442.6 1656.5 L441.0 1657.5 L439.4 1657.1 L437.8 1656.4 L436.2 1657.0 L434.6 1659.2 L433.0 1659.6 L431.4 1659.1 L429.8 1658.9 L428.2 1659.9 L426.6 1658.5 L425.0 1657.4 L423.4 1659.3 L421.8 1657.9 L420.2 1661.9 L418.6 1658.2 L417.0 1660.5 L415.4 1660.3 L413.8 1661.2 L412.2 1662.9 L410.6 1660.5 L409.0 1661.6 L407.4 1664.3 L405.8 1665.1 L404.2 1663.8 L402.6 1661.7 L401.0 1666.6 L399.4 1663.2 L397.8 1663.8 L396.2 1670.4 L394.6 1666.1 L393.0 1663.6 L391.4 1664.4 L389.8 1669.1 L388.2 1668.1 L386.6 1667.4 L385.0 1657.3 L383.4 1659.1 L381.8 1657.9 L380.2 1659.7 L378.6 1658.4 L377.0 1661.2 L375.4 1659.7 L373.8 1660.9 L372.2 1659.0 L370.6 1658.8 L369.0 1660.8 L367.4 1661.9 L365.8 1662.4 L364.2 1660.5 L362.6 1662.1 L361.0 1660.1 L359.4 1664.7 L357.8 1659.3 L356.2 1657.0 L354.6 1659.0 L353.0 1657.1 L351.4 1657.2 L349.8 1657.7 L348.2 1656.6 L346.6 1659.1 L345.0 1659.0 L343.4 1657.8 L341.8 1658.1 L340.2 1658.9 L338.6 1658.3 L337.0 1659.1 L335.4 1657.9 L333.8 1658.2 L332.2 1657.5 L330.6 1657.5 L329.0 1659.0 L327.4 1659.1 L325.8 1660.7 L324.2 1660.0 L322.6 1661.1 L321.0 1661.7 L319.4 1659.3 L317.8 1663.6 L316.2 1664.3 L314.6 1661.8 L313.0 1662.3 L311.4 1665.3 L309.8 1663.3 L308.2 1662.8 L306.6 1663.4 L305.0 1664.1 L303.4 1662.7 L301.8 1667.5 L300.2 1657.8 L298.6 1658.6 L297.0 1656.9 L295.4 1656.9 L293.8 1658.5 L292.2 1659.3 L290.6 1657.8 L289.0 1658.5 L287.4 1657.9 L285.8 1657.6 L284.2 1657.7 L282.6 1658.6 L281.0 1658.4 L279.4 1658.5 L277.8 1659.6 L276.2 1659.1 L274.6 1659.2 L273.0 1657.9 L271.4 1656.8 L269.8 1658.9 L268.2 1660.2 L266.6 1657.8 L265.0 1656.8 L263.4 1658.6 L261.8 1659.6 L260.2 1658.1 L258.6 1657.7 L257.0 1658.2 L255.4 1658.3 L253.8 1657.5 L252.2 1658.2 L250.6 1657.9 L249.0 1658.2 L247.4 1657.2 L245.8 1658.8 L244.2 1656.9 L242.6 1657.8 L241.0 1658.4 L239.4 1656.2 L237.8 1656.4 L236.2 1656.5 L234.6 1658.0 L233.0 1658.7 L231.4 1657.3 L229.8 1658.4 L228.2 1658.6 L226.6 1656.6 L225.0 1657.5 L223.4 1656.7 L221.8 1658.1 L220.2 1657.2 L218.6 1659.8 L217.0 1657.4 L215.4 1658.0 L213.8 1657.4 L212.2 1657.2 L210.6 1657.5 L209.0 1658.7 L207.4 1659.5 L205.8 1659.5 L204.2 1660.0 L202.6 1660.2 L201.0 1661.0 L199.4 1659.3 L197.8 1660.0 L196.2 1660.7 L194.6 1663.1 L193.0 1660.9 L191.4 1662.2 L189.8 1662.0 L188.2 1662.3 L186.6 1657.2 L185.0 1658.1 L183.4 1657.3 L181.8 1658.1 L180.2 1656.5 L178.6 1658.4 L177.0 1658.1 L175.4 1658.0 L173.8 1659.3 L172.2 1656.6 L170.6 1658.4 L169.0 1656.3 L167.4 1656.7 L165.8 1656.9 L164.2 1657.8 L162.6 1657.5 L161.0 1656.9 Z"/>
<path fill="#1e1f2b" d="M161.0 1695.8 L162.6 1695.9 L164.2 1695.7 L165.8 1695.5 L167.4 1696.7 L169.0 1696.5 L170.6 1697.6 L172.2 1697.2 L173.8 1695.8 L175.4 1695.5 L177.0 1697.4 L178.6 1697.1 L180.2 1697.7 L181.8 1695.9 L183.4 1696.1 L185.0 1697.5 L186.6 1696.0 L188.2 1692.8 L189.8 1693.8 L191.4 1691.5 L193.0 1692.2 L194.6 1692.0 L196.2 1692.5 L197.8 1694.7 L199.4 1694.1 L201.0 1695.6 L202.6 1695.1 L204.2 1695.2 L205.8 1695.3 L207.4 1696.4 L209.0 1696.2 L210.6 1695.7 L212.2 1697.2 L213.8 1695.7 L215.4 1696.4 L217.0 1695.4 L218.6 1697.7 L220.2 1697.8 L221.8 1696.1 L223.4 1697.0 L225.0 1697.6 L226.6 1697.7 L228.2 1696.2 L229.8 1697.6 L231.4 1697.3 L233.0 1697.7 L234.6 1697.5 L236.2 1697.3 L237.8 1695.7 L239.4 1696.3 L241.0 1695.9 L242.6 1696.6 L244.2 1697.2 L245.8 1697.8 L247.4 1696.1 L249.0 1696.4 L250.6 1696.6 L252.2 1696.6 L253.8 1697.6 L255.4 1697.0 L257.0 1695.4 L258.6 1696.1 L260.2 1696.3 L261.8 1695.7 L263.4 1697.5 L265.0 1697.0 L266.6 1695.6 L268.2 1697.4 L269.8 1697.3 L271.4 1696.7 L273.0 1696.8 L274.6 1697.0 L276.2 1696.0 L277.8 1697.2 L279.4 1695.4 L281.0 1697.7 L282.6 1695.4 L284.2 1697.7 L285.8 1695.8 L287.4 1697.2 L289.0 1697.6 L290.6 1695.5 L292.2 1695.4 L293.8 1696.9 L295.4 1695.9 L297.0 1697.0 L298.6 1696.0 L300.2 1697.4 L301.8 1690.6 L303.4 1690.6 L305.0 1691.3 L306.6 1692.5 L308.2 1691.0 L309.8 1691.5 L311.4 1691.8 L313.0 1693.3 L314.6 1692.9 L316.2 1692.4 L317.8 1692.2 L319.4 1695.0 L321.0 1693.8 L322.6 1695.5 L324.2 1695.6 L325.8 1694.8 L327.4 1695.1 L329.0 1696.7 L330.6 1696.1 L332.2 1695.7 L333.8 1695.6 L335.4 1697.2 L337.0 1696.1 L338.6 1696.8 L340.2 1696.8 L341.8 1697.1 L343.4 1697.6 L345.0 1696.7 L346.6 1697.4 L348.2 1695.9 L349.8 1695.4 L351.4 1696.8 L353.0 1697.6 L354.6 1696.6 L356.2 1696.9 L357.8 1697.8 L359.4 1692.8 L361.0 1690.2 L362.6 1691.7 L364.2 1692.2 L365.8 1693.7 L367.4 1693.6 L369.0 1694.6 L370.6 1693.0 L372.2 1694.2 L373.8 1695.1 L375.4 1695.3 L377.0 1695.5 L378.6 1695.3 L380.2 1696.5 L381.8 1695.4 L383.4 1696.0 L385.0 1696.6 L386.6 1682.1 L388.2 1685.8 L389.8 1686.7 L391.4 1685.8 L393.0 1687.9 L394.6 1686.3 L396.2 1688.1 L397.8 1690.7 L399.4 1690.9 L401.0 1688.6 L402.6 1690.9 L404.2 1693.1 L405.8 1691.3 L407.4 1692.9 L409.0 1692.2 L410.6 1694.4 L412.2 1694.2 L413.8 1694.0 L415.4 1693.6 L417.0 1693.2 L418.6 1693.8 L420.2 1695.6 L421.8 1694.6 L423.4 1696.2 L425.0 1696.8 L426.6 1695.3 L428.2 1695.6 L429.8 1695.4 L431.4 1696.5 L433.0 1696.9 L434.6 1695.8 L436.2 1695.4 L437.8 1696.4 L439.4 1697.2 L441.0 1696.4 L442.6 1696.2 L444.2 1697.3 L445.8 1696.6 L447.4 1697.2 L449.0 1695.5 L450.6 1697.1 L452.2 1697.1 L453.8 1695.4 L455.4 1695.6 L457.0 1697.7 L458.6 1697.8 L460.2 1695.8 L461.8 1696.7 L463.4 1696.8 L465.0 1695.8 L466.6 1696.5 L468.2 1697.8 L469.8 1697.6 L471.4 1683.5 L473.0 1681.4 L474.6 1681.3 L476.2 1683.2 L477.8 1685.5 L479.4 1683.6 L481.0 1685.6 L482.6 1685.0 L484.2 1686.2 L485.8 1689.1 L487.4 1688.0 L489.0 1689.8 L490.6 1691.6 L492.2 1691.7 L493.8 1690.0 L495.4 1690.1 L497.0 1691.7 L498.6 1693.4 L500.2 1693.6 L501.8 1689.2 L503.4 1691.0 L505.0 1690.8 L506.6 1690.9 L508.2 1693.1 L509.8 1692.0 L511.4 1691.9 L513.0 1694.1 L514.6 1692.9 L516.2 1693.9 L517.8 1694.3 L519.4 1694.7 L521.0 1696.1 L522.6 1694.9 L524.2 1696.3 L525.8 1696.5 L527.4 1695.2 L529.0 1695.5 L530.6 1695.8 L532.2 1696.9 L533.8 1696.1 L535.4 1697.2 L537.0 1696.8 L538.6 1696.2 L540.2 1697.6 L541.8 1696.3 L543.4 1695.8 L545.0 1697.4 L546.6 1697.1 L548.2 1697.7 L549.8 1695.7 L551.4 1695.6 L553.0 1695.6 L554.6 1696.1 L556.2 1682.8 L557.8 1686.0 L559.4 1683.2 L561.0 1686.9 L562.6 1689.1 L564.2 1687.0 L565.8 1688.1 L567.4 1688.3 L569.0 1687.9 L570.6 1687.9 L572.2 1689.8 L573.8 1692.4 L575.4 1692.9 L577.0 1689.9 L578.6 1693.4 L580.2 1691.7 L581.8 1694.3 L583.4 1693.5 L585.0 1693.5 L586.6 1692.9 L588.2 1694.7 L589.8 1694.4 L591.4 1694.5 L593.0 1695.4 L594.6 1694.9 L596.2 1695.6 L597.8 1695.6 L599.4 1695.4 L601.0 1696.4 L602.6 1696.3 L604.2 1696.8 L605.8 1696.1 L607.4 1696.5 L609.0 1696.1 L610.6 1695.9 L612.2 1691.8 L613.8 1692.9 L615.4 1694.4 L617.0 1694.5 L618.6 1693.5 L620.2 1694.9 L621.8 1694.3 L623.4 1694.1 L625.0 1695.1 L626.6 1695.4 L628.2 1695.5 L629.8 1695.5 L631.4 1696.2 L633.0 1695.7 L634.6 1696.0 L636.2 1696.7 L637.8 1696.0 L639.4 1696.8 L641.0 1686.5 L642.6 1684.4 L644.2 1685.8 L645.8 1687.4 L647.4 1688.2 L649.0 1687.8 L650.6 1687.6 L652.2 1688.2 L653.8 1692.4 L655.4 1689.3 L657.0 1692.8 L658.6 1690.8 L660.2 1693.4 L661.8 1691.3 L663.4 1691.8 L665.0 1693.0 L666.6 1694.4 L668.2 1694.0 L669.8 1695.4 L671.4 1693.8 L673.0 1695.5 L674.6 1695.0 L676.2 1695.2 L677.8 1695.7 L679.4 1695.5 L681.0 1695.5 L682.6 1696.7 L684.2 1696.2 L685.8 1695.4 L687.4 1697.1 L689.0 1696.5 L690.6 1696.9 L692.2 1696.9 L693.8 1697.0 L695.4 1697.4 L697.0 1696.5 L698.6 1696.0 L700.2 1697.3 L701.8 1695.4 L703.4 1696.4 L705.0 1696.8 L706.6 1696.2 L708.2 1697.1 L709.8 1697.4 L711.4 1695.5 L713.0 1695.9 L714.6 1696.6 L716.2 1696.2 L717.8 1695.7 L719.4 1695.5 L721.0 1697.0 L722.6 1696.1 L724.2 1695.9 L725.8 1697.2 L727.4 1695.9 L729.0 1696.4 L730.6 1695.8 L732.2 1695.9 L733.8 1697.2 L735.4 1696.2 L737.0 1696.2 L738.6 1696.9 L740.2 1696.8 L741.8 1697.4 L743.4 1697.5 L745.0 1696.4 L746.6 1695.4 L748.2 1697.2 L749.8 1695.8 L751.4 1695.9 L753.0 1696.9 L754.6 1697.8 L756.2 1684.2 L757.8 1687.7 L759.4 1685.0 L761.0 1686.8 L762.6 1689.5 L764.2 1689.9 L765.8 1687.2 L767.4 1690.5 L769.0 1687.7 L770.6 1691.8 L772.2 1690.9 L773.8 1692.0 L775.4 1692.0 L777.0 1692.0 L778.6 1691.3 L780.2 1691.7 L781.8 1692.8 L783.4 1694.7 L785.0 1694.9 L786.6 1695.2 L788.2 1693.8 L789.8 1695.2 L791.4 1694.6 L793.0 1696.1 L794.6 1695.7 L796.2 1695.1 L797.8 1695.5 L799.4 1695.7 L801.0 1695.8 L802.6 1695.9 L804.2 1697.0 L805.8 1696.2 L807.4 1695.9 L809.0 1697.1 L810.6 1695.5 L812.2 1690.8 L813.8 1692.0 L815.4 1690.3 L817.0 1690.5 L818.6 1690.6 L820.2 1693.1 L821.8 1689.8 L823.4 1692.8 L825.0 1690.2 L826.6 1692.9 L828.2 1689.1 L829.8 1693.5 L831.4 1689.9 L833.0 1689.3 L834.6 1690.5 L836.2 1691.5 L837.8 1692.9 L839.4 1690.9 L841.0 1691.2 L842.6 1689.6 L844.2 1691.9 L845.8 1689.9 L847.4 1692.3 L849.0 1689.5 L850.6 1693.1 L852.2 1693.1 L853.8 1692.3 L855.4 1691.6 L857.0 1689.2 L858.6 1689.4 L860.2 1690.0 L861.8 1693.4 L863.4 1691.4 L865.0 1693.4 L866.6 1694.0 L868.2 1691.8 L869.8 1692.6 L871.4 1689.4 L873.0 1686.9 L874.6 1687.5 L876.2 1690.1 L877.8 1689.1 L879.4 1690.1 L881.0 1690.1 L882.6 1690.8 L884.2 1691.1 L885.8 1689.6 L887.4 1691.6 L889.0 1691.2 L890.6 1689.7 L892.2 1690.9 L893.8 1693.7 L895.4 1692.9 L897.0 1689.9 L898.6 1691.2 L900.2 1691.5 L901.8 1691.5 L903.4 1689.4 L905.0 1689.7 L906.6 1690.7 L908.2 1692.5 L909.8 1691.4 L911.4 1691.4 L913.0 1692.7 L914.6 1692.2 L916.2 1693.0 L917.8 1693.0 L919.4 1694.0 L921.0 1692.0 L922.6 1691.3 L924.2 1691.4 L925.8 1691.7 L927.4 1686.9 L929.0 1685.5 L930.6 1686.2 L932.2 1687.4 L933.8 1689.0 L935.4 1688.7 L937.0 1686.3 L938.6 1687.9 L940.2 1690.1 L941.8 1688.8 L943.4 1687.6 L945.0 1690.0 L946.6 1689.1 L948.2 1690.7 L949.8 1690.2 L951.4 1690.6 L953.0 1690.7 L954.6 1690.9 L956.2 1692.0 L957.8 1689.7 L959.4 1691.0 L961.0 1692.2 L962.6 1691.2 L964.2 1693.5 L965.8 1689.4 L967.4 1692.7 L969.0 1694.0 L970.6 1693.1 L972.2 1689.5 L973.8 1690.3 L975.4 1691.2 L977.0 1693.2 L978.6 1693.4 L980.2 1691.0 L981.8 1692.1 L983.4 1689.9 L985.0 1688.8 L986.6 1689.3 L988.2 1689.2 L989.8 1690.0 L991.4 1691.8 L993.0 1690.8 L994.6 1692.6 L996.2 1692.7 L997.8 1691.5 L999.4 1690.0 L1001.0 1693.8 L1002.6 1690.1 L1004.2 1690.6 L1005.8 1692.5 L1007.4 1690.7 L1009.0 1691.5 L1010.6 1694.1 L1012.2 1693.4 L1013.8 1689.6 L1015.4 1690.1 L1017.0 1691.1 L1018.6 1690.0 L1020.2 1693.1 L1021.8 1689.6 L1023.4 1690.6 L1025.0 1691.1 L1026.6 1691.1 L1028.2 1692.0 L1029.8 1693.9 L1031.4 1690.6 L1033.0 1693.6 L1034.6 1693.3 L1036.2 1693.0 L1037.8 1691.6 L1039.4 1690.4 L1041.0 1685.2 L1042.6 1689.5 L1044.2 1689.5 L1045.8 1688.2 L1047.4 1689.9 L1049.0 1688.0 L1050.6 1691.2 L1052.2 1690.8 L1053.8 1689.5 L1055.4 1690.6 L1057.0 1692.9 L1058.6 1693.6 L1060.2 1690.6 L1061.8 1691.1 L1063.4 1690.5 L1065.0 1693.2 L1066.6 1690.7 L1068.2 1689.4 L1069.8 1693.5 L1071.4 1692.3 L1073.0 1690.3 L1074.6 1693.2 L1076.2 1693.3 L1077.8 1689.5 L1079.4 1690.8 L1081.0 1689.3 L1082.6 1689.5 L1084.2 1690.5 L1085.8 1691.1 L1087.4 1690.8 L1089.0 1691.7 L1090.6 1694.0 L1092.2 1691.8 L1093.8 1690.3 L1095.4 1691.0 L1097.0 1691.3 L1098.6 1693.6 L1100.2 1690.1 L1101.8 1691.1 L1103.4 1692.8 L1105.0 1691.5 L1106.6 1691.8 L1108.2 1690.0 L1109.8 1691.2 L1111.4 1691.9 L1113.0 1689.3 L1114.6 1692.5 L1116.2 1691.4 L1117.8 1693.8 L1119.4 1693.0 L1121.0 1692.8 L1122.6 1684.1 L1124.2 1686.0 L1125.8 1685.1 L1127.4 1686.7 L1129.0 1688.0 L1130.6 1689.1 L1132.2 1687.7 L1133.8 1687.7 L1135.4 1690.6 L1137.0 1687.7 L1138.6 1690.2 L1140.2 1691.5 L1141.8 1690.3 L1143.4 1690.4 L1145.0 1691.8 L1146.6 1690.2 L1148.2 1692.1 L1149.8 1691.0 L1151.4 1691.7 L1153.0 1690.5 L1154.6 1693.9 L1156.2 1689.9 L1157.8 1691.0 L1159.4 1689.2 L1161.0 1690.4 L1162.6 1692.3 L1164.2 1692.9 L1165.8 1691.2 L1167.4 1689.7 L1169.0 1689.3 L1170.6 1692.0 L1172.2 1689.5 L1173.8 1691.2 L1175.4 1691.0 L1177.0 1693.9 L1178.6 1689.2 L1180.2 1691.0 L1181.8 1688.4 L1183.4 1690.7 L1185.0 1689.3 L1186.6 1691.7 L1188.2 1690.0 L1189.8 1690.4 L1191.4 1690.0 L1193.0 1690.0 L1194.6 1691.5 L1196.2 1693.4 L1197.8 1692.0 L1199.4 1690.3 L1201.0 1690.8 L1202.6 1694.0 L1204.2 1693.4 L1205.8 1691.7 L1207.4 1693.1 L1209.0 1691.5 L1210.6 1690.3 L1212.2 1694.1 L1213.8 1692.8 L1215.4 1691.8 L1217.0 1693.6 L1218.6 1689.9 L1220.2 1690.4 L1221.8 1691.2 L1223.4 1690.4 L1225.0 1689.6 L1226.6 1691.2 L1228.2 1692.4 L1229.8 1693.2 L1231.4 1692.9 L1233.0 1692.6 L1234.6 1693.1 L1236.2 1688.8 L1237.8 1685.5 L1239.4 1687.9 L1241.0 1687.0 L1242.6 1690.7 L1244.2 1688.8 L1245.8 1691.7 L1247.4 1689.6 L1249.0 1689.6 L1250.6 1692.6 L1252.2 1690.5 L1253.8 1691.9 L1255.4 1689.8 L1257.0 1690.0 L1258.6 1693.4 L1260.2 1690.8 L1261.8 1689.9 L1263.4 1690.1 L1265.0 1692.3 L1266.6 1692.9 L1268.2 1692.4 L1269.8 1691.7 L1271.4 1693.8 L1273.0 1693.8 L1274.6 1689.2 L1276.2 1692.9 L1277.8 1691.7 L1279.4 1693.5 L1281.0 1692.8 L1282.6 1692.2 L1284.2 1690.7 L1285.8 1692.8 L1287.4 1692.3 L1289.0 1691.3 L1290.6 1691.9 L1292.2 1689.3 L1293.8 1693.9 L1295.4 1690.1 L1297.0 1689.6 L1298.6 1693.4 L1298.6 1708.2 L1297.0 1712.7 L1295.4 1714.1 L1293.8 1710.6 L1292.2 1716.0 L1290.6 1711.9 L1289.0 1712.2 L1287.4 1711.4 L1285.8 1711.2 L1284.2 1711.7 L1282.6 1712.4 L1281.0 1710.8 L1279.4 1710.2 L1277.8 1713.0 L1276.2 1709.6 L1274.6 1713.8 L1273.0 1709.0 L1271.4 1710.8 L1269.8 1710.4 L1268.2 1710.3 L1266.6 1711.3 L1265.0 1712.1 L1263.4 1712.9 L1261.8 1711.7 L1260.2 1711.3 L1258.6 1708.7 L1257.0 1713.2 L1255.4 1714.2 L1253.8 1710.3 L1252.2 1713.4 L1250.6 1709.9 L1249.0 1715.1 L1247.4 1712.8 L1245.8 1711.4 L1244.2 1713.5 L1242.6 1712.2 L1241.0 1719.1 L1239.4 1716.8 L1237.8 1719.6 L1236.2 1713.6 L1234.6 1710.6 L1233.0 1712.3 L1231.4 1709.9 L1229.8 1710.7 L1228.2 1712.6 L1226.6 1711.7 L1225.0 1711.9 L1223.4 1713.5 L1221.8 1713.5 L1220.2 1711.2 L1218.6 1712.2 L1217.0 1710.7 L1215.4 1712.4 L1213.8 1709.0 L1212.2 1708.3 L1210.6 1713.8 L1209.0 1709.9 L1207.4 1709.6 L1205.8 1711.1 L1204.2 1711.1 L1202.6 1708.0 L1201.0 1713.9 L1199.4 1712.3 L1197.8 1713.1 L1196.2 1710.1 L1194.6 1713.2 L1193.0 1714.6 L1191.4 1714.6 L1189.8 1711.0 L1188.2 1711.1 L1186.6 1710.0 L1185.0 1714.3 L1183.4 1711.8 L1181.8 1716.9 L1180.2 1712.1 L1178.6 1712.0 L1177.0 1709.8 L1175.4 1710.2 L1173.8 1710.9 L1172.2 1715.9 L1170.6 1711.2 L1169.0 1716.0 L1167.4 1711.2 L1165.8 1710.0 L1164.2 1709.6 L1162.6 1709.7 L1161.0 1714.8 L1159.4 1712.9 L1157.8 1711.1 L1156.2 1713.5 L1154.6 1709.4 L1153.0 1713.4 L1151.4 1712.4 L1149.8 1711.5 L1148.2 1712.0 L1146.6 1713.4 L1145.0 1710.2 L1143.4 1712.9 L1141.8 1713.8 L1140.2 1711.7 L1138.6 1711.5 L1137.0 1714.9 L1135.4 1712.0 L1133.8 1714.7 L1132.2 1715.9 L1130.6 1713.1 L1129.0 1715.5 L1127.4 1717.0 L1125.8 1720.5 L1124.2 1716.3 L1122.6 1717.0 L1121.0 1710.5 L1119.4 1710.0 L1117.8 1708.1 L1116.2 1711.0 L1114.6 1709.0 L1113.0 1712.6 L1111.4 1711.8 L1109.8 1712.3 L1108.2 1715.1 L1106.6 1710.7 L1105.0 1710.2 L1103.4 1711.7 L1101.8 1714.2 L1100.2 1710.9 L1098.6 1708.3 L1097.0 1713.0 L1095.4 1713.7 L1093.8 1715.0 L1092.2 1712.3 L1090.6 1708.7 L1089.0 1710.9 L1087.4 1712.9 L1085.8 1710.6 L1084.2 1711.4 L1082.6 1715.4 L1081.0 1713.3 L1079.4 1712.8 L1077.8 1714.3 L1076.2 1709.7 L1074.6 1709.3 L1073.0 1710.9 L1071.4 1712.3 L1069.8 1710.3 L1068.2 1715.2 L1066.6 1711.4 L1065.0 1711.1 L1063.4 1714.1 L1061.8 1711.9 L1060.2 1711.4 L1058.6 1709.2 L1057.0 1711.4 L1055.4 1713.1 L1053.8 1714.3 L1052.2 1711.6 L1050.6 1711.8 L1049.0 1712.6 L1047.4 1711.0 L1045.8 1717.5 L1044.2 1714.1 L1042.6 1715.6 L1041.0 1720.6 L1039.4 1714.6 L1037.8 1712.3 L1036.2 1709.1 L1034.6 1711.5 L1033.0 1708.5 L1031.4 1710.7 L1029.8 1708.3 L1028.2 1710.8 L1026.6 1712.4 L1025.0 1710.2 L1023.4 1711.7 L1021.8 1712.7 L1020.2 1711.3 L1018.6 1711.4 L1017.0 1713.0 L1015.4 1715.3 L1013.8 1712.7 L1012.2 1709.5 L1010.6 1709.1 L1009.0 1711.3 L1007.4 1712.0 L1005.8 1711.4 L1004.2 1710.5 L1002.6 1711.3 L1001.0 1710.6 L999.4 1713.0 L997.8 1711.7 L996.2 1709.1 L994.6 1712.1 L993.0 1713.0 L991.4 1712.3 L989.8 1713.6 L988.2 1712.3 L986.6 1715.8 L985.0 1715.3 L983.4 1714.2 L981.8 1711.8 L980.2 1710.6 L978.6 1709.3 L977.0 1709.9 L975.4 1710.7 L973.8 1710.7 L972.2 1715.8 L970.6 1710.2 L969.0 1708.1 L967.4 1709.0 L965.8 1712.2 L964.2 1708.2 L962.6 1710.0 L961.0 1712.0 L959.4 1711.8 L957.8 1715.6 L956.2 1709.5 L954.6 1710.3 L953.0 1712.2 L951.4 1713.7 L949.8 1714.0 L948.2 1714.7 L946.6 1712.1 L945.0 1714.2 L943.4 1715.9 L941.8 1717.0 L940.2 1714.9 L938.6 1716.8 L937.0 1719.1 L935.4 1712.3 L933.8 1715.8 L932.2 1714.7 L930.6 1719.9 L929.0 1719.7 L927.4 1716.8 L925.8 1710.5 L924.2 1713.3 L922.6 1712.5 L921.0 1710.7 L919.4 1709.3 L917.8 1710.0 L916.2 1710.3 L914.6 1709.2 L913.0 1710.7 L911.4 1713.7 L909.8 1710.1 L908.2 1712.3 L906.6 1710.8 L905.0 1714.0 L903.4 1712.0 L901.8 1713.7 L900.2 1709.9 L898.6 1711.2 L897.0 1715.0 L895.4 1710.0 L893.8 1710.5 L892.2 1711.6 L890.6 1714.7 L889.0 1712.5 L887.4 1712.4 L885.8 1712.0 L884.2 1712.7 L882.6 1710.3 L881.0 1713.1 L879.4 1712.5 L877.8 1716.1 L876.2 1713.1 L874.6 1716.6 L873.0 1714.4 L871.4 1712.4 L869.8 1710.4 L868.2 1713.2 L866.6 1710.4 L865.0 1710.7 L863.4 1712.2 L861.8 1710.5 L860.2 1711.3 L858.6 1713.9 L857.0 1714.0 L855.4 1710.6 L853.8 1712.6 L852.2 1710.8 L850.6 1708.9 L849.0 1711.6 L847.4 1711.7 L845.8 1712.8 L844.2 1711.2 L842.6 1713.5 L841.0 1711.9 L839.4 1712.0 L837.8 1711.6 L836.2 1710.7 L834.6 1713.3 L833.0 1714.3 L831.4 1711.5 L829.8 1708.2 L828.2 1713.1 L826.6 1711.6 L825.0 1711.5 L823.4 1711.9 L821.8 1713.5 L820.2 1708.4 L818.6 1714.1 L817.0 1714.2 L815.4 1712.7 L813.8 1710.1 L812.2 1713.7 L810.6 1708.5 L809.0 1705.6 L807.4 1708.4 L805.8 1706.5 L804.2 1706.9 L802.6 1708.3 L801.0 1706.7 L799.4 1708.0 L797.8 1707.2 L796.2 1709.0 L794.6 1706.6 L793.0 1707.0 L791.4 1709.7 L789.8 1707.1 L788.2 1709.8 L786.6 1708.0 L785.0 1709.3 L783.4 1708.5 L781.8 1708.9 L780.2 1712.7 L778.6 1710.9 L777.0 1712.2 L775.4 1712.7 L773.8 1711.2 L772.2 1710.8 L770.6 1713.0 L769.0 1714.0 L767.4 1714.7 L765.8 1717.6 L764.2 1712.8 L762.6 1714.9 L761.0 1715.0 L759.4 1716.8 L757.8 1714.8 L756.2 1715.6 L754.6 1704.7 L753.0 1706.6 L751.4 1708.2 L749.8 1708.5 L748.2 1705.4 L746.6 1708.7 L745.0 1706.6 L743.4 1705.6 L741.8 1706.3 L740.2 1706.3 L738.6 1706.1 L737.0 1707.2 L735.4 1706.7 L733.8 1706.5 L732.2 1707.1 L730.6 1706.9 L729.0 1706.2 L727.4 1706.4 L725.8 1705.8 L724.2 1706.2 L722.6 1707.9 L721.0 1706.7 L719.4 1707.2 L717.8 1707.2 L716.2 1706.9 L714.6 1707.3 L713.0 1707.0 L711.4 1708.2 L709.8 1705.9 L708.2 1706.5 L706.6 1707.1 L705.0 1706.5 L703.4 1706.4 L701.8 1708.7 L700.2 1706.4 L698.6 1706.9 L697.0 1705.9 L695.4 1706.3 L693.8 1706.3 L692.2 1706.4 L690.6 1705.3 L689.0 1707.7 L687.4 1705.2 L685.8 1707.0 L684.2 1707.9 L682.6 1705.9 L681.0 1708.7 L679.4 1707.3 L677.8 1707.1 L676.2 1708.2 L674.6 1708.5 L673.0 1708.6 L671.4 1709.5 L669.8 1708.7 L668.2 1707.8 L666.6 1708.0 L665.0 1709.0 L663.4 1710.0 L661.8 1712.7 L660.2 1710.7 L658.6 1713.5 L657.0 1711.0 L655.4 1713.3 L653.8 1711.2 L652.2 1714.6 L650.6 1716.6 L649.0 1714.6 L647.4 1713.6 L645.8 1718.3 L644.2 1717.5 L642.6 1718.9 L641.0 1715.7 L639.4 1706.1 L637.8 1707.9 L636.2 1706.2 L634.6 1706.1 L633.0 1706.9 L631.4 1706.3 L629.8 1707.7 L628.2 1708.8 L626.6 1707.0 L625.0 1708.7 L623.4 1710.2 L621.8 1708.4 L620.2 1708.8 L618.6 1710.9 L617.0 1708.1 L615.4 1708.3 L613.8 1709.0 L612.2 1711.2 L610.6 1707.0 L609.0 1706.7 L607.4 1707.6 L605.8 1706.4 L604.2 1707.2 L602.6 1706.1 L601.0 1705.9 L599.4 1706.8 L597.8 1707.9 L596.2 1708.4 L594.6 1708.2 L593.0 1706.8 L591.4 1708.2 L589.8 1710.0 L588.2 1707.3 L586.6 1708.8 L585.0 1708.2 L583.4 1709.5 L581.8 1708.7 L580.2 1713.0 L578.6 1711.1 L577.0 1715.5 L575.4 1709.1 L573.8 1711.1 L572.2 1714.9 L570.6 1714.3 L569.0 1716.5 L567.4 1716.7 L565.8 1717.4 L564.2 1716.8 L562.6 1712.3 L561.0 1713.8 L559.4 1719.7 L557.8 1716.1 L556.2 1718.2 L554.6 1706.3 L553.0 1708.7 L551.4 1706.8 L549.8 1706.5 L548.2 1706.0 L546.6 1706.2 L545.0 1706.5 L543.4 1706.4 L541.8 1707.2 L540.2 1705.5 L538.6 1707.1 L537.0 1706.9 L535.4 1706.6 L533.8 1708.1 L532.2 1707.1 L530.6 1707.1 L529.0 1706.9 L527.4 1707.5 L525.8 1705.8 L524.2 1706.2 L522.6 1709.4 L521.0 1707.8 L519.4 1709.4 L517.8 1709.7 L516.2 1708.8 L514.6 1711.1 L513.0 1710.1 L511.4 1710.9 L509.8 1711.9 L508.2 1710.0 L506.6 1714.2 L505.0 1712.4 L503.4 1710.3 L501.8 1712.2 L500.2 1709.2 L498.6 1708.3 L497.0 1711.1 L495.4 1713.7 L493.8 1713.4 L492.2 1712.4 L490.6 1709.6 L489.0 1712.1 L487.4 1715.5 L485.8 1713.5 L484.2 1716.3 L482.6 1716.7 L481.0 1716.3 L479.4 1722.6 L477.8 1717.8 L476.2 1719.4 L474.6 1718.4 L473.0 1720.9 L471.4 1721.7 L469.8 1706.1 L468.2 1705.4 L466.6 1707.5 L465.0 1706.3 L463.4 1706.7 L461.8 1707.1 L460.2 1707.2 L458.6 1705.1 L457.0 1705.2 L455.4 1708.2 L453.8 1708.7 L452.2 1707.0 L450.6 1705.4 L449.0 1707.6 L447.4 1705.8 L445.8 1705.7 L444.2 1705.8 L442.6 1707.7 L441.0 1705.9 L439.4 1705.6 L437.8 1705.8 L436.2 1707.5 L434.6 1706.6 L433.0 1706.3 L431.4 1707.2 L429.8 1706.7 L428.2 1708.3 L426.6 1708.4 L425.0 1706.7 L423.4 1707.0 L421.8 1707.3 L420.2 1706.6 L418.6 1709.2 L417.0 1710.7 L415.4 1708.7 L413.8 1709.0 L412.2 1710.1 L410.6 1709.5 L409.0 1712.7 L407.4 1708.9 L405.8 1713.8 L404.2 1710.1 L402.6 1713.4 L401.0 1713.1 L399.4 1710.4 L397.8 1710.8 L396.2 1717.1 L394.6 1713.9 L393.0 1718.1 L391.4 1717.5 L389.8 1719.2 L388.2 1719.6 L386.6 1719.8 L385.0 1706.5 L383.4 1708.1 L381.8 1706.7 L380.2 1706.1 L378.6 1708.4 L377.0 1708.4 L375.4 1709.0 L373.8 1707.9 L372.2 1708.4 L370.6 1711.6 L369.0 1709.7 L367.4 1709.5 L365.8 1710.5 L364.2 1711.7 L362.6 1712.6 L361.0 1712.8 L359.4 1712.0 L357.8 1705.2 L356.2 1706.5 L354.6 1707.1 L353.0 1705.4 L351.4 1706.6 L349.8 1707.2 L348.2 1707.0 L346.6 1706.6 L345.0 1705.7 L343.4 1705.0 L341.8 1705.3 L340.2 1705.7 L338.6 1706.3 L337.0 1708.1 L335.4 1705.9 L333.8 1707.2 L332.2 1708.2 L330.6 1707.5 L329.0 1706.7 L327.4 1709.1 L325.8 1707.8 L324.2 1706.6 L322.6 1708.9 L321.0 1710.2 L319.4 1708.4 L317.8 1711.4 L316.2 1711.8 L314.6 1711.5 L313.0 1709.3 L311.4 1711.1 L309.8 1712.8 L308.2 1712.8 L306.6 1711.9 L305.0 1710.0 L303.4 1713.7 L301.8 1713.6 L300.2 1705.4 L298.6 1707.7 L297.0 1705.5 L295.4 1708.0 L293.8 1705.5 L292.2 1706.9 L290.6 1707.1 L289.0 1705.0 L287.4 1706.0 L285.8 1706.6 L284.2 1705.9 L282.6 1708.0 L281.0 1705.4 L279.4 1707.9 L277.8 1705.4 L276.2 1706.8 L274.6 1706.8 L273.0 1706.7 L271.4 1706.8 L269.8 1705.3 L268.2 1705.0 L266.6 1708.2 L265.0 1706.6 L263.4 1705.6 L261.8 1707.1 L260.2 1706.7 L258.6 1706.4 L257.0 1707.5 L255.4 1705.9 L253.8 1705.3 L252.2 1707.0 L250.6 1707.4 L249.0 1706.7 L247.4 1707.2 L245.8 1705.9 L244.2 1705.5 L242.6 1706.6 L241.0 1707.5 L239.4 1707.7 L237.8 1708.0 L236.2 1705.4 L234.6 1706.0 L233.0 1705.7 L231.4 1706.3 L229.8 1706.3 L228.2 1707.7 L226.6 1706.0 L225.0 1706.2 L223.4 1705.5 L221.8 1706.2 L220.2 1705.3 L218.6 1705.5 L217.0 1707.3 L215.4 1707.6 L213.8 1706.6 L212.2 1705.3 L210.6 1707.0 L209.0 1707.0 L207.4 1707.0 L205.8 1706.8 L204.2 1708.8 L202.6 1709.0 L201.0 1708.8 L199.4 1710.2 L197.8 1708.3 L196.2 1709.8 L194.6 1711.6 L193.0 1710.3 L191.4 1710.2 L189.8 1709.2 L188.2 1710.3 L186.6 1707.3 L185.0 1705.4 L183.4 1706.7 L181.8 1707.5 L180.2 1706.1 L178.6 1706.2 L177.0 1706.2 L175.4 1708.2 L173.8 1706.8 L172.2 1705.3 L170.6 1704.8 L169.0 1707.1 L167.4 1707.4 L165.8 1707.4 L164.2 1706.9 L162.6 1708.0 L161.0 1706.3 Z"/>
</g>
<clipPath id="ccm2"><rect x="161.8" y="1556" width="3300" height="176"/></clipPath>
<rect x="150" y="1565.4" width="3205" height="161" rx="9" fill="none" stroke="#2a2e3b" stroke-width="2.2" clip-path="url(#ccm2)"/>
<text x="169.6" y="1607.0" font-size="25" fill="#1a1b26" textLength="211.4" lengthAdjust="spacingAndGlyphs" >DEMODAY-INSTR2</text>
<rect x="1872.0" y="853.5" width="28.0" height="176.5" fill="url(#phsh)" />
<line x1="1886.0" y1="853.0" x2="1886.0" y2="1030.5" stroke="#f4f4f4" stroke-width="2.4" />
<path d="M1872.4 162 L1899.8 162 L1886.1 185 Z" fill="#14122e" stroke="#fff" stroke-width="2" stroke-linejoin="round"/>
<path d="M43 186 L54 186 L43 197 Z" fill="#f2ab9b"/>
<path d="M43 325 L89 325 L43 371 Z" fill="#f5b9b8"/>
<text x="45.5" y="343.8" font-size="18.5" fill="#000" textLength="20.5" lengthAdjust="spacingAndGlyphs" stroke="#000" stroke-width="0.3">17</text>
<path d="M43 501 L89 501 L43 547 Z" fill="#ed6c2d"/>
<text x="45.5" y="519.8" font-size="18.5" fill="#000" textLength="20.5" lengthAdjust="spacingAndGlyphs" stroke="#000" stroke-width="0.3">18</text>
<path d="M43 677 L89 677 L43 723 Z" fill="#f19a4e"/>
<text x="45.5" y="695.8" font-size="18.5" fill="#000" textLength="20.5" lengthAdjust="spacingAndGlyphs" stroke="#000" stroke-width="0.3">19</text>
<path d="M43 853 L89 853 L43 899 Z" fill="#f6d346"/>
<text x="45.5" y="871.8" font-size="18.5" fill="#000" textLength="20.5" lengthAdjust="spacingAndGlyphs" stroke="#000" stroke-width="0.3">20</text>
<path d="M43 1029 L89 1029 L43 1075 Z" fill="#70ec5a"/>
<text x="45.5" y="1047.8" font-size="18.5" fill="#000" textLength="20.5" lengthAdjust="spacingAndGlyphs" stroke="#000" stroke-width="0.3">21</text>
<path d="M43 1205 L89 1205 L43 1251 Z" fill="#3f8ff5"/>
<text x="45.5" y="1223.8" font-size="18.5" fill="#000" textLength="20.5" lengthAdjust="spacingAndGlyphs" stroke="#000" stroke-width="0.3">22</text>
<path d="M43 1381 L89 1381 L43 1427 Z" fill="#9056f5"/>
<text x="45.5" y="1399.8" font-size="18.5" fill="#000" textLength="20.5" lengthAdjust="spacingAndGlyphs" stroke="#000" stroke-width="0.3">23</text>
<path d="M43 1557 L89 1557 L43 1603 Z" fill="#ea30da"/>
<text x="45.5" y="1575.8" font-size="18.5" fill="#000" textLength="20.5" lengthAdjust="spacingAndGlyphs" stroke="#000" stroke-width="0.3">24</text>
<text x="44.0" y="1753.5" font-size="20" fill="#6c6f7b" textLength="23.5" lengthAdjust="spacingAndGlyphs" >25</text>
<text x="44.0" y="1929.5" font-size="20" fill="#6c6f7b" textLength="23.5" lengthAdjust="spacingAndGlyphs" >26</text>
<circle cx="101.5" cy="233.5" r="29.5" fill="#2a2d3a"/>
<clipPath id="av1015_2335"><circle cx="101.5" cy="233.5" r="27.5"/></clipPath><g clip-path="url(#av1015_2335)">
<circle cx="101.5" cy="233.5" r="27.5" fill="#f0a7ad"/>
<ellipse cx="107.1896551724138" cy="229.70689655172413" rx="16.120689655172413" ry="18.017241379310345" fill="#7a4a2c"/>
<ellipse cx="98.65517241379311" cy="231.60344827586206" rx="11.85344827586207" ry="14.224137931034482" fill="#eebd9c"/>
<path d="M93.91379310344827 244.8793103448276 L114.77586206896552 239.18965517241378 L120.4655172413793 261.94827586206895 L90.12068965517241 261.94827586206895 Z" fill="#f6e6c8"/>
</g>
<text x="58.0" y="300.2" font-size="23.5" fill="#676b7d" textLength="87.0" lengthAdjust="spacingAndGlyphs" >Em…se</text>
<circle cx="88" cy="395.5" r="14.6" fill="#2a2d3a"/>
<clipPath id="av880_3955"><circle cx="88" cy="395.5" r="12.6"/></clipPath><g clip-path="url(#av880_3955)">
<circle cx="88" cy="395.5" r="12.6" fill="url(#avRed)"/>
<ellipse cx="89.30344827586207" cy="393.32758620689657" rx="6.0827586206896544" ry="6.0827586206896544" fill="#2a0d0b"/>
<path d="M84.52413793103449 397.23793103448276 L94.08275862068966 396.3689655172414 L98.42758620689655 408.5344827586207 L81.04827586206896 408.5344827586207 Z" fill="#1d0a09"/>
</g>
<circle cx="113.2" cy="395.5" r="14.6" fill="#2a2d3a"/>
<clipPath id="av1132_3955"><circle cx="113.2" cy="395.5" r="12.6"/></clipPath><g clip-path="url(#av1132_3955)">
<circle cx="113.2" cy="395.5" r="12.6" fill="#e9a3b4"/>
<ellipse cx="113.2" cy="394.6310344827586" rx="6.517241379310344" ry="8.689655172413794" fill="#e4572a"/>
<ellipse cx="112.76551724137931" cy="395.0655172413793" rx="3.910344827586207" ry="5.213793103448276" fill="#f2c7ae"/>
<path d="M105.37931034482759 408.5344827586207 L109.72413793103449 401.5827586206897 L117.5448275862069 401.5827586206897 L121.8896551724138 408.5344827586207 Z" fill="#f3efe9"/>
</g>
<circle cx="88" cy="421" r="14.6" fill="#2a2d3a"/>
<clipPath id="av880_4210"><circle cx="88" cy="421" r="12.6"/></clipPath><g clip-path="url(#av880_4210)">
<circle cx="88" cy="421" r="12.6" fill="#d2261a"/>
<ellipse cx="88" cy="419.26206896551724" rx="5.6482758620689655" ry="6.951724137931034" fill="#3a1410"/>
<ellipse cx="88" cy="420.1310344827586" rx="3.475862068965517" ry="4.779310344827586" fill="#d98a6a"/>
<path d="M80.17931034482758 434.0344827586207 L83.65517241379311 425.3448275862069 L92.34482758620689 425.3448275862069 L95.82068965517242 434.0344827586207 Z" fill="#1a0b0a"/>
</g>
<circle cx="113.8" cy="421.8" r="18.6" fill="#2a2d3a"/><circle cx="113.8" cy="421.8" r="16.7" fill="#fff"/>
<text x="113.8" y="430.3" font-size="24" fill="#000" text-anchor="middle" >6</text>
<text x="46.9" y="476.5" font-size="23.5" fill="#676b7d" textLength="110.3" lengthAdjust="spacingAndGlyphs" >Cho…ack</text>
<rect x="168.8" y="354.5" width="54.0" height="53.5" rx="8.5" fill="#202127" stroke="#32353f" stroke-width="2"/>
<text x="195.8" y="389.9" font-size="23.5" fill="#fff" textLength="16.5" lengthAdjust="spacingAndGlyphs" font-weight="bold" text-anchor="middle" >S</text>
<rect x="168.8" y="418.7" width="54.0" height="53.5" rx="8.5" fill="#202127" stroke="#32353f" stroke-width="2"/>
<text x="195.8" y="454.1" font-size="23.5" fill="#fff" textLength="32.5" lengthAdjust="spacingAndGlyphs" font-weight="bold" text-anchor="middle" >FX</text>
<circle cx="88" cy="571.5" r="14.6" fill="#2a2d3a"/>
<clipPath id="av880_5715"><circle cx="88" cy="571.5" r="12.6"/></clipPath><g clip-path="url(#av880_5715)">
<circle cx="88" cy="571.5" r="12.6" fill="url(#avRed)"/>
<ellipse cx="89.30344827586207" cy="569.3275862068965" rx="6.0827586206896544" ry="6.0827586206896544" fill="#2a0d0b"/>
<path d="M84.52413793103449 573.2379310344828 L94.08275862068966 572.3689655172413 L98.42758620689655 584.5344827586207 L81.04827586206896 584.5344827586207 Z" fill="#1d0a09"/>
</g>
<circle cx="113.2" cy="571.5" r="14.6" fill="#2a2d3a"/>
<clipPath id="av1132_5715"><circle cx="113.2" cy="571.5" r="12.6"/></clipPath><g clip-path="url(#av1132_5715)">
<circle cx="113.2" cy="571.5" r="12.6" fill="#f0a7ad"/>
<ellipse cx="115.80689655172414" cy="569.7620689655172" rx="7.386206896551724" ry="8.255172413793103" fill="#7a4a2c"/>
<ellipse cx="111.89655172413794" cy="570.6310344827587" rx="5.43103448275862" ry="6.517241379310344" fill="#eebd9c"/>
<path d="M109.72413793103449 576.7137931034483 L119.28275862068966 574.1068965517242 L121.8896551724138 584.5344827586207 L107.98620689655172 584.5344827586207 Z" fill="#f6e6c8"/>
</g>
<circle cx="88" cy="597" r="14.6" fill="#2a2d3a"/>
<clipPath id="av880_5970"><circle cx="88" cy="597" r="12.6"/></clipPath><g clip-path="url(#av880_5970)">
<circle cx="88" cy="597" r="12.6" fill="#e9a3b4"/>
<ellipse cx="88" cy="596.1310344827587" rx="6.517241379310344" ry="8.689655172413794" fill="#e4572a"/>
<ellipse cx="87.56551724137931" cy="596.5655172413793" rx="3.910344827586207" ry="5.213793103448276" fill="#f2c7ae"/>
<path d="M80.17931034482758 610.0344827586207 L84.52413793103449 603.0827586206897 L92.34482758620689 603.0827586206897 L96.6896551724138 610.0344827586207 Z" fill="#f3efe9"/>
</g>
<circle cx="113.8" cy="597.8" r="18.6" fill="#2a2d3a"/><circle cx="113.8" cy="597.8" r="16.7" fill="#fff"/>
<text x="113.8" y="606.3" font-size="24" fill="#000" text-anchor="middle" >6</text>
<text x="46.9" y="652.5" font-size="23.5" fill="#676b7d" textLength="110.3" lengthAdjust="spacingAndGlyphs" >Cho…ack</text>
<circle cx="88" cy="747.5" r="14.6" fill="#2a2d3a"/>
<clipPath id="av880_7475"><circle cx="88" cy="747.5" r="12.6"/></clipPath><g clip-path="url(#av880_7475)">
<circle cx="88" cy="747.5" r="12.6" fill="url(#avRed)"/>
<ellipse cx="89.30344827586207" cy="745.3275862068965" rx="6.0827586206896544" ry="6.0827586206896544" fill="#2a0d0b"/>
<path d="M84.52413793103449 749.2379310344828 L94.08275862068966 748.3689655172413 L98.42758620689655 760.5344827586207 L81.04827586206896 760.5344827586207 Z" fill="#1d0a09"/>
</g>
<circle cx="113.2" cy="747.5" r="14.6" fill="#2a2d3a"/>
<clipPath id="av1132_7475"><circle cx="113.2" cy="747.5" r="12.6"/></clipPath><g clip-path="url(#av1132_7475)">
<circle cx="113.2" cy="747.5" r="12.6" fill="#e45a78"/>
<ellipse cx="112.33103448275862" cy="746.6310344827587" rx="6.0827586206896544" ry="7.386206896551724" fill="#f1d8d0"/>
</g>
<circle cx="88" cy="773" r="14.6" fill="#2a2d3a"/>
<clipPath id="av880_7730"><circle cx="88" cy="773" r="12.6"/></clipPath><g clip-path="url(#av880_7730)">
<circle cx="88" cy="773" r="12.6" fill="#2b3146"/>
<ellipse cx="88" cy="770.8275862068965" rx="4.779310344827586" ry="4.344827586206897" fill="#d98a92"/>
<rect x="81.91724137931034" y="776.4758620689655" width="12.165517241379309" height="6.0827586206896544" fill="#cfd2e6"/>
</g>
<circle cx="113.8" cy="773.8" r="18.6" fill="#2a2d3a"/><circle cx="113.8" cy="773.8" r="16.7" fill="#fff"/>
<text x="113.8" y="782.3" font-size="24" fill="#000" text-anchor="middle" >6</text>
<text x="46.9" y="828.5" font-size="23.5" fill="#676b7d" textLength="110.3" lengthAdjust="spacingAndGlyphs" >Cho…ack</text>
<circle cx="88" cy="923.5" r="14.6" fill="#2a2d3a"/>
<clipPath id="av880_9235"><circle cx="88" cy="923.5" r="12.6"/></clipPath><g clip-path="url(#av880_9235)">
<circle cx="88" cy="923.5" r="12.6" fill="url(#avRed)"/>
<ellipse cx="89.30344827586207" cy="921.3275862068965" rx="6.0827586206896544" ry="6.0827586206896544" fill="#2a0d0b"/>
<path d="M84.52413793103449 925.2379310344828 L94.08275862068966 924.3689655172413 L98.42758620689655 936.5344827586207 L81.04827586206896 936.5344827586207 Z" fill="#1d0a09"/>
</g>
<circle cx="113.2" cy="923.5" r="14.6" fill="#2a2d3a"/>
<clipPath id="av1132_9235"><circle cx="113.2" cy="923.5" r="12.6"/></clipPath><g clip-path="url(#av1132_9235)">
<circle cx="113.2" cy="923.5" r="12.6" fill="#3a3f8a"/>
<ellipse cx="113.2" cy="922.196551724138" rx="4.779310344827586" ry="6.0827586206896544" fill="#6a4438"/>
<path d="M104.51034482758621 936.5344827586207 L109.72413793103449 928.2793103448275 L116.67586206896551 928.2793103448275 L121.8896551724138 936.5344827586207 Z" fill="#c9b6ee"/>
</g>
<circle cx="88" cy="949" r="14.6" fill="#2a2d3a"/>
<clipPath id="av880_9490"><circle cx="88" cy="949" r="12.6"/></clipPath><g clip-path="url(#av880_9490)">
<circle cx="88" cy="949" r="12.6" fill="#7fd85a"/>
<ellipse cx="88.86896551724138" cy="947.696551724138" rx="5.213793103448276" ry="6.517241379310344" fill="#d6402a"/>
<path d="M80.17931034482758 962.0344827586207 L84.52413793103449 953.3448275862069 L93.21379310344828 953.3448275862069 L96.6896551724138 962.0344827586207 Z" fill="#b2261a"/>
</g>
<circle cx="113.8" cy="949.8" r="18.6" fill="#2a2d3a"/><circle cx="113.8" cy="949.8" r="16.7" fill="#fff"/>
<text x="113.8" y="958.3" font-size="24" fill="#000" text-anchor="middle" >5</text>
<text x="46.9" y="1004.5" font-size="23.5" fill="#676b7d" textLength="110.3" lengthAdjust="spacingAndGlyphs" >Cho…ack</text>
<rect x="168.8" y="882.5" width="54.0" height="53.5" rx="8.5" fill="#202127" stroke="#32353f" stroke-width="2"/>
<text x="195.8" y="917.9" font-size="23.5" fill="#fff" textLength="16.5" lengthAdjust="spacingAndGlyphs" font-weight="bold" text-anchor="middle" >S</text>
<rect x="168.8" y="946.7" width="54.0" height="53.5" rx="8.5" fill="#202127" stroke="#32353f" stroke-width="2"/>
<text x="195.8" y="982.1" font-size="23.5" fill="#fff" textLength="32.5" lengthAdjust="spacingAndGlyphs" font-weight="bold" text-anchor="middle" >FX</text>
<circle cx="88" cy="1099.5" r="14.6" fill="#2a2d3a"/>
<clipPath id="av880_10995"><circle cx="88" cy="1099.5" r="12.6"/></clipPath><g clip-path="url(#av880_10995)">
<circle cx="88" cy="1099.5" r="12.6" fill="url(#avRed)"/>
<ellipse cx="89.30344827586207" cy="1097.3275862068965" rx="6.0827586206896544" ry="6.0827586206896544" fill="#2a0d0b"/>
<path d="M84.52413793103449 1101.2379310344827 L94.08275862068966 1100.3689655172413 L98.42758620689655 1112.5344827586207 L81.04827586206896 1112.5344827586207 Z" fill="#1d0a09"/>
</g>
<circle cx="113.2" cy="1099.5" r="14.6" fill="#2a2d3a"/>
<clipPath id="av1132_10995"><circle cx="113.2" cy="1099.5" r="12.6"/></clipPath><g clip-path="url(#av1132_10995)">
<circle cx="113.2" cy="1099.5" r="12.6" fill="#c8781e"/>
<path d="M113.2 1092.548275862069 L118.41379310344828 1101.2379310344827 L113.2 1107.3206896551724 L107.98620689655172 1101.2379310344827 Z" fill="#5a58c8"/>
</g>
<circle cx="88" cy="1125" r="14.6" fill="#2a2d3a"/>
<clipPath id="av880_11250"><circle cx="88" cy="1125" r="12.6"/></clipPath><g clip-path="url(#av880_11250)">
<circle cx="88" cy="1125" r="12.6" fill="#5a4a86"/>
<ellipse cx="89.30344827586207" cy="1125" rx="6.0827586206896544" ry="4.344827586206897" fill="#b9a7e6" transform="rotate(-30 88 1125)"/>
</g>
<circle cx="113.8" cy="1125.8" r="18.6" fill="#2a2d3a"/><circle cx="113.8" cy="1125.8" r="16.7" fill="#fff"/>
<text x="113.8" y="1134.3" font-size="24" fill="#000" text-anchor="middle" >7</text>
<text x="46.9" y="1180.5" font-size="23.5" fill="#676b7d" textLength="110.3" lengthAdjust="spacingAndGlyphs" >Cho…ack</text>
<rect x="168.8" y="1058.5" width="54.0" height="53.5" rx="8.5" fill="#202127" stroke="#32353f" stroke-width="2"/>
<text x="195.8" y="1093.9" font-size="23.5" fill="#fff" textLength="16.5" lengthAdjust="spacingAndGlyphs" font-weight="bold" text-anchor="middle" >S</text>
<rect x="168.8" y="1122.7" width="54.0" height="53.5" rx="8.5" fill="#202127" stroke="#32353f" stroke-width="2"/>
<text x="195.8" y="1158.1" font-size="23.5" fill="#fff" textLength="32.5" lengthAdjust="spacingAndGlyphs" font-weight="bold" text-anchor="middle" >FX</text>
<circle cx="101.8" cy="1289.5" r="29.5" fill="#2a2d3a"/>
<clipPath id="av1018_12895"><circle cx="101.8" cy="1289.5" r="27.5"/></clipPath><g clip-path="url(#av1018_12895)">
<circle cx="101.8" cy="1289.5" r="27.5" fill="url(#avBlue)"/>
<ellipse cx="101.8" cy="1278.1206896551723" rx="11.379310344827587" ry="8.53448275862069" fill="#241a2a"/>
<ellipse cx="101.8" cy="1286.655172413793" rx="9.482758620689655" ry="12.327586206896552" fill="#7a4a3a"/>
<path d="M79.04137931034482 1317.948275862069 Q82.83448275862068 1300.8793103448277 101.8 1301.8275862068965 Q120.76551724137931 1300.8793103448277 124.55862068965517 1317.948275862069 Z" fill="#f7b9c4"/>
</g>
<text x="66.0" y="1356.5" font-size="23.5" fill="#676b7d" textLength="71.5" lengthAdjust="spacingAndGlyphs" >Drex L</text>
<circle cx="101.8" cy="1465.5" r="29.5" fill="#2a2d3a"/>
<clipPath id="av1018_14655"><circle cx="101.8" cy="1465.5" r="27.5"/></clipPath><g clip-path="url(#av1018_14655)">
<circle cx="101.8" cy="1465.5" r="27.5" fill="#d8281a"/>
<circle cx="104.6448275862069" cy="1457.9137931034484" r="13.275862068965518" fill="#1c0a0a"/>
<ellipse cx="98.9551724137931" cy="1464.551724137931" rx="8.53448275862069" ry="10.431034482758621" fill="#5a1c14"/>
<path d="M82.83448275862068 1493.948275862069 L96.1103448275862 1474.9827586206898 L113.17931034482758 1473.0862068965516 L126.4551724137931 1493.948275862069 Z" fill="#160808"/>
</g>
<text x="77.7" y="1532.5" font-size="23.5" fill="#676b7d" textLength="47.5" lengthAdjust="spacingAndGlyphs" >Zalo</text>
<line x1="82.9" y1="1638.3" x2="82.9" y2="1645.3" stroke="#fff" stroke-width="3.2" stroke-linecap="round"/>
<line x1="92.4" y1="1633.3" x2="92.4" y2="1650.3" stroke="#fff" stroke-width="3.2" stroke-linecap="round"/>
<line x1="101.9" y1="1627.8" x2="101.9" y2="1655.8" stroke="#fff" stroke-width="3.2" stroke-linecap="round"/>
<line x1="111.4" y1="1633.3" x2="111.4" y2="1650.3" stroke="#fff" stroke-width="3.2" stroke-linecap="round"/>
<line x1="120.9" y1="1638.3" x2="120.9" y2="1645.3" stroke="#fff" stroke-width="3.2" stroke-linecap="round"/>
<text x="58.8" y="1708.5" font-size="23.5" fill="#676b7d" textLength="86.0" lengthAdjust="spacingAndGlyphs" >DE…R2</text>
<rect x="168.8" y="1586.5" width="54.0" height="53.5" rx="8.5" fill="#202127" stroke="#32353f" stroke-width="2"/>
<text x="195.8" y="1621.9" font-size="23.5" fill="#fff" textLength="16.5" lengthAdjust="spacingAndGlyphs" font-weight="bold" text-anchor="middle" >S</text>
<rect x="168.8" y="1650.7" width="54.0" height="53.5" rx="8.5" fill="#202127" stroke="#32353f" stroke-width="2"/>
<text x="195.8" y="1686.1" font-size="23.5" fill="#fff" textLength="32.5" lengthAdjust="spacingAndGlyphs" font-weight="bold" text-anchor="middle" >FX</text>
<rect x="3432.0" y="462.0" width="16.0" height="187.0" rx="8" fill="#2f3139" />
<circle cx="608" cy="2008.3" r="8" fill="#2b2d35"/><circle cx="902" cy="2008.3" r="8" fill="#2b2d35"/>
<rect x="624.0" y="2000.3" width="263.6" height="16.0" rx="8" fill="#2b2d35" />
</g>
<rect x="1" y="0.8" width="3454" height="2022.4" rx="22" fill="none" stroke="#50525a" stroke-width="1.8"/>
<path d="M20 1.2 L3435 1.2" stroke="#77787d" stroke-width="1.8"/>
<defs>
<clipPath id="pwclip"><rect x="1265" y="1486" width="3198" height="1318.5" rx="30"/></clipPath>
<clipPath id="gridclip"><rect x="1433" y="1671.8" width="3026" height="699.2"/></clipPath>
<linearGradient id="gshade" x1="0" x2="1" y1="0" y2="0"><stop offset="0" stop-color="#000" stop-opacity="0.28"/><stop offset="1" stop-color="#000" stop-opacity="0"/></linearGradient>
</defs>
<rect x="1263" y="1489" width="3202" height="1322.5" rx="30" fill="#000" opacity="0.30" filter="url(#pshadow)"/>
<g clip-path="url(#pwclip)">
<rect x="1265.0" y="1486.0" width="3198.0" height="1318.5" fill="#272a33" />
<rect x="1265.0" y="1486.0" width="32.0" height="89.5" fill="#f6d346" />
<line x1="1265.0" y1="1575.0" x2="4463.0" y2="1575.0" stroke="#30333c" stroke-width="2" />
<text x="1313.3" y="1543.6" font-size="26.5" fill="#fff" textLength="166.0" lengthAdjust="spacingAndGlyphs" font-weight="bold" >I don't want …</text>
<text x="1561.4" y="1541.6" font-size="26" fill="#fff" textLength="153.0" lengthAdjust="spacingAndGlyphs" >Auto-Medium</text>
<text x="1725.9" y="1541.6" font-size="26" fill="#9b9da4" textLength="87.0" lengthAdjust="spacingAndGlyphs" >Cell/Bar</text>
<path d="M1826.500 1530 L1830.700 1534.200 L1834.900 1530" fill="none" stroke="#9b9da4" stroke-width="2" stroke-linecap="round" stroke-linejoin="round"/>
<line x1="1863.4" y1="1502.0" x2="1863.4" y2="1564.6" stroke="#353842" stroke-width="2" />
<text x="1929.2" y="1543.4" font-size="26" fill="#fff" textLength="30.4" lengthAdjust="spacingAndGlyphs" >EN</text>
<path d="M1972.500 1532 L1976.700 1536.200 L1980.900 1532" fill="none" stroke="#9b9da4" stroke-width="2" stroke-linecap="round" stroke-linejoin="round"/>
<rect x="2009.0" y="1502.0" width="63.7" height="63.6" rx="8" fill="#5a5af6" />
<path d="M2031 1519.700 L2056 1537.300 L2044 1541 L2035.400 1550.500 Z" fill="#fff" stroke="#fff" stroke-width="3" stroke-linejoin="round"/>
<g transform="translate(2122.2 1532.3) rotate(45)" fill="#9c9da2"><path d="M-5.600 -12.500 L5.600 -12.500 L5.600 17 L1.500 24 L-4 24 Q-5.600 24 -5.600 22 Z"/><rect x="-5.600" y="-24.500" width="11.200" height="9.300" rx="2"/></g>
<g fill="none" stroke="#9c9da2" stroke-width="4" stroke-linecap="round"><circle cx="2191" cy="1543.500" r="6.800"/><circle cx="2211" cy="1543.500" r="6.800"/><path d="M2194.500 1538 L2209.500 1517.500 M2207.500 1538 L2192.500 1517.500"/></g>
<line x1="2250.1" y1="1502.0" x2="2250.1" y2="1564.6" stroke="#353842" stroke-width="2" />
<g transform="translate(2277 1515)">
<rect x="0.500" y="19.300" width="44" height="15.800" rx="1.500" fill="#4a4c55"/>
<path d="M2 36 Q4 27 9 24 Q14 19 18 24 Q22 29 27 28 Q34 26.300 43 26.800" fill="none" stroke="#9c9da2" stroke-width="4" stroke-linecap="round"/>
<path d="M24.500 21 L26 15.500 L39.500 2 Q41 0.500 42.500 2 L44 3.500 Q45.500 5 44 6.500 L30.500 20 Z" fill="#9c9da2"/>
</g>
<g transform="translate(2357 1515)">
<rect x="0.500" y="19.300" width="44" height="15.800" rx="1.500" fill="#4a4c55"/>
<path d="M25 28.500 Q32 26.500 44 26.800" fill="none" stroke="#23252b" stroke-width="4.200" stroke-linecap="round"/>
<path d="M2 36 Q4 27 9 24 Q14 19 18 24 Q21 28 24 29.500" fill="none" stroke="#9c9da2" stroke-width="4" stroke-linecap="round"/>
<path d="M31.500 9 L39.500 1 Q41 -0.500 42.500 1 L43.500 2 Q45 3.500 43.500 5 L35.500 13 Z" fill="#9c9da2"/>
<path d="M26 5.500 L39 18.500 L36.500 21 L23.500 8 Z" fill="#9c9da2"/><path d="M22 9.500 L35 22.500 L31 24.500 L19.500 12.500 Z" fill="#75777e"/>
</g>
<g transform="translate(2437 1515)">
<rect x="0.500" y="19.300" width="44" height="15.800" rx="1.500" fill="#4a4c55"/>
<path d="M2 36 Q4 27 9 24 Q14 19 18 24 Q22 29 27 28 Q34 26.300 43 26.800" fill="none" stroke="#9c9da2" stroke-width="4" stroke-linecap="round"/>
<path d="M23 13 L34.500 0.500 Q36 -1 37.500 0.300 L44 6.500 Q45.300 8 44 9.500 L32.500 21.500 Z" fill="#9c9da2"/>
<path d="M26.500 14.500 L29 12 L33 16 L30.500 18.500 Z" fill="none" stroke="#2a2c33" stroke-width="1.300"/>
</g>
<path d="M2319.500 1556.500 L2323 1560 L2326.500 1556.500" fill="none" stroke="#9c9da2" stroke-width="1.800" stroke-linecap="round" stroke-linejoin="round"/>
<path d="M2518.300 1537 C2521 1537 2522.500 1518.500 2526 1518.500 C2530.500 1518.500 2530.500 1549 2534.700 1549 C2539 1549 2539 1518.500 2543.200 1518.500 C2547.500 1518.500 2547.500 1549 2551.900 1549 C2555.500 1549 2556.500 1536 2559.500 1536" fill="none" stroke="#9c9da2" stroke-width="3.900" stroke-linecap="round"/>
<path d="M2619.100 1519 L2619.100 1549 M2612 1524.500 L2619.100 1517 L2626.200 1524.500 M2612 1543.500 L2619.100 1551 L2626.200 1543.500" fill="none" stroke="#686a72" stroke-width="3.600" stroke-linecap="round" stroke-linejoin="round"/>
<path d="M2598.500 1534.500 C2602 1533.500 2605 1527.300 2609.500 1527.300 C2615 1527.300 2622 1541.200 2628 1541.200 C2633 1541.200 2636 1534.800 2640 1533.700" fill="none" stroke="#a3a4a9" stroke-width="3.600" stroke-linecap="round"/>
<rect x="4383.0" y="1500.0" width="64.0" height="63.7" rx="9" fill="#323644" />
<path d="M4405.500 1522.500 L4424.500 1541.500 M4424.500 1522.500 L4405.500 1541.500" stroke="#fff" stroke-width="2.600" stroke-linecap="round"/>
<rect x="1265.0" y="1576.8" width="60.0" height="95.0" fill="#272a33" />
<rect x="1326.5" y="1576.8" width="106.5" height="95.0" fill="#292c34" />
<line x1="1325.5" y1="1576.8" x2="1325.5" y2="1671.8" stroke="#22242b" stroke-width="2.5" />
<line x1="1265.0" y1="1671.8" x2="1433.0" y2="1671.8" stroke="#30333c" stroke-width="1.5" />
<path d="M1287.500 1620.500 L1292 1620.500 L1299 1615 L1299 1634 L1292 1628.500 L1287.500 1628.500 Z" fill="#fff"/>
<path d="M1303 1618.500 L1307 1616 M1303.500 1624.500 L1308 1624.500 M1303 1630.500 L1307 1633" stroke="#fff" stroke-width="2" stroke-linecap="round"/>
<text x="1378.6" y="1614.2" font-size="21.5" fill="#9b9da4" text-anchor="middle" >C</text>
<text x="1378.6" y="1644.3" font-size="21.5" fill="#9b9da4" textLength="53.0" lengthAdjust="spacingAndGlyphs" text-anchor="middle" >Major</text>
<linearGradient id="pstrip" x1="0" x2="0" y1="0" y2="1"><stop offset="0" stop-color="#1d1e23"/><stop offset="1" stop-color="#25272c"/></linearGradient>
<rect x="1433.0" y="1576.0" width="3026.0" height="29.6" fill="url(#pstrip)" />
<line x1="1433.0" y1="1605.4" x2="4459.0" y2="1605.4" stroke="#30333c" stroke-width="1.6" />
<rect x="1433.0" y="1605.5" width="3026.0" height="66.5" fill="#1b1c21" />
<line x1="1443.8" y1="1577.0" x2="1443.8" y2="1605.0" stroke="#46484f" stroke-width="2" />
<line x1="1599.5" y1="1577.0" x2="1599.5" y2="1605.0" stroke="#46484f" stroke-width="2" />
<line x1="1755.3" y1="1577.0" x2="1755.3" y2="1605.0" stroke="#46484f" stroke-width="2" />
<line x1="1911.0" y1="1577.0" x2="1911.0" y2="1605.0" stroke="#46484f" stroke-width="2" />
<line x1="2066.8" y1="1577.0" x2="2066.8" y2="1605.0" stroke="#46484f" stroke-width="2" />
<line x1="2222.6" y1="1577.0" x2="2222.6" y2="1605.0" stroke="#46484f" stroke-width="2" />
<line x1="2378.3" y1="1577.0" x2="2378.3" y2="1605.0" stroke="#46484f" stroke-width="2" />
<line x1="2534.1" y1="1577.0" x2="2534.1" y2="1605.0" stroke="#46484f" stroke-width="2" />
<line x1="2689.8" y1="1577.0" x2="2689.8" y2="1605.0" stroke="#46484f" stroke-width="2" />
<line x1="2845.6" y1="1577.0" x2="2845.6" y2="1605.0" stroke="#46484f" stroke-width="2" />
<line x1="3001.3" y1="1577.0" x2="3001.3" y2="1605.0" stroke="#46484f" stroke-width="2" />
<line x1="3157.1" y1="1577.0" x2="3157.1" y2="1605.0" stroke="#46484f" stroke-width="2" />
<line x1="3312.8" y1="1577.0" x2="3312.8" y2="1605.0" stroke="#46484f" stroke-width="2" />
<line x1="3468.6" y1="1577.0" x2="3468.6" y2="1605.0" stroke="#46484f" stroke-width="2" />
<line x1="3624.3" y1="1577.0" x2="3624.3" y2="1605.0" stroke="#46484f" stroke-width="2" />
<line x1="3780.1" y1="1577.0" x2="3780.1" y2="1605.0" stroke="#46484f" stroke-width="2" />
<line x1="3935.8" y1="1577.0" x2="3935.8" y2="1605.0" stroke="#46484f" stroke-width="2" />
<line x1="4091.6" y1="1577.0" x2="4091.6" y2="1605.0" stroke="#46484f" stroke-width="2" />
<line x1="4247.3" y1="1577.0" x2="4247.3" y2="1605.0" stroke="#46484f" stroke-width="2" />
<line x1="4403.1" y1="1577.0" x2="4403.1" y2="1605.0" stroke="#46484f" stroke-width="2" />
<path d="M1445 1605.800 L4327 1605.800 L4319.500 1613.600 L1452.500 1613.600 Z" fill="#676c7d"/>
<line x1="1445.3" y1="1661.0" x2="1445.3" y2="1671.8" stroke="#a8a8ac" stroke-width="2" />
<text x="1454.8" y="1668.0" font-size="21" fill="#9b9da4" textLength="40.7" lengthAdjust="spacingAndGlyphs" >30.4</text>
<line x1="1601.0" y1="1665.0" x2="1601.0" y2="1671.8" stroke="#a8a8ac" stroke-width="2" />
<line x1="1756.8" y1="1613.8" x2="1756.8" y2="1671.8" stroke="#b8b8ba" stroke-width="2.2" />
<text x="1766.3" y="1668.0" font-size="21" fill="#fff" textLength="20.0" lengthAdjust="spacingAndGlyphs" stroke="#fff" stroke-width="0.5">31</text>
<line x1="1912.5" y1="1665.0" x2="1912.5" y2="1671.8" stroke="#a8a8ac" stroke-width="2" />
<line x1="2068.3" y1="1661.0" x2="2068.3" y2="1671.8" stroke="#a8a8ac" stroke-width="2" />
<text x="2077.8" y="1668.0" font-size="21" fill="#9b9da4" textLength="40.7" lengthAdjust="spacingAndGlyphs" >31.2</text>
<line x1="2224.1" y1="1665.0" x2="2224.1" y2="1671.8" stroke="#a8a8ac" stroke-width="2" />
<line x1="2379.8" y1="1661.0" x2="2379.8" y2="1671.8" stroke="#a8a8ac" stroke-width="2" />
<text x="2389.3" y="1668.0" font-size="21" fill="#9b9da4" textLength="40.7" lengthAdjust="spacingAndGlyphs" >31.3</text>
<line x1="2535.6" y1="1665.0" x2="2535.6" y2="1671.8" stroke="#a8a8ac" stroke-width="2" />
<line x1="2691.3" y1="1661.0" x2="2691.3" y2="1671.8" stroke="#a8a8ac" stroke-width="2" />
<text x="2700.8" y="1668.0" font-size="21" fill="#9b9da4" textLength="40.7" lengthAdjust="spacingAndGlyphs" >31.4</text>
<line x1="2847.1" y1="1665.0" x2="2847.1" y2="1671.8" stroke="#a8a8ac" stroke-width="2" />
<line x1="3002.8" y1="1613.8" x2="3002.8" y2="1671.8" stroke="#b8b8ba" stroke-width="2.2" />
<text x="3012.3" y="1668.0" font-size="21" fill="#fff" textLength="22.5" lengthAdjust="spacingAndGlyphs" stroke="#fff" stroke-width="0.5">32</text>
<line x1="3158.6" y1="1665.0" x2="3158.6" y2="1671.8" stroke="#a8a8ac" stroke-width="2" />
<line x1="3314.3" y1="1661.0" x2="3314.3" y2="1671.8" stroke="#a8a8ac" stroke-width="2" />
<text x="3323.8" y="1668.0" font-size="21" fill="#9b9da4" textLength="40.7" lengthAdjust="spacingAndGlyphs" >32.2</text>
<line x1="3470.1" y1="1665.0" x2="3470.1" y2="1671.8" stroke="#a8a8ac" stroke-width="2" />
<line x1="3625.8" y1="1661.0" x2="3625.8" y2="1671.8" stroke="#a8a8ac" stroke-width="2" />
<text x="3635.3" y="1668.0" font-size="21" fill="#9b9da4" textLength="40.7" lengthAdjust="spacingAndGlyphs" >32.3</text>
<line x1="3781.6" y1="1665.0" x2="3781.6" y2="1671.8" stroke="#a8a8ac" stroke-width="2" />
<line x1="3937.3" y1="1661.0" x2="3937.3" y2="1671.8" stroke="#a8a8ac" stroke-width="2" />
<text x="3946.8" y="1668.0" font-size="21" fill="#9b9da4" textLength="40.7" lengthAdjust="spacingAndGlyphs" >32.4</text>
<line x1="4093.1" y1="1665.0" x2="4093.1" y2="1671.8" stroke="#a8a8ac" stroke-width="2" />
<line x1="4248.8" y1="1613.8" x2="4248.8" y2="1671.8" stroke="#b8b8ba" stroke-width="2.2" />
<text x="4258.3" y="1668.0" font-size="21" fill="#fff" textLength="22.8" lengthAdjust="spacingAndGlyphs" stroke="#fff" stroke-width="0.5">33</text>
<line x1="4404.6" y1="1665.0" x2="4404.6" y2="1671.8" stroke="#a8a8ac" stroke-width="2" />
<g clip-path="url(#gridclip)">
<rect x="1433.0" y="1671.8" width="3026.0" height="699.2" fill="#202127" />
<rect x="1433.0" y="2376.0" width="3026.0" height="38.0" fill="#1b1c21" />
<rect x="1433.0" y="2262.0" width="3026.0" height="38.0" fill="#1b1c21" />
<rect x="1433.0" y="2186.0" width="3026.0" height="38.0" fill="#1b1c21" />
<rect x="1433.0" y="2072.0" width="3026.0" height="38.0" fill="#1b1c21" />
<rect x="1433.0" y="1996.0" width="3026.0" height="38.0" fill="#1b1c21" />
<rect x="1433.0" y="1920.0" width="3026.0" height="38.0" fill="#1b1c21" />
<rect x="1433.0" y="1806.0" width="3026.0" height="38.0" fill="#1b1c21" />
<rect x="1433.0" y="1730.0" width="3026.0" height="38.0" fill="#1b1c21" />
<rect x="1433.0" y="1671.8" width="70.0" height="699.2" fill="url(#gshade)" />
<line x1="1445.3" y1="1671.1" x2="1445.3" y2="2371.0" stroke="#464853" stroke-width="2" stroke-dasharray="10 6"/>
<line x1="1601.0" y1="1671.1" x2="1601.0" y2="2371.0" stroke="#33353d" stroke-width="2" stroke-dasharray="10 6"/>
<line x1="1756.8" y1="1671.1" x2="1756.8" y2="2371.0" stroke="#7a7e90" stroke-width="2.2" stroke-dasharray="10 6"/>
<line x1="1912.5" y1="1671.1" x2="1912.5" y2="2371.0" stroke="#33353d" stroke-width="2" stroke-dasharray="10 6"/>
<line x1="2068.3" y1="1671.1" x2="2068.3" y2="2371.0" stroke="#464853" stroke-width="2" stroke-dasharray="10 6"/>
<line x1="2224.1" y1="1671.1" x2="2224.1" y2="2371.0" stroke="#33353d" stroke-width="2" stroke-dasharray="10 6"/>
<line x1="2379.8" y1="1671.1" x2="2379.8" y2="2371.0" stroke="#464853" stroke-width="2" stroke-dasharray="10 6"/>
<line x1="2535.6" y1="1671.1" x2="2535.6" y2="2371.0" stroke="#33353d" stroke-width="2" stroke-dasharray="10 6"/>
<line x1="2691.3" y1="1671.1" x2="2691.3" y2="2371.0" stroke="#464853" stroke-width="2" stroke-dasharray="10 6"/>
<line x1="2847.1" y1="1671.1" x2="2847.1" y2="2371.0" stroke="#33353d" stroke-width="2" stroke-dasharray="10 6"/>
<line x1="3002.8" y1="1671.1" x2="3002.8" y2="2371.0" stroke="#7a7e90" stroke-width="2.2" stroke-dasharray="10 6"/>
<line x1="3158.6" y1="1671.1" x2="3158.6" y2="2371.0" stroke="#33353d" stroke-width="2" stroke-dasharray="10 6"/>
<line x1="3314.3" y1="1671.1" x2="3314.3" y2="2371.0" stroke="#464853" stroke-width="2" stroke-dasharray="10 6"/>
<line x1="3470.1" y1="1671.1" x2="3470.1" y2="2371.0" stroke="#33353d" stroke-width="2" stroke-dasharray="10 6"/>
<line x1="3625.8" y1="1671.1" x2="3625.8" y2="2371.0" stroke="#464853" stroke-width="2" stroke-dasharray="10 6"/>
<line x1="3781.6" y1="1671.1" x2="3781.6" y2="2371.0" stroke="#33353d" stroke-width="2" stroke-dasharray="10 6"/>
<line x1="3937.3" y1="1671.1" x2="3937.3" y2="2371.0" stroke="#464853" stroke-width="2" stroke-dasharray="10 6"/>
<line x1="4093.1" y1="1671.1" x2="4093.1" y2="2371.0" stroke="#33353d" stroke-width="2" stroke-dasharray="10 6"/>
<line x1="4248.8" y1="1671.1" x2="4248.8" y2="2371.0" stroke="#7a7e90" stroke-width="2.2" stroke-dasharray="10 6"/>
<line x1="4404.6" y1="1671.1" x2="4404.6" y2="2371.0" stroke="#33353d" stroke-width="2" stroke-dasharray="10 6"/>
<rect x="1756.8" y="1858.7" width="312.0" height="8.0" fill="#b66a3d" />
<rect x="2068.7" y="1745.0" width="311.5" height="8.0" fill="#b66a3d" />
<rect x="1433.0" y="1972.8" width="323.8" height="8.0" fill="#47326f" />
<rect x="1757.8" y="2301.0" width="309.9" height="36.5" fill="#f6d346" stroke="#8c7a22" stroke-width="2"/>
<text x="1765.3" y="2327.8" font-size="25.5" fill="#1a1b26" >I</text>
<text x="1757.3" y="2286.4" font-size="24.5" fill="#9b9da4" textLength="41.0" lengthAdjust="spacingAndGlyphs" >[ay]</text>
<rect x="2069.7" y="2187.0" width="309.5" height="36.5" fill="#f6d346" stroke="#8c7a22" stroke-width="2"/>
<text x="2077.2" y="2213.8" font-size="25.5" fill="#1a1b26" textLength="56.0" lengthAdjust="spacingAndGlyphs" >don't</text>
<text x="2069.2" y="2172.4" font-size="24.5" fill="#9b9da4" textLength="137.5" lengthAdjust="spacingAndGlyphs" >[d][ow][n][t]</text>
<rect x="2381.2" y="1921.0" width="308.8" height="36.5" fill="#f6d346" stroke="#8c7a22" stroke-width="2"/>
<text x="2388.7" y="1947.8" font-size="25.5" fill="#1a1b26" textLength="54.0" lengthAdjust="spacingAndGlyphs" >want</text>
<text x="2380.7" y="1906.4" font-size="24.5" fill="#9b9da4" textLength="138.0" lengthAdjust="spacingAndGlyphs" >[w][aa][n][t]</text>
<rect x="2692.0" y="1845.0" width="310.0" height="36.5" fill="#f6d346" stroke="#8c7a22" stroke-width="2"/>
<text x="2699.5" y="1871.8" font-size="25.5" fill="#1a1b26" textLength="22.0" lengthAdjust="spacingAndGlyphs" >to</text>
<text x="2691.5" y="1830.4" font-size="24.5" fill="#9b9da4" textLength="73.7" lengthAdjust="spacingAndGlyphs" >[t][uw]</text>
<rect x="3004.0" y="1845.0" width="76.2" height="36.5" fill="#f6d346" stroke="#8c7a22" stroke-width="2"/>
<text x="3011.5" y="1871.8" font-size="25.5" fill="#1a1b26" textLength="59.0" lengthAdjust="spacingAndGlyphs" >leave</text>
<text x="3003.5" y="1830.4" font-size="24.5" fill="#9b9da4" textLength="61.0" lengthAdjust="spacingAndGlyphs" >[l][i…</text>
<rect x="3081.7" y="1769.0" width="76.7" height="36.5" fill="#f6d346" stroke="#8c7a22" stroke-width="2"/>
<text x="3089.2" y="1795.8" font-size="25.5" fill="#1a1b26" >-</text>
<rect x="3160.0" y="1845.0" width="154.0" height="36.5" fill="#f6d346" stroke="#8c7a22" stroke-width="2"/>
<text x="3167.5" y="1871.8" font-size="25.5" fill="#1a1b26" >-</text>
<rect x="3315.0" y="1921.0" width="232.6" height="36.5" fill="#f6d346" stroke="#8c7a22" stroke-width="2"/>
<text x="3322.5" y="1947.8" font-size="25.5" fill="#1a1b26" textLength="40.0" lengthAdjust="spacingAndGlyphs" >you</text>
<text x="3314.5" y="1906.4" font-size="24.5" fill="#9b9da4" textLength="78.0" lengthAdjust="spacingAndGlyphs" >[y][uw]</text>
<rect x="3626.4" y="1921.0" width="154.4" height="36.5" fill="#f6d346" stroke="#8c7a22" stroke-width="2"/>
<text x="3633.9" y="1947.8" font-size="25.5" fill="#1a1b26" textLength="46.0" lengthAdjust="spacingAndGlyphs" >now</text>
<text x="3625.9" y="1906.4" font-size="24.5" fill="#9b9da4" textLength="79.0" lengthAdjust="spacingAndGlyphs" >[n][aw]</text>
<rect x="3782.3" y="2035.0" width="232.2" height="36.5" fill="#f6d346" stroke="#8c7a22" stroke-width="2"/>
<text x="3789.8" y="2061.8" font-size="25.5" fill="#1a1b26" >-</text>
<circle cx="1920.700" cy="2358.300" r="8" fill="#2d2f37"/><circle cx="3360.800" cy="2358.300" r="8" fill="#2d2f37"/>
<rect x="1937.7" y="2350.3" width="1408.0" height="16.0" rx="8" fill="#2d2f37" />
<circle cx="4444.600" cy="1971.200" r="8" fill="#2d2f37"/><circle cx="4444.600" cy="2124.200" r="8" fill="#2d2f37"/>
<rect x="4436.6" y="1987.0" width="16.0" height="123.0" rx="8" fill="#2d2f37" />
</g>
<rect x="1265.0" y="1671.8" width="60.0" height="699.2" fill="#202127" />
<rect x="1320.5" y="1671.8" width="4.5" height="699.2" fill="#1a1b20" />
<rect x="1324.5" y="1671.8" width="108.5" height="699.2" fill="#fff" />
<line x1="1324.5" y1="1671.8" x2="1324.5" y2="2371.0" stroke="#17181c" stroke-width="2.5" />
<line x1="1325.0" y1="2402.6" x2="1433.0" y2="2402.6" stroke="#1b1c21" stroke-width="3.2" />
<line x1="1325.0" y1="2337.5" x2="1433.0" y2="2337.5" stroke="#1b1c21" stroke-width="3.2" />
<line x1="1325.0" y1="2272.4" x2="1433.0" y2="2272.4" stroke="#1b1c21" stroke-width="3.2" />
<line x1="1325.0" y1="2207.2" x2="1433.0" y2="2207.2" stroke="#1b1c21" stroke-width="3.2" />
<line x1="1325.0" y1="2142.1" x2="1433.0" y2="2142.1" stroke="#1b1c21" stroke-width="3.2" />
<line x1="1325.0" y1="2076.9" x2="1433.0" y2="2076.9" stroke="#1b1c21" stroke-width="3.2" />
<line x1="1325.0" y1="2011.8" x2="1433.0" y2="2011.8" stroke="#1b1c21" stroke-width="3.2" />
<line x1="1325.0" y1="1946.6" x2="1433.0" y2="1946.6" stroke="#1b1c21" stroke-width="3.2" />
<line x1="1325.0" y1="1881.5" x2="1433.0" y2="1881.5" stroke="#1b1c21" stroke-width="3.2" />
<line x1="1325.0" y1="1816.4" x2="1433.0" y2="1816.4" stroke="#1b1c21" stroke-width="3.2" />
<line x1="1325.0" y1="1751.2" x2="1433.0" y2="1751.2" stroke="#1b1c21" stroke-width="3.2" />
<line x1="1325.0" y1="1686.1" x2="1433.0" y2="1686.1" stroke="#1b1c21" stroke-width="3.2" />
<path d="M1325 2374.0 L1379 2374.0 Q1383.500 2374.0 1383.500 2378.5 L1383.500 2411.5 Q1383.500 2416.0 1379 2416.0 L1325 2416.0 Z" fill="#1c1d22"/>
<path d="M1325 2260.0 L1379 2260.0 Q1383.500 2260.0 1383.500 2264.5 L1383.500 2297.5 Q1383.500 2302.0 1379 2302.0 L1325 2302.0 Z" fill="#1c1d22"/>
<path d="M1325 2184.0 L1379 2184.0 Q1383.500 2184.0 1383.500 2188.5 L1383.500 2221.5 Q1383.500 2226.0 1379 2226.0 L1325 2226.0 Z" fill="#1c1d22"/>
<path d="M1325 2070.0 L1379 2070.0 Q1383.500 2070.0 1383.500 2074.5 L1383.500 2107.5 Q1383.500 2112.0 1379 2112.0 L1325 2112.0 Z" fill="#1c1d22"/>
<path d="M1325 1994.0 L1379 1994.0 Q1383.500 1994.0 1383.500 1998.5 L1383.500 2031.5 Q1383.500 2036.0 1379 2036.0 L1325 2036.0 Z" fill="#1c1d22"/>
<path d="M1325 1918.0 L1379 1918.0 Q1383.500 1918.0 1383.500 1922.5 L1383.500 1955.5 Q1383.500 1960.0 1379 1960.0 L1325 1960.0 Z" fill="#1c1d22"/>
<path d="M1325 1804.0 L1379 1804.0 Q1383.500 1804.0 1383.500 1808.5 L1383.500 1841.5 Q1383.500 1846.0 1379 1846.0 L1325 1846.0 Z" fill="#1c1d22"/>
<path d="M1325 1728.0 L1379 1728.0 Q1383.500 1728.0 1383.500 1732.5 L1383.500 1765.5 Q1383.500 1770.0 1379 1770.0 L1325 1770.0 Z" fill="#1c1d22"/>
<text x="1279.9" y="1872.6" font-size="28" fill="#fff" textLength="34.0" lengthAdjust="spacingAndGlyphs" >C4</text>
<line x1="1265.0" y1="1881.6" x2="1325.0" y2="1881.6" stroke="#6c6f7c" stroke-width="1.6" />
<text x="1279.9" y="2328.6" font-size="28" fill="#fff" textLength="34.0" lengthAdjust="spacingAndGlyphs" >C3</text>
<line x1="1265.0" y1="2337.6" x2="1325.0" y2="2337.6" stroke="#6c6f7c" stroke-width="1.6" />
<rect x="1265.0" y="2371.0" width="3198.0" height="9.5" fill="#272a33" />
<rect x="1265.0" y="2380.3" width="168.0" height="331.0" fill="#272a33" />
<rect x="1433.0" y="2380.3" width="3026.0" height="331.0" fill="#1b1c21" />
<rect x="1433.0" y="2380.3" width="228.0" height="331.0" fill="#09090a" />
<rect x="4147.6" y="2380.3" width="311.4" height="331.0" fill="#09090a" />
<path d="M1661.1 2671.4 L1688.5 2649.0 L1713.0 2625.5 L1738.3 2601.6 L1763.0 2581.0 L1788.2 2561.8 L1813.1 2545.3 L1838.0 2531.9 L1867.9 2522.9 L1907.8 2515.4 L1937.7 2511.9 L2002.4 2511.4 L2037.3 2516.9 L2087.2 2524.4 L2147.0 2532.9 L2186.8 2541.8 L2231.7 2549.3 L2301.4 2552.8 L2336.3 2561.8 L2386.2 2584.2 L2403.6 2595.1 L2412.5 2595.1 L2459.8 2615.1 L2514.6 2631.5 L2574.4 2643.0 L2619.3 2647.5 L2664.1 2651.5 L2723.9 2651.5 L2748.8 2647.5 L2798.7 2641.5 L2848.5 2629.0 L2898.3 2619.0 L2948.2 2599.1 L2998.0 2582.2 L3047.8 2565.2 L3072.7 2559.3 L3107.6 2554.3 L3127.6 2551.8 L3199.8 2551.8 L3222.2 2559.3 L3264.6 2577.7 L3384.2 2577.7 L3434.0 2571.7 L3466.4 2569.2 L3536.2 2569.2 L3582.0 2565.7 L3626.8 2563.3 L3681.7 2563.3 L3731.5 2569.2 L3801.3 2569.2 L3861.0 2563.3 L3905.9 2563.3 L3940.8 2567.7 L3970.7 2575.2 L3995.6 2585.2 L4045.4 2611.6 L4080.3 2634.0 L4120.2 2658.9 L4147.6 2671.4 L4147.600 2672.400 L1661.100 2672.400 Z" fill="#897824"/>
<path d="M1661.1 2671.4 L1688.5 2649.0 L1713.0 2625.5 L1738.3 2601.6 L1763.0 2581.0 L1788.2 2561.8 L1813.1 2545.3 L1838.0 2531.9 L1867.9 2522.9 L1907.8 2515.4 L1937.7 2511.9 L2002.4 2511.4 L2037.3 2516.9 L2087.2 2524.4 L2147.0 2532.9 L2186.8 2541.8 L2231.7 2549.3 L2301.4 2552.8 L2336.3 2561.8 L2386.2 2584.2 L2403.6 2595.1 L2412.5 2595.1 L2459.8 2615.1 L2514.6 2631.5 L2574.4 2643.0 L2619.3 2647.5 L2664.1 2651.5 L2723.9 2651.5 L2748.8 2647.5 L2798.7 2641.5 L2848.5 2629.0 L2898.3 2619.0 L2948.2 2599.1 L2998.0 2582.2 L3047.8 2565.2 L3072.7 2559.3 L3107.6 2554.3 L3127.6 2551.8 L3199.8 2551.8 L3222.2 2559.3 L3264.6 2577.7 L3384.2 2577.7 L3434.0 2571.7 L3466.4 2569.2 L3536.2 2569.2 L3582.0 2565.7 L3626.8 2563.3 L3681.7 2563.3 L3731.5 2569.2 L3801.3 2569.2 L3861.0 2563.3 L3905.9 2563.3 L3940.8 2567.7 L3970.7 2575.2 L3995.6 2585.2 L4045.4 2611.6 L4080.3 2634.0 L4120.2 2658.9 L4147.6 2671.4" fill="none" stroke="#ecc93a" stroke-width="2.200" stroke-linejoin="round"/>
<line x1="1433.0" y1="2672.6" x2="4459.0" y2="2672.6" stroke="#6b6e7c" stroke-width="1.8" />
<line x1="1433.0" y1="2397.3" x2="1441.0" y2="2397.3" stroke="#6b6e7c" stroke-width="1.6" />
<line x1="1433.0" y1="2452.1" x2="1441.0" y2="2452.1" stroke="#6b6e7c" stroke-width="1.6" />
<line x1="1433.0" y1="2561.8" x2="1441.0" y2="2561.8" stroke="#6b6e7c" stroke-width="1.6" />
<text x="1434.3" y="2447.6" font-size="25.5" fill="#7d8089" textLength="79.7" lengthAdjust="spacingAndGlyphs" >+100%</text>
<text x="1434.3" y="2669.4" font-size="25.5" fill="#7d8089" textLength="85.7" lengthAdjust="spacingAndGlyphs" >Normal</text>
<path d="M1519.6 2683.5 Q1520.6 2691.5 1527.6 2692.5 Q1520.6 2693.5 1519.6 2701.5 Q1518.6 2693.5 1511.6 2692.5 Q1518.6 2691.5 1519.6 2683.5 Z" fill="#fff"/>
<path d="M1526.6 2680.5 L1527.8999999999999 2684.2 L1531.6 2685.5 L1527.8999999999999 2686.8 L1526.6 2690.5 L1525.3 2686.8 L1521.6 2685.5 L1525.3 2684.2 Z" fill="#fff"/>
<text x="1532.1" y="2701.2" font-size="25.5" fill="#fff" textLength="56.5" lengthAdjust="spacingAndGlyphs" >Auto</text>
<path d="M4275.2 2683.5 Q4276.2 2691.5 4283.2 2692.5 Q4276.2 2693.5 4275.2 2701.5 Q4274.2 2693.5 4267.2 2692.5 Q4274.2 2691.5 4275.2 2683.5 Z" fill="#fff"/>
<path d="M4282.2 2680.5 L4283.5 2684.2 L4287.2 2685.5 L4283.5 2686.8 L4282.2 2690.5 L4280.9 2686.8 L4277.2 2685.5 L4280.9 2684.2 Z" fill="#fff"/>
<text x="4287.7" y="2701.2" font-size="25.5" fill="#fff" textLength="56.5" lengthAdjust="spacingAndGlyphs" >Auto</text>
<circle cx="1350.600" cy="2480" r="27.600" fill="none" stroke="#fff" stroke-width="2.200"/>
<line x1="1339.7" y1="2491.5" x2="1332.8" y2="2498.5" stroke="#fff" stroke-width="2.2" stroke-linecap="round"/>
<text x="1350.6" y="2544.0" font-size="25.5" fill="#fff" textLength="51.8" lengthAdjust="spacingAndGlyphs" text-anchor="middle" stroke="#fff" stroke-width="0.4">+0%</text>
<text x="1350.6" y="2574.6" font-size="26.5" fill="#7d8089" textLength="75.7" lengthAdjust="spacingAndGlyphs" text-anchor="middle" >Global</text>
<circle cx="1350.600" cy="2663.900" r="14.300" fill="none" stroke="#7d8089" stroke-width="1.800"/>
<text x="1350.6" y="2670.4" font-size="18" fill="#7d8089" text-anchor="middle" >?</text>
<line x1="1265.0" y1="2711.8" x2="4463.0" y2="2711.8" stroke="#30333c" stroke-width="2" />
<text x="2483.7" y="2765.2" font-size="26" fill="#8b8d95" textLength="73.8" lengthAdjust="spacingAndGlyphs" >Breath</text>
<line x1="2619.8" y1="2736.0" x2="2619.8" y2="2775.0" stroke="#3a3d47" stroke-width="2" />
<rect x="2641.2" y="2723.7" width="643.3" height="63.8" rx="31.9" fill="#1d1e23" />
<g transform="translate(2718.3 2755.500) rotate(45)"><path d="M-3.600 -10.500 L3.600 -10.500 L3.600 5.500 L0 11.500 L-3.600 5.500 Z" fill="#fff"/></g>
<text x="2733.9" y="2765.2" font-size="26" fill="#fff" textLength="69.7" lengthAdjust="spacingAndGlyphs" >Power</text>
<g transform="translate(2861.8 2755.500) rotate(45)"><path d="M-3.600 -10.500 L3.600 -10.500 L3.600 5.500 L0 11.500 L-3.600 5.500 Z" fill="#8b8d95"/></g>
<text x="2877.4" y="2765.2" font-size="26" fill="#8b8d95" textLength="45.8" lengthAdjust="spacingAndGlyphs" >Soft</text>
<g transform="translate(2981.3 2755.500) rotate(45)"><path d="M-3.600 -10.500 L3.600 -10.500 L3.600 5.500 L0 11.500 L-3.600 5.500 Z" fill="#8b8d95"/></g>
<text x="2998.0" y="2765.2" font-size="26" fill="#8b8d95" textLength="85.7" lengthAdjust="spacingAndGlyphs" >Breathy</text>
<g transform="translate(3141.8 2755.500) rotate(45)"><path d="M-3.600 -10.500 L3.600 -10.500 L3.600 5.500 L0 11.500 L-3.600 5.500 Z" fill="#8b8d95"/></g>
<text x="3158.0" y="2765.2" font-size="26" fill="#8b8d95" textLength="65.2" lengthAdjust="spacingAndGlyphs" >Chest</text>
</g>
<rect x="1267" y="1488" width="3194" height="1314.5" rx="28" fill="none" stroke="#2f3340" stroke-width="4"/>
</svg>
</body></html>
